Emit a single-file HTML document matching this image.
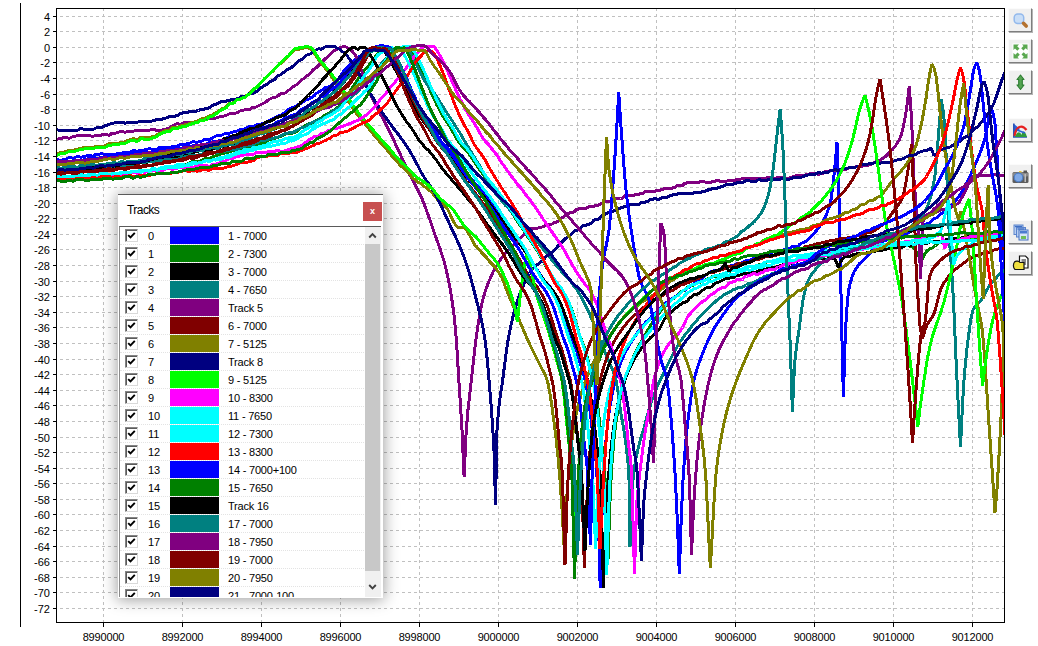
<!DOCTYPE html>
<html><head><meta charset="utf-8"><title>Tracks</title>
<style>
html,body{margin:0;padding:0;background:#fff;}
body{width:1038px;height:646px;position:relative;overflow:hidden;font-family:"Liberation Sans",sans-serif;font-size:11px;color:#000;}
#chart{position:absolute;left:0;top:0;}
#chart text{font-family:"Liberation Sans",sans-serif;font-size:11px;fill:#000;}
.tb{position:absolute;left:1008px;width:22px;height:22px;background:#f0f0f0;border-right:1px solid #7e7e7e;border-bottom:1px solid #7e7e7e;border-left:1px solid #fbfbfb;border-top:1px solid #fbfbfb;box-shadow:1px 1px 0 #b4b4b4;}
.tb svg{position:absolute;left:2px;top:2px;}
#panel{position:absolute;left:118px;top:194px;width:265px;height:404px;background:#fff;box-shadow:0 1px 14px 1px rgba(0,0,0,.38);}
#ptop{position:absolute;left:0;top:0;width:265px;height:1px;background:#5a5a5a;}
#ttl{position:absolute;left:9px;top:8px;font-size:12px;line-height:16px;letter-spacing:-0.55px;}
#cls{position:absolute;left:245px;top:8px;width:19px;height:19px;background:#c75050;color:#fff;font-size:9px;font-weight:bold;text-align:center;line-height:19px;}
#list{position:absolute;left:1px;top:32px;width:262px;height:371px;border-top:1px solid #5a5a5a;border-left:1px solid #8a8a8a;overflow:hidden;background:#fff;box-sizing:border-box;}
.row{position:absolute;left:0;width:246px;height:18px;border-bottom:1px dotted #e3e3e3;box-sizing:border-box;}
.cb{position:absolute;left:5px;top:2px;width:11px;height:11px;border:1px solid #848484;border-right-color:#d9d9d9;border-bottom-color:#d9d9d9;background:#fff;box-shadow:inset 1px 1px 0 #5a5a5a;}
.cb svg{position:absolute;left:1px;top:1px;}
.ix{position:absolute;left:28px;top:1px;line-height:16px;font-size:11px;}
.sw{position:absolute;left:50px;top:0;width:49px;height:17px;}
.nm{position:absolute;left:108px;top:1px;line-height:16px;font-size:11px;white-space:nowrap;letter-spacing:-0.2px;}
#sb{position:absolute;left:245px;top:0;width:16px;height:371px;background:#f0f0f0;}
#th{position:absolute;left:0;top:17px;width:15px;height:327px;background:#c8c8c8;}
</style></head><body>
<svg id="chart" width="1038" height="646" viewBox="0 0 1038 646">
<rect x="0" y="0" width="1038" height="646" fill="#fff"/>
<path d="M60.0 16.5H1004.0M60.0 31.5H1004.0M60.0 47.5H1004.0M60.0 62.5H1004.0M60.0 78.5H1004.0M60.0 94.5H1004.0M60.0 109.5H1004.0M60.0 125.5H1004.0M60.0 140.5H1004.0M60.0 156.5H1004.0M60.0 172.5H1004.0M60.0 187.5H1004.0M60.0 203.5H1004.0M60.0 218.5H1004.0M60.0 234.5H1004.0M60.0 249.5H1004.0M60.0 265.5H1004.0M60.0 281.5H1004.0M60.0 296.5H1004.0M60.0 312.5H1004.0M60.0 327.5H1004.0M60.0 343.5H1004.0M60.0 359.5H1004.0M60.0 374.5H1004.0M60.0 390.5H1004.0M60.0 405.5H1004.0M60.0 421.5H1004.0M60.0 437.5H1004.0M60.0 452.5H1004.0M60.0 468.5H1004.0M60.0 483.5H1004.0M60.0 499.5H1004.0M60.0 514.5H1004.0M60.0 530.5H1004.0M60.0 546.5H1004.0M60.0 561.5H1004.0M60.0 577.5H1004.0M60.0 592.5H1004.0M60.0 608.5H1004.0M103.5 8.0V622.0M182.5 8.0V622.0M261.5 8.0V622.0M340.5 8.0V622.0M419.5 8.0V622.0M498.5 8.0V622.0M577.5 8.0V622.0M656.5 8.0V622.0M735.5 8.0V622.0M814.5 8.0V622.0M893.5 8.0V622.0M972.5 8.0V622.0" stroke="#c0c0c0" stroke-width="1" stroke-dasharray="3 3" fill="none" shape-rendering="crispEdges"/>
<clipPath id="cp"><rect x="57" y="9" width="947" height="613"/></clipPath>
<g clip-path="url(#cp)" fill="none" stroke-width="3" stroke-linejoin="bevel" stroke-linecap="square" shape-rendering="crispEdges">
<path d="M56.0 160.5L58.0 159.5L60.0 160.5L62.0 160.0L64.0 159.5L66.0 159.0L68.0 158.0L70.0 157.5L72.0 158.0L74.0 158.0L76.0 157.0L78.0 156.5L80.0 157.0L82.0 157.0L84.0 156.0L86.0 156.0L88.0 155.5L89.5 155.0L90.0 155.0L92.0 156.0L94.0 156.0L96.0 154.0L98.0 154.0L100.0 154.0L102.0 153.5L104.0 154.5L106.0 154.5L108.0 154.5L110.0 154.0L112.0 154.0L114.0 154.0L116.0 154.0L118.0 153.5L120.0 153.5L122.0 153.0L124.0 152.5L126.0 152.0L128.0 152.5L129.0 152.5L130.0 152.0L132.0 151.0L134.0 150.5L136.0 151.0L138.0 151.0L140.0 150.5L142.0 150.5L144.0 150.0L146.0 149.5L148.0 149.0L150.0 148.5L152.0 149.5L154.0 149.0L155.0 149.0L156.0 149.0L158.0 149.0L160.0 147.0L162.0 147.0L164.0 147.5L166.0 147.0L168.0 147.5L170.0 147.5L172.0 146.5L174.0 146.0L176.0 146.5L178.0 146.0L180.0 144.5L181.6 144.5L182.0 144.0L184.0 144.5L186.0 144.0L188.0 143.5L190.0 143.0L192.1 142.0L194.1 141.5L196.1 142.5L198.1 142.0L200.1 141.5L202.1 141.0L204.1 139.5L206.1 139.0L208.0 140.0L208.1 140.0L210.1 139.5L212.1 138.0L214.1 137.0L216.1 136.0L218.1 135.5L220.1 136.0L222.1 135.0L224.1 134.0L226.1 133.5L228.1 133.5L230.1 133.0L232.1 132.5L234.0 131.5L234.1 131.5L236.1 131.5L238.1 130.5L240.1 129.5L242.1 129.0L244.1 129.0L246.1 128.5L248.1 127.0L250.1 126.5L252.1 126.5L254.1 126.0L256.1 125.0L258.1 124.5L260.1 124.5L262.1 123.5L264.1 123.5L266.0 123.0L266.1 123.0L268.1 121.0L270.1 120.0L272.1 119.0L274.1 118.0L276.1 117.0L278.1 116.0L280.1 115.5L282.1 114.5L284.1 113.0L286.1 111.5L288.1 109.5L290.1 108.5L292.1 108.0L292.6 107.5L294.1 107.0L296.1 106.0L298.1 104.5L300.1 104.0L302.1 102.5L304.1 101.0L306.1 99.5L308.1 99.5L310.1 98.5L312.1 97.0L314.1 96.0L316.1 93.5L318.1 92.5L319.0 92.0L320.1 91.0L322.1 90.0L324.1 88.5L326.1 87.0L328.1 87.5L330.1 86.0L332.1 84.5L334.1 83.0L336.1 81.0L338.1 79.0L338.4 79.0L340.1 76.5L342.1 73.5L344.1 70.5L345.0 69.5L346.1 68.5L348.1 66.0L350.1 64.5L352.1 62.0L354.1 60.5L356.1 59.0L358.1 57.5L360.1 56.0L361.0 55.5L362.1 54.5L364.1 53.0L366.1 51.5L368.1 51.0L370.1 49.5L371.6 49.0L372.1 49.0L374.1 48.0L376.1 46.5L377.0 46.5L378.1 46.5L380.1 45.5L382.1 45.5L384.1 46.0L386.1 46.0L386.6 46.0L388.1 47.0L390.1 50.0L392.1 53.0L393.0 54.5L394.1 56.0L396.1 60.0L398.1 63.5L400.1 67.5L401.6 70.5L402.1 71.5L404.1 76.0L406.1 80.5L408.1 84.5L409.0 86.5L410.1 89.0L412.1 93.0L414.1 97.0L416.1 101.0L416.9 102.5L418.1 104.5L420.1 108.5L422.1 112.0L424.1 115.0L424.4 115.5L426.1 118.0L428.1 121.0L430.1 124.0L432.1 126.5L433.4 128.5L434.1 129.5L436.1 133.0L438.1 136.5L440.0 139.5L440.1 140.0L442.1 142.5L444.1 144.5L446.1 146.5L448.1 149.0L450.1 151.0L451.7 152.5L452.1 153.5L454.1 156.0L456.1 158.5L458.1 161.5L460.1 164.0L460.7 165.0L462.1 166.5L464.2 169.5L466.2 172.0L468.2 175.0L470.2 177.5L471.2 178.5L472.2 180.0L474.2 182.5L476.2 184.5L478.2 187.0L479.5 188.5L480.2 189.5L482.2 192.0L484.2 194.0L486.2 196.0L488.2 199.0L490.2 201.5L492.1 204.0L492.2 204.5L494.2 207.0L496.2 209.5L498.2 212.5L500.2 215.0L502.2 218.0L503.2 219.5L504.2 221.0L506.2 224.0L508.2 226.5L510.2 229.0L512.2 232.0L514.2 235.0L514.3 235.0L516.2 237.5L518.2 240.5L520.2 243.0L522.2 245.5L524.2 248.5L525.4 250.5L526.2 251.5L528.2 255.0L530.2 258.5L532.2 262.0L534.2 265.0L534.6 266.0L536.2 268.5L538.2 271.5L540.2 274.5L542.2 277.5L543.6 279.5L544.2 280.5L546.2 283.0L548.2 284.5L550.2 287.0L551.1 288.5L552.2 290.0L554.2 293.5L556.2 296.5L558.2 300.5L559.8 304.0L560.2 305.0L562.2 310.0L564.2 316.0L565.4 319.5L566.2 322.0L568.2 328.0L570.2 334.0L570.5 335.0L572.2 339.5L574.2 344.5L576.2 349.5L576.5 350.5L578.2 356.0L580.2 363.0L581.0 366.0L582.2 370.0L584.2 376.5L585.5 381.5L586.2 385.0L588.2 397.0L588.9 401.5L590.2 412.0L591.7 425.0L592.2 430.0L594.2 448.0L594.2 448.0L596.2 462.0L596.4 463.5L597.1 478.5L598.2 508.5L600.2 588.0L602.2 508.0L602.5 500.0L604.2 464.5L606.0 440.0L606.2 437.5L608.2 419.0L610.2 405.0L612.0 395.0L612.2 394.0L614.2 384.5L616.3 376.5L618.3 369.5L620.3 364.0L621.0 362.0L622.3 359.0L624.3 354.5L626.3 350.5L628.3 347.0L630.3 343.5L632.3 340.5L634.0 338.0L634.3 337.5L636.3 334.5L638.3 331.5L640.3 329.0L642.3 326.5L644.3 324.0L646.4 321.5L648.4 320.0L650.0 318.5L650.4 318.0L652.4 315.5L654.4 313.5L656.4 312.0L658.4 310.0L660.4 308.0L662.4 306.5L664.4 304.5L666.4 302.5L668.4 301.5L670.0 300.0L670.4 300.0L672.4 298.5L674.5 297.0L676.5 296.0L678.5 294.5L680.5 292.0L682.5 291.0L684.5 290.5L686.5 289.0L688.5 287.5L689.0 287.0L690.5 286.0L692.5 284.5L694.5 283.0L696.5 282.5L698.5 281.0L700.5 279.5L702.5 278.0L704.6 276.0L706.6 274.5L708.6 273.0L710.6 272.0L712.6 271.5L713.0 271.0L714.6 270.5L716.6 270.5L718.6 270.0L720.6 269.0L722.6 268.5L724.6 267.0L726.6 266.5L728.6 266.5L730.6 266.0L732.6 265.5L734.7 265.0L736.7 263.5L738.7 263.0L740.7 263.0L741.6 263.0L742.7 262.5L744.7 261.5L746.7 260.5L748.7 261.0L750.7 260.0L752.7 259.0L754.7 258.5L756.7 257.5L758.7 257.0L760.7 256.5L762.7 256.0L764.8 254.5L766.8 254.0L768.8 254.5L770.0 254.0L770.8 253.5L772.8 251.5L774.8 251.0L776.8 252.0L778.8 251.5L780.8 251.0L782.8 250.5L784.8 249.0L786.8 248.5L788.8 248.0L790.0 248.0L790.8 247.5L792.9 246.5L794.9 246.0L796.9 246.5L798.9 245.5L800.0 244.0L800.9 243.5L802.9 242.5L804.9 242.0L806.9 240.5L808.9 238.5L810.9 236.5L812.9 234.5L814.9 232.5L815.0 232.0L816.9 230.0L818.9 227.5L820.9 224.5L823.0 221.5L825.0 217.5L827.0 213.0L829.0 207.5L830.0 204.0L831.0 199.5L833.0 184.0L834.0 175.0L835.0 165.5L837.0 142.5L839.1 200.5L839.4 210.0L841.3 308.5L841.5 320.0L843.4 397.0L845.4 331.5L845.5 330.0L847.4 301.0L848.6 291.0L849.4 286.5L851.5 278.5L853.5 273.0L854.6 271.0L855.5 269.5L857.5 266.5L859.5 263.5L861.5 262.0L863.5 260.0L865.6 258.0L866.8 257.0L867.6 256.0L869.6 253.5L871.6 251.5L873.6 249.5L875.6 247.5L877.7 245.5L879.7 244.5L881.0 242.5L881.7 242.0L883.7 241.0L885.7 240.5L887.7 239.5L889.7 238.5L891.8 237.5L893.8 237.5L895.8 237.0L897.8 236.5L899.8 236.0L901.8 235.0L903.8 234.5L905.9 234.0L907.9 233.0L909.9 232.0L910.0 232.0L911.9 231.0L913.9 230.0L915.9 229.0L918.0 229.0L920.0 228.0L922.0 226.5L924.0 225.5L926.0 224.0L928.0 223.5L930.0 222.5L932.1 220.0L934.1 218.5L936.1 218.0L938.1 216.5L940.0 214.5L940.1 214.5L942.1 213.0L944.1 212.0L946.2 210.0L948.2 208.0L950.2 206.5L952.2 204.0L954.2 202.0L956.2 200.0L958.2 197.5L960.0 195.0L960.3 194.5L962.3 191.5L964.3 188.0L966.3 184.0L968.3 180.0L970.3 175.5L972.4 171.0L974.4 166.5L975.0 165.0L976.4 162.0L978.4 157.0L980.4 152.0L982.4 146.5L984.4 140.0L985.0 138.0L986.5 131.0L988.5 119.5L990.0 113.5L990.5 112.5L992.5 110.0L994.8 122.0L995.0 124.0L997.0 155.0L998.0 171.5L999.2 187.5L1001.0 210.0L1001.5 217.5L1003.8 255.5L1006.0 300.0" stroke="#0000FF"/>
<path d="M56.0 178.0L58.0 177.0L60.0 178.5L62.0 178.5L64.0 177.5L66.0 177.5L68.0 178.0L70.0 177.5L72.0 178.0L74.0 177.5L76.0 177.0L78.0 177.0L80.0 176.0L82.0 176.0L84.0 176.5L86.0 176.5L88.0 176.0L90.0 175.5L92.0 175.5L94.0 175.5L96.0 176.0L98.0 176.0L100.0 174.5L102.0 174.5L104.0 175.0L106.0 174.5L108.0 175.0L110.0 175.0L112.0 174.5L114.0 174.5L116.0 174.5L118.0 174.0L120.0 173.0L122.0 173.0L124.0 173.0L126.0 172.5L128.0 173.0L130.0 173.0L132.0 171.5L134.0 171.5L136.0 171.5L138.0 171.5L140.0 170.0L142.0 170.0L144.0 170.5L146.0 170.0L148.0 170.5L150.0 170.0L152.0 169.0L154.0 168.5L156.0 169.5L158.0 169.5L160.0 168.0L162.0 167.5L164.0 167.0L166.0 167.0L168.0 166.5L170.0 166.0L172.0 167.0L174.0 166.5L176.0 165.0L178.0 164.5L180.0 165.0L182.0 164.5L184.0 165.0L186.0 164.5L188.0 163.5L190.0 163.0L192.0 161.5L194.0 161.0L196.0 162.0L198.0 161.5L200.0 161.0L202.0 160.5L204.0 159.0L206.0 158.5L208.0 159.0L210.0 158.5L212.0 157.0L214.0 156.5L216.0 155.5L218.0 155.0L220.0 154.5L222.0 153.5L224.0 153.5L226.0 152.5L228.0 152.5L230.0 151.5L232.0 151.0L234.0 150.5L236.0 149.5L238.0 149.0L240.0 148.5L242.0 148.0L244.0 146.5L246.0 146.0L248.0 147.0L250.0 146.5L252.0 145.0L254.0 144.5L256.0 144.5L258.0 144.0L260.0 143.5L262.0 143.0L264.0 142.5L266.0 142.0L268.0 140.5L270.0 139.5L272.0 139.0L274.0 138.0L276.0 138.0L278.0 137.5L280.0 136.5L282.0 136.0L284.0 135.0L286.0 134.0L288.0 133.5L290.0 133.0L292.0 133.5L294.0 132.5L296.0 132.0L298.0 131.0L300.0 128.5L302.0 127.5L304.0 126.5L306.0 125.0L308.0 124.0L310.0 123.0L312.0 123.5L314.0 122.0L316.0 120.5L318.0 119.5L320.0 118.5L322.0 117.5L324.0 115.5L326.0 114.5L328.0 113.5L330.0 112.5L332.0 111.0L334.0 110.0L336.0 109.0L338.0 107.0L338.4 107.0L340.0 105.0L342.0 102.5L344.0 100.0L346.0 97.0L348.0 94.0L350.0 91.0L350.6 90.0L352.0 88.0L354.0 85.0L356.0 82.0L358.0 79.0L360.0 76.5L361.0 75.0L362.0 73.5L364.0 71.0L366.0 68.5L368.0 66.5L370.0 64.0L371.8 61.5L372.0 61.0L374.0 58.5L376.0 56.0L378.0 54.0L380.0 52.5L382.0 51.0L384.0 48.5L386.0 48.0L388.0 47.5L390.0 47.0L392.0 49.0L394.0 49.0L396.0 47.5L398.0 47.5L400.0 47.0L402.0 47.0L404.0 48.0L406.0 48.0L408.0 47.0L410.0 49.0L412.0 52.5L414.0 56.0L416.0 59.5L418.0 63.5L420.0 67.5L422.0 72.0L424.0 76.5L426.0 81.0L428.0 85.5L429.0 88.0L430.0 90.0L432.0 94.5L434.0 99.0L436.0 103.0L436.4 104.0L438.0 107.0L440.0 111.0L442.0 114.5L443.4 117.0L444.0 118.0L446.0 121.0L448.0 124.0L450.0 127.0L451.8 130.0L452.0 130.5L454.0 134.0L456.0 137.5L458.0 141.0L460.0 143.5L462.0 146.0L464.0 148.0L466.0 150.5L468.0 152.5L469.0 154.0L470.0 155.5L472.0 158.5L474.0 161.5L476.0 164.5L477.4 166.5L478.0 167.5L480.0 170.0L482.0 173.0L484.0 176.0L486.0 178.5L487.2 180.0L488.0 181.0L490.0 183.5L492.0 186.0L494.0 188.5L495.0 190.0L496.0 191.0L498.0 194.0L500.0 196.5L502.0 199.5L504.0 202.0L506.0 204.5L506.8 205.5L508.0 207.0L510.0 210.0L512.0 213.0L514.0 216.0L516.0 219.5L517.2 221.0L518.0 222.5L520.0 225.0L522.0 228.0L524.0 231.0L526.0 234.0L527.6 236.5L528.0 237.0L530.0 240.0L532.0 243.0L534.0 245.5L536.0 249.0L538.0 252.0L540.0 255.5L542.0 259.0L544.0 263.0L546.0 266.5L546.6 267.5L548.0 270.0L550.0 273.0L552.0 276.5L554.0 279.5L555.0 281.0L556.0 282.5L558.0 285.0L560.0 287.0L562.0 290.0L564.0 293.0L566.0 296.5L568.0 300.5L570.0 305.0L570.2 305.5L572.0 310.5L574.0 316.5L575.4 321.0L576.0 323.0L578.0 329.5L580.0 336.0L580.2 336.5L582.0 341.5L584.0 346.5L585.8 352.0L586.0 352.5L588.0 360.0L590.0 367.5L592.0 374.5L594.0 382.0L594.2 383.0L596.0 393.0L597.4 403.0L598.0 408.0L600.0 426.5L602.0 446.0L602.4 449.5L604.0 461.0L604.4 465.0L605.1 480.0L606.0 501.5L608.0 560.0L610.0 501.0L611.0 480.0L612.0 463.5L614.0 439.0L615.0 430.0L616.0 422.0L618.0 409.5L620.1 399.0L621.0 395.0L622.1 390.5L624.1 383.0L626.1 376.0L628.1 370.0L630.0 365.0L630.1 364.5L632.1 360.0L634.1 355.5L636.1 351.0L638.1 347.5L640.1 343.5L642.2 340.0L644.2 336.5L645.0 335.0L646.2 333.0L648.2 329.5L650.2 326.0L652.2 323.0L654.2 320.0L656.2 317.0L658.2 314.5L660.0 312.0L660.2 311.5L662.2 309.0L664.3 307.0L666.3 305.0L668.3 303.0L670.3 301.0L672.3 299.5L674.3 298.0L674.9 297.5L676.3 296.5L678.3 295.0L680.3 292.5L682.3 291.0L684.3 290.0L686.4 288.5L688.4 286.5L689.0 286.0L690.4 285.5L692.4 285.5L694.4 284.5L696.4 283.5L698.4 282.5L700.4 282.0L702.4 281.5L704.4 280.5L705.0 280.0L706.4 279.5L708.4 278.5L710.5 278.0L712.5 276.5L714.5 276.0L716.5 276.0L718.5 275.5L720.5 274.5L722.5 274.0L724.5 273.5L726.5 272.5L728.5 271.5L729.5 271.0L730.5 271.0L732.6 270.5L734.6 270.0L736.6 270.5L738.6 270.0L740.6 269.5L742.6 269.0L744.6 268.0L746.6 267.5L748.6 266.5L750.6 266.0L752.6 267.0L754.7 266.5L756.7 265.5L757.8 265.0L758.7 265.0L760.7 264.5L762.7 264.0L764.7 262.5L766.7 262.0L768.7 261.5L770.7 261.0L772.7 261.0L774.7 260.5L776.8 260.0L778.8 259.5L780.8 258.5L782.0 258.0L782.8 258.0L784.8 259.0L786.8 258.5L788.8 257.5L790.8 257.0L792.8 256.0L794.8 255.5L796.8 256.0L798.9 255.5L800.9 255.5L802.9 255.5L804.9 254.5L806.9 254.5L808.9 254.5L810.0 254.5L810.9 254.0L812.9 253.5L814.9 253.0L816.9 253.0L818.9 253.0L821.0 252.0L823.0 251.5L825.0 250.5L827.0 250.0L829.0 250.5L831.0 250.0L833.0 249.5L835.0 249.0L837.0 248.5L839.0 248.5L841.0 248.0L843.0 247.5L845.1 247.0L847.1 247.0L849.1 246.5L851.1 246.5L853.1 246.0L855.1 246.0L857.1 246.0L859.1 246.0L860.0 245.5L861.1 245.5L863.1 245.5L865.1 245.0L867.2 245.0L869.2 245.5L871.2 245.0L873.2 245.0L875.2 245.0L877.2 243.5L879.2 243.5L881.2 244.5L883.2 244.0L885.2 244.5L887.2 244.0L889.3 244.0L891.3 243.5L893.3 244.0L895.3 244.0L897.3 242.5L899.3 242.5L900.0 243.0L901.3 243.0L903.3 243.5L905.3 244.5L907.3 245.5L909.3 246.0L911.4 247.0L912.0 246.5L913.4 247.5L915.4 250.0L917.4 253.5L919.4 257.0L921.4 261.0L923.4 256.5L925.4 253.0L926.0 252.0L927.4 250.5L929.5 249.0L931.5 248.0L932.0 248.0L933.5 247.0L935.5 245.5L937.5 243.5L939.5 242.5L941.5 243.0L943.6 242.5L943.6 242.5L945.6 241.0L947.6 240.5L949.6 240.5L951.6 240.5L953.6 239.5L955.6 239.0L957.7 240.5L959.7 240.0L961.7 239.5L963.7 239.5L965.7 239.0L967.7 239.0L969.7 239.5L970.0 239.5L971.8 239.5L973.8 238.0L975.8 237.5L977.8 238.0L979.8 238.0L981.8 238.0L983.8 237.5L985.9 237.5L987.9 237.0L989.9 237.5L991.9 237.5L993.9 237.5L995.9 237.5L997.9 238.0L1000.0 237.5L1002.0 236.0L1004.0 236.0L1006.0 236.5" stroke="#008000"/>
<path d="M56.0 171.0L58.0 170.5L60.0 170.0L62.0 170.0L64.0 170.5L66.0 170.5L68.0 170.0L70.0 170.0L72.0 171.0L74.0 171.0L76.1 170.5L78.1 170.5L80.1 169.5L82.1 169.0L84.1 169.0L86.1 169.0L88.1 169.0L90.1 169.0L92.1 169.5L94.1 169.5L96.1 168.5L98.1 168.0L100.0 167.5L100.1 167.5L102.1 167.0L104.1 168.5L106.1 168.0L108.1 167.0L110.1 166.5L112.2 167.0L114.2 166.5L116.2 165.5L118.2 165.5L120.2 166.5L122.2 166.0L124.2 164.5L126.2 164.0L128.2 164.5L130.2 164.0L132.2 163.5L134.2 163.0L136.2 164.5L138.2 164.0L140.0 163.0L140.2 162.5L142.2 162.5L144.2 163.0L146.2 163.0L148.3 161.5L150.3 161.0L152.3 162.0L154.3 161.5L156.3 159.5L158.3 159.0L160.3 160.5L162.3 160.0L164.3 158.0L166.3 158.0L168.3 157.5L170.3 157.0L172.3 157.5L174.3 157.0L176.3 156.5L178.3 156.0L180.0 156.5L180.3 156.5L182.3 156.0L184.4 155.0L186.4 154.5L188.4 154.0L190.4 154.0L192.4 152.5L194.4 152.0L196.4 151.5L198.4 151.0L200.4 150.5L202.4 150.0L204.4 150.5L206.4 150.0L208.4 150.0L210.4 149.5L212.4 149.0L214.4 148.5L216.0 148.0L216.4 148.0L218.4 147.5L220.5 147.0L222.5 146.5L224.5 145.5L226.5 145.0L228.5 145.0L230.0 144.5L230.5 144.5L232.5 143.5L234.5 143.0L236.5 142.0L238.5 141.5L240.5 141.0L242.5 140.5L244.5 139.5L246.5 139.0L248.5 138.5L250.5 138.0L252.5 137.0L254.5 136.0L256.5 135.0L258.6 134.0L260.0 133.5L260.6 133.0L262.6 132.5L264.6 132.5L266.6 132.0L268.6 132.0L270.6 131.0L272.6 129.5L274.6 129.0L276.6 128.0L278.6 127.0L280.6 125.5L282.6 124.5L284.6 125.0L286.6 124.0L288.6 123.5L290.6 122.5L292.0 121.5L292.6 121.0L294.7 120.0L296.7 119.0L298.7 117.5L300.7 116.0L302.7 115.0L304.7 114.0L306.7 112.5L308.7 110.5L310.7 109.0L312.7 108.5L314.7 107.0L316.7 104.5L318.7 103.0L320.0 102.5L320.7 102.0L322.7 100.5L324.7 99.5L326.7 98.0L328.7 96.5L330.8 95.0L332.8 92.5L334.8 91.0L336.8 89.0L338.4 87.5L338.8 87.5L340.8 86.0L342.8 83.5L344.8 81.0L346.8 78.5L348.8 76.0L350.8 73.5L352.0 72.0L352.8 71.0L354.8 68.0L356.8 65.5L358.8 62.5L360.8 59.5L362.0 58.0L362.8 57.0L364.8 54.5L366.9 52.0L368.0 51.5L368.9 50.5L370.9 49.0L372.0 48.5L372.9 48.5L374.9 48.5L376.9 48.0L378.9 48.0L380.9 48.0L381.0 48.0L382.9 49.0L384.9 51.5L386.9 55.0L387.7 56.0L388.9 58.0L390.9 61.0L392.9 65.0L394.9 69.0L396.6 72.0L396.9 72.5L398.9 76.5L400.9 81.0L403.0 85.0L404.4 88.0L405.0 89.0L407.0 93.0L409.0 97.0L411.0 101.0L412.6 104.0L413.0 104.5L415.0 108.0L417.0 111.5L419.0 115.0L420.4 117.0L421.0 118.0L423.0 121.0L425.0 123.5L427.0 126.0L429.0 129.0L429.7 130.0L431.0 132.0L433.0 135.5L435.0 138.5L436.6 141.0L437.0 141.5L439.0 144.0L441.1 146.5L443.1 148.5L445.1 150.0L447.1 152.0L448.9 154.0L449.1 154.0L451.1 156.5L453.1 159.5L455.1 162.5L457.1 165.0L458.2 166.5L459.1 167.5L461.1 170.5L463.1 173.0L465.1 175.0L467.1 177.5L469.1 180.0L469.1 180.0L471.1 182.5L473.1 184.5L475.1 187.0L477.2 189.0L477.8 190.0L479.2 191.5L481.2 193.5L483.2 196.0L485.2 198.5L487.2 200.5L489.2 203.0L490.9 205.5L491.2 205.5L493.2 208.5L495.2 211.5L497.2 214.0L499.2 216.5L501.2 219.0L502.5 221.0L503.2 222.0L505.2 224.5L507.2 227.0L509.2 230.0L511.2 233.0L513.3 235.5L514.1 236.5L515.3 238.0L517.3 241.0L519.3 243.5L521.3 246.0L523.3 248.5L525.3 251.5L525.6 252.0L527.3 254.5L529.3 258.0L531.3 261.0L533.3 264.5L535.2 267.5L535.3 267.5L537.3 270.5L539.3 273.5L541.3 276.5L543.3 279.5L544.5 281.0L545.3 282.0L547.3 284.5L549.4 286.5L551.4 289.0L552.3 290.0L553.4 291.5L555.4 294.5L557.4 297.5L559.4 301.5L561.4 305.5L561.4 305.5L563.4 310.0L565.4 316.0L567.2 321.0L567.4 321.5L569.4 327.5L571.4 333.0L572.6 336.5L573.4 338.5L575.4 343.5L577.4 348.5L578.8 352.0L579.4 354.0L581.4 360.5L583.4 367.5L583.5 367.5L585.5 373.5L587.5 380.0L588.1 383.0L589.5 389.5L591.5 401.5L591.7 403.0L593.5 417.0L594.6 426.5L595.5 434.0L597.3 449.5L597.5 451.0L599.5 465.0L599.5 465.0L600.3 480.0L601.5 512.0L603.5 588.0L605.5 531.5L607.0 500.0L607.5 491.5L609.5 464.5L611.5 444.0L612.0 440.0L613.5 428.5L615.5 416.0L617.6 405.0L619.6 396.5L620.0 395.0L621.6 389.5L623.6 383.5L625.6 378.0L627.6 373.0L629.6 368.5L631.6 364.5L633.6 360.5L634.0 360.0L635.6 357.0L637.6 354.0L639.6 351.0L641.6 348.0L643.7 345.5L645.7 343.0L647.7 340.5L649.7 338.5L650.0 338.0L651.7 336.5L653.7 335.0L655.7 333.0L657.7 331.0L658.7 330.0L659.7 328.5L661.7 324.5L663.7 320.5L664.7 319.0L665.7 317.5L667.7 315.0L669.8 313.5L671.8 312.0L673.8 309.5L674.9 308.5L675.8 308.0L677.8 306.5L679.8 305.0L681.8 303.5L683.8 302.0L685.8 302.0L687.8 300.5L689.0 298.5L689.8 298.0L691.8 297.0L693.8 295.0L695.9 294.0L697.9 294.0L699.9 292.5L701.9 290.5L703.9 289.5L705.9 288.0L707.9 287.0L709.0 288.0L709.9 287.5L711.9 286.5L713.9 284.0L715.9 283.0L717.9 282.5L719.9 281.5L722.0 280.5L724.0 279.5L726.0 278.5L728.0 278.0L729.5 278.0L730.0 278.0L732.0 277.0L734.0 277.5L736.0 276.0L738.0 275.5L740.0 275.0L742.0 274.5L744.0 273.5L746.0 273.0L748.1 273.5L750.1 273.5L752.1 272.5L753.8 272.0L754.1 272.0L756.1 272.0L758.1 271.5L760.1 270.0L762.1 269.5L764.1 269.5L766.1 269.0L768.1 268.0L770.1 267.5L772.1 268.0L774.2 267.5L776.2 267.0L778.2 266.5L780.2 265.5L782.0 265.0L782.2 265.0L784.2 264.5L786.2 264.0L788.2 264.5L790.2 264.0L792.2 262.5L794.2 261.5L796.2 261.5L798.2 260.5L800.3 259.5L802.3 259.0L804.3 260.0L806.3 260.0L808.3 259.5L810.0 259.5L810.3 259.5L812.3 258.5L814.3 258.5L816.3 258.5L818.3 258.5L820.3 258.5L822.3 258.5L824.3 259.0L826.4 259.5L828.4 258.5L830.4 258.5L832.4 258.0L834.0 258.0L834.4 258.5L836.4 262.5L838.4 268.0L840.4 262.0L842.4 259.0L843.0 258.5L844.5 256.5L846.5 256.0L846.5 256.0L848.5 256.5L850.5 256.0L852.5 255.0L854.6 254.5L856.6 254.0L858.6 253.5L860.6 254.0L862.6 253.5L864.7 253.5L866.7 253.0L868.7 252.5L870.7 252.0L872.7 251.5L874.7 251.5L876.8 250.5L878.8 250.5L880.0 250.5L880.8 250.5L882.8 250.0L884.8 249.0L886.9 249.0L888.9 248.5L890.9 248.0L892.9 247.5L894.9 247.5L897.0 247.5L899.0 247.5L901.0 247.0L903.0 247.0L905.0 245.5L907.1 245.0L909.1 245.5L911.1 245.5L913.1 244.0L913.3 244.0L915.1 244.0L917.2 243.5L919.2 243.5L921.2 243.5L923.2 243.0L925.2 243.5L927.2 243.5L929.3 242.0L931.3 241.5L933.3 241.5L935.3 241.5L937.3 241.5L939.4 241.5L941.4 241.0L941.6 241.0L943.4 240.5L945.4 240.0L947.4 239.5L949.5 239.5L951.5 239.5L953.5 239.0L955.5 238.5L957.5 239.0L959.6 238.5L961.6 238.0L963.6 237.5L965.6 237.5L967.6 237.0L969.7 236.5L971.7 236.5L973.7 236.0L975.7 235.5L977.7 237.0L979.7 237.0L980.0 235.5L981.8 235.0L983.8 235.0L985.8 235.5L987.8 235.0L989.8 234.0L991.9 233.5L993.9 233.5L995.9 233.5L997.9 234.0L999.9 233.5L1002.0 232.5L1004.0 232.5L1006.0 233.0" stroke="#000000"/>
<path d="M56.0 170.0L58.0 170.0L60.0 170.0L62.0 170.0L64.0 170.0L66.0 170.0L68.0 169.0L70.0 169.0L72.0 168.5L74.0 168.0L76.0 169.0L78.0 169.0L80.0 168.5L82.0 168.5L84.0 168.5L86.0 168.5L88.0 167.0L90.0 167.0L92.0 168.5L94.0 168.0L96.0 167.5L98.0 167.0L100.0 167.0L102.0 167.0L104.0 166.5L106.0 166.5L108.0 167.0L110.0 167.0L112.0 166.5L114.0 166.5L116.0 165.0L118.0 164.5L120.0 165.0L122.0 165.0L124.0 165.0L126.0 165.0L128.0 165.0L130.0 164.5L132.0 164.0L134.0 164.0L136.0 163.5L138.0 163.5L140.0 163.0L142.0 162.5L144.0 162.0L146.0 162.0L148.0 161.0L150.0 161.0L152.0 162.0L154.0 161.5L156.0 161.5L158.0 161.0L160.0 160.5L162.0 160.5L164.0 160.0L166.0 159.5L168.0 159.0L170.0 159.0L172.0 159.5L174.0 159.5L176.0 159.0L178.0 159.0L180.0 158.0L182.0 157.5L184.0 157.0L186.0 156.5L188.0 156.0L190.0 155.5L192.0 155.5L194.0 155.0L196.0 155.5L198.0 155.0L200.0 154.5L202.0 154.0L204.0 153.0L206.0 153.0L208.0 152.5L210.0 152.0L212.0 153.5L214.0 153.0L216.0 152.5L218.0 152.5L220.0 151.0L222.0 150.5L224.0 151.0L226.0 151.0L228.0 150.0L230.0 150.0L232.0 149.5L234.0 149.0L236.0 149.5L238.0 149.0L240.0 147.5L242.0 147.0L244.0 146.5L246.0 146.0L248.0 145.5L250.0 145.0L252.0 145.0L254.0 144.5L256.0 143.0L258.0 142.5L260.0 141.0L262.0 140.5L264.0 140.5L266.0 140.0L268.0 139.5L270.0 138.5L272.0 138.5L274.0 138.0L276.0 137.5L278.0 137.0L280.0 136.0L282.0 135.5L284.0 134.0L286.0 133.5L288.0 133.0L290.0 132.5L292.0 132.5L294.0 132.0L296.0 130.5L298.0 129.5L300.0 128.5L302.0 127.5L304.0 127.5L306.0 126.5L308.0 124.5L310.0 123.5L312.0 122.5L314.0 121.5L316.0 121.0L318.0 120.0L320.0 119.5L322.0 118.5L324.0 117.5L326.0 116.5L328.0 114.5L330.0 113.5L332.0 111.5L334.0 110.5L336.0 109.5L338.0 108.0L338.4 108.0L340.0 107.0L342.0 105.5L344.0 103.0L346.0 101.5L348.0 100.0L350.0 98.5L352.0 96.5L354.0 94.5L355.0 93.5L356.0 93.5L358.0 91.5L360.0 89.0L362.0 86.5L364.0 84.5L366.0 82.0L368.0 80.0L370.0 77.5L372.0 75.5L374.0 73.0L376.0 70.5L378.0 68.0L380.0 65.5L382.0 63.0L383.0 61.5L384.0 61.0L386.0 58.5L388.0 56.5L390.0 54.0L392.0 51.5L394.0 49.5L396.0 49.0L397.0 48.5L398.0 48.5L400.0 48.0L402.0 48.0L404.0 49.0L406.0 49.0L407.0 49.0L408.0 48.0L410.0 52.0L412.0 56.0L414.0 60.0L416.0 64.0L418.0 68.0L420.0 72.0L422.0 76.0L424.0 79.5L426.0 83.0L428.0 86.0L430.0 89.0L432.0 90.5L433.4 92.0L434.0 93.0L436.0 95.5L438.0 98.5L440.0 102.0L442.0 105.0L444.0 108.5L445.0 110.0L446.0 111.5L448.0 114.5L450.0 117.5L452.0 120.5L454.0 123.5L456.0 127.0L458.0 130.0L460.0 133.0L462.0 136.5L464.0 140.0L466.0 143.5L468.0 146.5L470.0 150.0L472.0 153.5L474.0 156.5L476.0 160.0L478.0 163.0L480.0 166.5L482.0 170.0L484.0 173.5L486.0 177.5L488.0 181.5L490.0 185.0L492.0 188.5L493.0 190.0L494.0 191.5L496.0 194.0L498.0 196.0L500.0 198.5L502.0 201.0L504.0 203.5L506.0 206.0L508.0 207.5L510.0 210.0L512.0 212.5L514.0 215.0L516.0 217.5L518.0 219.5L520.0 221.5L522.0 224.0L524.0 227.0L526.0 229.0L527.0 230.5L528.0 231.0L530.0 233.5L532.0 235.5L534.0 238.0L536.0 240.0L538.0 242.5L540.0 245.0L542.0 247.5L544.0 250.0L546.0 252.0L548.0 255.0L550.0 257.5L552.0 260.0L554.0 262.5L556.0 265.0L558.0 267.5L560.0 269.5L562.0 272.0L564.0 274.5L566.0 276.5L568.0 278.5L570.0 280.5L572.0 283.5L574.0 286.0L576.0 288.5L577.0 290.0L578.0 291.5L580.0 295.0L582.0 298.5L584.0 302.5L586.0 306.5L588.0 310.5L590.0 315.0L592.0 319.5L594.0 324.5L596.0 329.5L598.0 335.0L600.0 340.0L602.0 345.0L604.0 349.5L606.0 354.5L608.0 359.5L609.0 362.0L610.0 364.5L612.0 368.5L614.0 373.5L616.0 380.0L618.0 392.0L620.0 407.5L620.5 411.0L622.0 419.5L624.0 431.0L624.4 434.0L626.0 444.5L628.0 463.0L629.0 480.0L630.0 546.5L632.0 495.5L633.0 480.0L634.0 471.0L636.0 458.0L638.0 449.0L639.0 445.0L640.0 441.0L642.1 434.0L643.0 431.0L644.1 427.5L646.1 420.0L648.1 412.5L650.1 406.0L652.0 400.0L652.1 399.5L654.1 394.5L656.1 389.5L658.1 384.5L660.1 380.0L662.1 376.0L664.1 372.0L665.0 370.0L666.2 367.5L668.2 363.5L670.2 359.5L672.2 355.5L674.2 352.0L676.2 348.5L678.2 345.0L680.0 342.0L680.2 341.5L682.2 339.0L684.2 336.0L686.2 333.5L688.2 331.0L689.0 330.0L690.3 328.5L692.3 325.5L694.3 323.0L696.3 321.0L698.3 318.5L700.3 316.5L702.3 314.0L704.3 312.0L705.0 311.5L706.3 310.0L708.3 308.0L710.3 306.0L712.3 304.0L714.4 302.5L716.4 300.5L718.4 299.0L720.4 297.5L721.4 297.0L722.4 296.0L724.4 294.5L726.4 293.5L728.4 292.5L730.4 291.5L732.4 290.0L734.4 289.5L736.4 288.5L738.5 287.5L740.5 288.0L741.6 287.5L742.5 287.0L744.5 286.0L746.5 285.5L748.5 283.5L750.5 283.0L752.5 283.0L754.5 282.0L756.5 281.0L758.5 280.0L760.5 278.5L762.6 278.0L764.6 276.5L766.6 276.0L768.6 275.5L770.0 275.0L770.6 275.0L772.6 273.5L774.6 273.0L776.6 272.5L778.6 272.0L780.6 270.5L782.6 270.0L784.6 269.5L786.7 268.5L788.7 268.0L790.7 267.5L792.7 266.0L794.7 265.5L796.7 265.5L798.7 264.5L800.0 264.5L800.7 264.0L802.7 263.5L804.7 262.5L806.7 262.0L808.7 262.0L810.8 261.5L812.8 259.5L814.8 259.0L816.8 259.5L818.8 259.0L820.8 257.5L822.8 257.0L824.8 256.0L826.8 255.5L828.8 255.5L830.8 255.0L832.8 254.5L834.9 253.5L836.9 252.0L838.9 251.5L840.0 251.5L840.9 251.0L842.9 250.5L844.9 250.0L846.9 249.5L848.9 249.0L850.9 248.5L852.9 248.0L854.9 247.5L856.9 248.0L859.0 247.5L861.0 245.0L863.0 244.5L865.0 245.0L867.0 244.5L869.0 243.0L871.0 242.5L873.0 242.5L875.0 242.0L877.0 240.0L879.0 239.5L880.0 239.5L881.0 239.0L883.1 238.5L885.1 239.0L887.1 238.5L889.1 236.5L891.1 236.0L893.1 235.0L895.1 234.0L897.1 233.5L899.1 232.5L901.1 232.5L903.1 231.5L905.0 229.0L905.1 229.0L907.2 228.0L909.2 228.5L911.2 227.0L913.2 224.5L915.2 222.5L917.2 220.5L919.2 218.5L920.0 218.0L921.2 217.0L923.2 214.0L925.2 211.0L926.8 208.0L927.2 207.0L929.2 201.5L931.3 194.5L933.3 185.0L934.7 177.0L935.3 172.5L937.3 150.0L938.7 132.0L939.3 125.0L941.3 99.0L943.4 113.0L944.0 119.0L945.6 143.5L946.6 166.0L947.7 201.5L948.0 210.0L949.8 244.5L952.0 276.0L953.4 300.0L954.1 314.5L956.2 363.5L957.0 380.0L958.4 407.5L960.5 447.0L962.6 403.0L964.0 380.0L964.6 372.0L966.7 350.5L968.0 340.0L968.8 334.0L970.8 319.5L972.9 310.0L973.0 310.0L975.0 306.5L977.0 304.0L979.1 302.5L981.2 300.0L982.0 299.0L983.2 297.0L985.3 293.0L987.4 289.0L989.5 285.5L990.0 285.0L991.5 283.0L993.6 281.0L995.7 278.5L997.7 276.0L999.8 274.0L1001.9 272.0L1003.9 270.5L1006.0 270.0" stroke="#008080"/>
<path d="M56.0 139.0L58.0 139.0L60.0 138.5L62.0 138.5L64.0 137.0L66.0 137.0L68.0 138.0L70.0 138.0L72.0 137.0L74.0 136.5L76.0 136.0L76.0 136.0L78.0 135.5L80.0 135.5L82.0 135.5L84.0 135.5L86.0 135.5L88.0 135.5L90.0 135.5L92.0 136.5L94.0 136.0L96.0 135.5L98.0 135.0L100.0 135.0L102.0 135.0L102.6 134.5L104.0 134.5L106.0 134.5L108.0 135.0L110.0 135.0L112.0 133.0L114.0 133.0L116.0 133.0L118.0 132.5L120.0 131.5L122.0 131.5L124.0 132.0L126.0 132.0L128.0 131.5L129.0 131.5L130.0 131.5L132.0 131.0L134.0 131.0L136.0 130.5L138.0 130.5L140.0 130.0L142.0 130.0L144.0 130.0L146.0 130.0L148.0 130.0L150.0 130.0L152.0 129.5L154.0 129.0L156.0 130.5L158.0 130.5L160.0 130.5L160.5 130.0L162.0 130.0L164.0 129.5L166.0 129.0L168.0 128.5L170.0 128.0L172.0 126.0L174.0 125.5L176.0 124.0L178.0 123.5L180.0 124.5L181.6 124.0L182.0 124.0L184.0 122.5L186.0 122.0L188.0 122.5L190.0 122.0L192.0 122.0L194.0 122.0L196.0 122.0L198.0 122.0L200.0 120.0L202.0 120.0L204.0 119.5L206.0 119.0L208.0 119.0L208.0 119.0L210.0 118.5L212.0 119.0L214.0 118.5L216.0 118.0L218.0 117.5L220.0 116.5L222.0 116.0L224.0 116.0L226.0 115.5L228.0 114.5L230.0 113.5L232.0 113.5L234.0 113.0L234.0 113.0L236.0 113.0L238.0 112.5L240.0 111.0L242.0 110.5L244.0 110.0L246.0 109.5L248.0 110.0L250.0 109.5L252.0 107.5L253.0 107.0L254.0 107.0L256.0 107.0L258.0 106.0L260.1 105.0L262.1 104.0L264.1 103.0L266.1 102.0L268.1 100.0L270.1 99.0L271.6 98.0L272.1 98.0L274.1 97.0L276.1 97.0L278.1 96.0L280.1 94.0L282.1 93.0L284.1 93.5L286.1 92.5L288.1 90.5L290.1 89.5L292.1 87.5L292.6 87.0L294.1 86.0L296.1 85.0L298.1 83.5L300.1 81.5L302.1 79.5L304.1 78.5L306.1 76.5L308.1 75.0L308.4 75.0L310.1 73.5L312.1 71.0L314.1 69.0L316.1 68.0L318.1 66.0L320.1 64.0L322.1 62.5L324.0 60.0L324.1 60.0L326.1 58.0L328.1 56.5L330.1 54.5L332.1 52.0L334.1 50.5L334.7 50.0L336.1 50.0L338.1 49.0L340.1 47.5L342.1 47.0L344.0 46.5L344.1 46.5L346.1 47.0L348.1 48.0L350.1 49.0L350.5 49.5L352.1 51.0L354.1 53.5L355.8 56.0L356.1 56.5L358.1 61.0L360.1 66.5L362.1 72.5L363.7 77.0L364.1 78.0L366.1 83.5L368.1 88.5L370.1 93.5L371.6 97.0L372.1 98.0L374.1 102.0L376.1 106.0L378.1 109.5L380.1 113.5L382.0 117.0L382.1 117.0L384.1 121.0L386.1 125.0L388.1 129.0L390.1 133.0L392.1 137.0L394.1 141.0L395.0 143.0L396.1 145.5L398.1 149.5L400.1 154.0L402.1 158.5L404.1 163.0L406.1 167.0L408.1 171.5L408.4 172.0L410.1 175.5L412.1 179.0L414.1 183.0L416.1 186.5L418.1 190.5L420.1 194.5L421.6 198.0L422.1 199.0L424.1 204.0L426.1 209.5L428.1 215.0L430.1 220.5L432.1 226.5L434.1 232.5L435.0 235.0L436.1 238.0L438.1 243.5L440.1 249.0L442.1 255.0L444.1 261.5L445.0 265.0L446.1 269.5L448.1 278.5L450.1 288.5L452.1 301.0L452.7 305.0L454.1 316.0L456.1 336.5L456.4 340.0L458.1 368.0L458.8 380.0L460.1 399.5L462.0 430.0L462.1 432.0L464.1 477.0L466.1 433.0L466.3 430.0L468.1 408.5L470.1 391.0L471.4 380.0L472.1 373.5L474.1 355.0L476.1 338.0L477.0 332.0L478.1 324.5L480.1 312.5L482.1 302.5L482.8 300.0L484.1 295.0L486.2 288.5L488.2 283.0L490.2 278.5L492.2 274.0L492.8 272.5L494.2 270.0L496.2 266.5L498.2 263.5L500.2 260.0L502.2 257.5L504.2 255.0L505.0 254.0L506.2 252.5L508.2 250.5L510.2 248.5L512.2 246.5L514.2 244.5L516.2 243.0L518.2 241.0L520.0 238.5L520.2 238.5L522.2 236.0L524.2 234.5L526.3 232.0L528.3 230.0L530.0 229.0L530.3 229.0L532.3 228.5L534.3 228.0L536.3 228.0L538.3 228.0L540.3 227.0L542.3 227.0L544.3 226.0L546.3 225.5L548.3 225.0L550.0 224.5L550.3 224.0L552.3 224.0L554.3 222.5L556.3 222.5L558.3 221.0L560.3 219.0L562.3 217.5L564.3 216.5L566.4 215.0L568.4 213.5L570.4 212.5L570.5 212.5L572.4 212.5L574.4 211.5L576.4 209.5L578.4 209.0L580.4 208.5L582.4 208.0L584.4 208.5L586.4 208.0L588.4 207.0L590.4 206.5L592.4 206.5L594.4 206.0L595.5 205.5L596.4 205.5L598.4 205.0L600.4 204.0L602.4 203.0L604.4 202.0L606.5 201.0L608.5 201.5L610.5 201.0L612.5 199.5L614.5 199.0L616.5 198.5L618.5 198.0L620.5 198.5L620.6 198.0L622.5 198.0L624.5 196.0L626.5 195.5L628.5 195.5L630.5 195.0L632.5 195.5L634.5 195.0L636.5 194.5L638.5 194.0L640.0 194.0L640.5 193.5L642.5 193.5L644.5 192.0L646.6 191.5L648.6 191.5L650.6 191.5L652.6 192.0L654.6 191.5L656.6 190.0L658.6 190.0L660.6 190.0L662.6 189.5L664.6 188.5L666.6 188.0L668.6 188.5L670.6 188.0L671.5 188.0L672.6 188.0L674.6 187.5L676.6 186.0L678.6 185.5L680.6 186.0L682.6 185.5L684.6 183.5L686.7 183.0L688.7 182.5L690.0 182.5L690.7 182.5L692.7 182.0L694.7 182.0L696.7 183.0L698.7 182.5L700.7 181.5L702.7 181.5L704.7 182.0L706.7 182.0L708.7 182.5L710.7 182.5L712.7 181.5L714.7 181.5L716.7 180.5L718.7 180.5L720.7 181.5L722.7 181.5L724.7 181.5L726.7 181.0L727.0 181.0L728.8 180.0L730.8 180.0L732.8 181.0L734.8 180.5L736.8 179.5L738.8 179.5L740.8 179.0L742.8 178.5L744.8 178.5L746.8 178.0L748.8 178.5L750.8 178.5L752.8 178.5L753.0 178.5L754.8 178.5L756.8 178.5L758.8 178.5L760.8 178.0L762.8 178.0L764.8 178.0L766.8 178.0L768.9 177.0L770.9 177.0L772.9 178.5L774.9 178.5L776.9 177.5L778.9 177.5L780.9 178.0L782.9 177.5L784.9 178.0L786.9 178.0L788.9 178.0L790.0 177.5L790.9 177.5L792.9 176.5L794.9 176.0L796.9 175.5L798.9 175.5L800.9 175.5L802.9 175.5L804.9 175.0L806.9 174.5L809.0 174.0L811.0 173.5L813.0 173.5L815.0 173.0L817.0 174.0L819.0 174.0L820.0 174.0L821.0 173.5L823.0 173.5L825.0 171.5L827.0 171.5L829.0 171.0L831.0 170.5L833.0 170.0L835.0 170.0L837.0 171.0L839.0 170.5L841.0 170.0L843.0 169.5L845.0 169.5L847.0 169.0L849.1 168.0L851.1 167.5L853.1 167.5L855.1 167.0L857.1 166.5L859.1 166.0L860.0 166.5L861.1 166.5L863.1 166.0L865.1 165.5L867.1 165.5L869.1 165.0L871.1 164.5L873.1 163.0L875.1 162.5L877.1 161.0L879.1 160.5L879.5 160.5L881.1 159.5L883.1 158.0L885.1 157.0L887.1 155.0L889.2 152.5L891.2 150.5L892.6 149.5L893.2 148.5L895.2 146.5L897.2 143.0L899.2 140.0L900.5 137.0L901.2 135.0L903.2 127.5L905.2 117.0L905.8 113.5L907.2 104.0L909.2 86.0L911.5 117.0L911.6 119.0L913.5 171.5L913.8 177.0L916.0 205.0L916.1 206.0L918.4 231.5L919.0 240.0L920.7 278.5L921.6 245.0L922.6 223.0L922.7 222.5L924.8 217.5L926.0 216.0L926.8 215.0L928.8 214.0L930.9 213.0L932.9 211.0L934.0 211.0L934.9 210.5L936.9 211.0L939.0 211.0L941.0 209.5L943.0 209.0L943.6 209.0L945.1 210.0L947.1 209.5L949.1 208.5L951.2 207.5L953.2 206.0L955.2 204.5L957.3 204.0L957.8 203.5L959.3 202.0L961.3 198.5L963.4 195.0L965.0 192.0L965.4 191.5L967.4 186.5L969.4 181.0L971.5 177.5L971.6 177.5L973.5 176.5L975.5 176.0L977.6 175.5L979.6 175.0L981.6 175.0L983.7 175.0L985.7 175.0L987.0 175.0L987.7 175.0L989.8 175.0L991.8 175.0L993.8 174.5L995.8 174.5L997.9 175.0L999.9 175.0L1001.9 175.0L1004.0 175.0L1006.0 175.0" stroke="#800080"/>
<path d="M56.0 174.0L58.0 173.5L60.0 174.5L62.0 174.0L64.0 173.0L66.0 173.0L68.0 172.5L70.0 172.5L72.0 173.5L74.0 173.0L76.0 173.0L78.0 173.0L80.0 173.5L82.0 173.0L84.0 172.0L86.0 171.5L88.0 171.5L90.0 171.0L92.0 172.5L94.0 172.5L96.0 171.5L98.0 171.5L100.0 170.5L100.0 170.5L102.0 170.5L104.0 171.5L106.0 171.5L108.0 170.5L110.0 170.0L112.0 170.5L114.0 170.5L116.0 169.0L118.0 169.0L120.0 168.5L122.0 168.5L124.1 169.5L126.1 169.5L128.1 168.5L130.1 168.0L132.1 167.5L134.1 167.5L136.1 167.5L138.1 167.5L140.0 167.5L140.1 167.5L142.1 167.0L144.1 166.5L146.1 166.5L148.1 165.5L150.1 165.0L152.1 165.0L154.1 164.5L156.1 164.0L158.1 164.0L160.1 163.0L162.1 163.0L164.1 163.0L166.1 162.5L168.1 162.5L170.1 162.5L172.1 161.5L174.1 161.0L176.1 161.0L178.1 160.5L180.0 161.0L180.1 161.0L182.1 160.5L184.1 160.0L186.1 159.5L188.1 158.0L190.1 157.5L192.1 159.0L194.1 158.5L196.1 157.5L198.1 157.0L200.1 156.0L202.1 155.5L204.1 156.0L206.1 155.5L208.1 154.0L210.1 153.5L212.1 153.5L214.1 153.0L216.0 152.0L216.1 152.0L218.1 151.5L220.1 152.0L222.1 151.5L224.1 150.5L226.1 150.0L228.1 149.0L230.0 148.5L230.1 148.5L232.1 147.5L234.1 147.0L236.1 146.5L238.1 146.0L240.1 146.0L242.1 145.5L244.1 144.5L246.1 144.0L248.1 144.0L250.1 143.0L252.1 143.0L254.2 142.5L256.2 141.0L258.2 140.0L260.0 139.0L260.2 139.0L262.2 138.0L264.2 138.5L266.2 137.5L268.2 137.0L270.2 136.5L272.2 135.0L274.2 134.0L276.2 133.5L278.2 132.5L280.2 131.5L282.2 131.0L284.2 130.5L286.2 130.0L288.2 128.5L290.2 127.5L292.0 126.0L292.2 126.0L294.2 125.0L296.2 124.5L298.2 123.0L300.2 121.5L302.2 120.5L304.2 119.5L306.2 118.0L308.2 117.5L310.2 116.0L312.2 115.0L314.2 113.5L316.2 111.5L318.2 110.0L320.0 109.5L320.2 109.0L322.2 108.0L324.2 106.0L326.2 104.5L328.2 103.0L330.2 101.5L332.2 100.0L334.2 98.5L336.2 97.0L338.2 95.5L338.4 95.5L340.2 93.0L342.2 91.0L344.2 89.5L346.2 87.5L348.2 86.0L350.2 83.5L352.0 81.0L352.2 80.5L354.2 78.0L356.2 75.0L358.2 72.0L360.2 68.5L362.2 65.5L363.0 64.0L364.2 62.0L366.2 58.0L368.2 54.0L369.5 52.0L370.2 51.0L372.2 48.0L373.0 48.0L374.2 48.0L376.2 47.0L378.2 47.0L380.2 48.0L382.2 48.0L384.2 47.5L386.2 47.5L387.0 47.5L388.3 48.5L390.3 51.5L392.3 55.0L392.9 56.0L394.3 58.5L396.3 62.0L398.3 66.5L400.3 71.0L400.8 72.0L402.3 75.0L404.3 80.0L406.3 84.5L407.7 88.0L408.3 89.0L410.3 93.5L412.3 98.0L414.3 102.5L415.0 104.0L416.3 106.5L418.3 110.5L420.3 114.0L421.9 117.0L422.3 117.5L424.3 121.0L426.3 124.0L428.3 127.0L430.2 130.0L430.3 130.0L432.3 133.5L434.3 137.5L436.3 141.0L436.4 141.0L438.3 143.5L440.3 146.0L442.3 148.5L444.3 150.5L446.3 152.5L447.2 154.0L448.3 155.5L450.3 158.5L452.3 161.5L454.3 165.0L455.5 166.5L456.3 168.0L458.3 170.5L460.3 173.5L462.3 176.0L464.3 179.0L465.2 180.0L466.3 181.5L468.3 184.5L470.3 187.0L472.3 189.5L472.9 190.0L474.3 192.0L476.3 194.5L478.3 197.0L480.3 199.5L482.3 202.5L484.3 205.0L484.5 205.5L486.3 208.0L488.3 211.0L490.3 214.0L492.3 217.5L494.3 220.5L494.8 221.0L496.3 223.5L498.3 226.5L500.3 229.5L502.3 232.5L504.3 235.5L505.0 236.5L506.3 238.5L508.3 241.0L510.3 244.0L512.3 247.0L514.3 250.5L515.3 252.0L516.3 254.0L518.3 257.5L520.4 261.0L522.4 265.0L523.8 267.5L524.4 268.5L526.4 272.0L528.4 275.0L530.4 278.5L532.1 281.0L532.4 281.5L534.4 284.5L536.4 286.0L538.4 289.0L539.0 290.0L540.4 292.0L542.4 295.5L544.4 299.5L546.4 304.0L547.1 305.5L548.4 309.0L550.4 315.0L552.2 321.0L552.4 321.5L554.4 328.0L556.4 334.5L557.0 336.5L558.4 340.5L560.4 346.0L562.4 351.5L562.5 352.0L564.4 359.0L566.4 366.5L566.6 367.5L568.4 373.5L570.4 381.0L570.8 383.0L572.4 392.0L573.9 403.0L574.4 406.5L576.4 425.5L576.5 426.5L578.4 445.5L578.9 449.5L580.4 460.5L580.8 465.0L581.6 480.0L582.4 502.0L584.4 567.5L586.4 512.5L588.0 480.0L588.4 473.5L590.4 446.0L592.0 430.0L592.4 426.5L594.4 411.0L596.4 398.0L598.0 390.0L598.5 388.0L600.5 379.0L602.5 371.0L604.5 364.5L606.0 360.0L606.5 358.5L608.5 353.5L610.5 349.0L612.5 344.5L614.5 341.0L616.5 337.5L618.0 335.0L618.5 334.0L620.5 331.5L622.5 328.5L624.5 326.0L626.6 323.5L628.6 321.0L630.6 319.0L632.0 317.5L632.6 317.0L634.6 315.0L636.6 314.0L638.6 312.0L640.6 310.0L642.6 308.0L644.6 307.5L646.6 306.0L648.6 304.0L650.0 303.0L650.6 302.5L652.7 301.0L654.7 299.5L656.7 298.5L658.7 297.5L660.7 296.5L662.7 295.5L664.7 294.0L666.7 293.0L668.7 292.0L670.0 291.0L670.7 291.0L672.7 290.5L674.7 289.0L676.7 287.5L678.7 286.5L680.8 285.0L682.8 284.0L684.8 284.0L686.8 283.0L688.8 282.5L690.8 281.5L692.8 280.5L694.8 280.0L696.8 279.0L698.8 278.0L700.0 278.0L700.8 277.5L702.8 276.5L704.8 275.0L706.8 274.5L708.9 273.0L710.9 272.5L712.9 273.0L714.9 272.0L716.9 271.0L718.9 270.5L720.9 270.0L722.9 269.5L724.9 268.5L726.9 268.0L728.9 266.5L730.0 266.5L730.9 266.0L732.9 266.5L735.0 266.0L737.0 264.0L739.0 263.5L741.0 263.5L743.0 263.0L745.0 262.5L747.0 262.0L749.0 262.0L751.0 261.5L753.0 260.0L755.0 259.5L757.0 259.5L759.0 259.0L760.0 259.0L761.0 258.5L763.1 258.0L765.1 257.0L767.1 256.5L769.1 257.0L771.1 256.5L773.1 256.0L775.1 255.5L777.1 255.0L779.1 254.5L781.1 253.0L783.1 252.5L785.1 251.5L787.1 251.0L789.2 252.0L791.2 251.5L793.2 250.5L795.2 250.0L797.2 250.0L799.2 249.5L800.0 249.5L801.2 249.0L803.2 248.5L805.2 246.5L807.2 246.0L809.2 246.0L811.2 245.5L813.2 245.0L815.2 244.5L817.3 243.5L819.3 243.0L821.3 243.0L823.3 242.5L825.3 242.0L827.3 241.5L829.3 241.0L831.3 240.5L833.3 240.5L835.3 240.0L837.3 239.5L839.3 239.0L840.5 238.5L841.3 238.5L843.3 238.0L845.4 238.5L847.4 238.0L849.4 237.5L851.4 237.5L853.4 237.0L855.4 236.5L857.4 235.5L859.4 235.0L860.7 236.0L861.4 235.5L863.4 235.0L865.4 233.5L867.4 232.5L869.4 232.5L871.5 232.0L873.5 231.0L875.5 230.0L877.5 228.5L879.5 227.0L881.0 226.0L881.5 225.5L883.5 224.0L885.5 222.0L887.5 219.5L889.5 217.0L891.5 214.0L893.0 212.0L893.5 211.5L895.5 209.0L897.5 206.0L899.6 203.0L901.6 199.5L903.0 196.0L903.6 194.0L905.6 184.5L907.6 172.5L908.0 170.0L909.6 159.5L911.6 144.0L913.8 195.5L914.3 210.0L915.9 261.5L916.3 270.0L918.1 300.0L920.2 328.0L922.4 339.0L924.4 332.0L926.5 326.0L927.0 325.0L928.5 322.5L930.6 319.5L932.6 316.5L933.5 315.0L934.6 312.0L936.7 304.5L938.7 296.0L940.8 289.0L941.6 287.0L942.8 285.0L944.8 281.5L946.9 279.0L948.9 276.0L950.9 273.5L953.0 271.5L953.8 270.5L955.0 269.5L957.1 268.0L959.1 266.5L961.1 265.0L963.2 263.5L965.2 262.0L967.3 260.5L969.3 259.0L970.0 258.5L971.3 258.0L973.4 257.0L975.4 256.0L977.5 255.5L979.5 255.0L981.5 254.0L983.6 253.5L985.6 253.5L986.0 253.0L987.6 252.5L989.7 252.5L991.7 252.0L993.8 250.0L995.8 249.5L997.8 249.0L999.9 248.5L1001.9 248.5L1004.0 248.0L1006.0 248.0" stroke="#800000"/>
<path d="M56.0 154.0L58.0 153.5L60.0 152.5L62.0 152.0L64.0 152.0L66.0 151.5L68.0 150.5L70.0 150.0L72.0 150.5L74.0 150.0L76.0 149.5L76.3 149.5L78.0 149.0L80.0 148.0L82.0 148.0L84.0 147.5L86.0 147.0L88.0 147.5L90.0 147.0L92.0 147.5L94.0 147.0L96.0 146.0L98.0 146.0L100.0 146.5L102.0 146.0L102.6 146.0L104.0 146.0L106.0 145.5L108.0 144.0L110.0 143.5L112.0 143.5L114.0 143.0L116.0 143.5L118.0 143.5L120.0 142.5L122.0 142.0L124.0 142.0L126.0 141.5L128.0 140.0L129.0 140.0L130.0 139.5L132.0 139.0L134.0 138.5L136.0 140.0L138.0 139.5L140.0 137.5L142.0 137.5L144.0 138.0L146.0 137.5L148.0 138.0L150.0 137.5L152.0 136.5L154.0 136.0L155.3 136.0L156.0 135.0L158.0 134.5L160.0 133.0L162.0 132.0L164.0 131.0L166.0 130.0L168.0 130.5L168.4 130.5L170.0 130.0L172.0 127.5L174.0 127.0L176.0 127.5L178.0 127.0L180.0 126.0L181.6 125.5L182.0 125.5L184.0 125.0L186.0 124.5L188.0 124.0L190.0 123.0L192.0 122.5L194.0 122.0L196.0 121.5L198.0 120.5L200.0 119.5L202.0 118.5L204.0 119.0L206.0 118.0L208.0 116.5L210.0 115.5L212.0 115.0L214.0 114.0L216.0 112.5L218.0 111.5L220.0 110.0L221.0 109.5L222.0 108.5L224.0 108.0L226.0 107.0L228.0 104.0L230.0 103.0L232.0 103.0L234.0 102.0L236.0 99.5L238.0 98.5L240.0 98.5L242.0 97.5L244.0 97.0L246.0 96.0L248.0 94.5L250.0 93.0L252.0 90.5L254.0 88.5L256.0 88.0L258.0 86.0L260.0 83.5L262.0 81.5L264.0 79.5L266.0 77.5L268.0 75.5L270.0 73.5L272.0 72.0L274.0 70.0L276.0 67.5L278.0 65.5L279.5 64.0L280.0 64.0L282.0 62.0L284.0 60.0L286.0 58.5L288.0 56.5L290.0 55.0L292.0 52.0L294.0 50.0L296.0 49.5L296.6 49.5L298.0 49.0L300.0 49.0L302.0 48.5L303.0 48.5L304.0 47.0L306.0 47.5L308.0 48.0L310.0 48.5L311.0 49.0L312.0 50.5L314.0 52.5L316.0 56.0L318.0 59.0L320.0 61.5L322.0 64.0L324.0 66.5L326.0 69.0L328.0 72.0L330.0 74.5L331.0 76.0L332.0 77.5L334.0 80.5L336.0 83.0L338.0 86.0L340.0 89.0L342.0 92.0L344.0 95.0L346.0 98.0L348.0 101.0L350.0 104.0L352.0 107.0L354.0 110.0L354.8 111.0L356.0 113.0L358.0 115.5L360.0 118.0L362.0 120.5L364.0 122.5L365.0 124.0L366.0 125.0L368.0 127.5L370.0 130.0L372.0 132.5L374.0 135.0L376.0 137.5L378.0 139.5L380.0 142.0L382.0 144.5L384.0 146.5L386.0 148.5L388.0 151.0L390.0 153.5L392.0 156.0L394.0 158.0L396.0 160.0L398.0 162.5L400.0 165.0L402.0 167.0L404.0 168.5L406.0 170.5L408.0 172.5L410.0 174.5L412.0 177.5L414.0 179.0L416.0 180.5L418.0 182.5L420.0 183.0L422.0 184.5L424.0 186.5L426.0 187.5L428.0 189.5L428.5 190.0L430.0 191.0L432.0 192.5L434.0 195.0L436.0 197.5L438.0 200.0L440.0 202.0L442.0 203.5L444.0 205.5L446.0 207.0L448.0 210.0L450.0 214.0L452.0 218.5L454.0 222.5L456.0 225.5L457.0 227.0L458.0 227.5L460.0 227.0L462.0 227.5L464.0 228.0L464.8 228.5L466.0 229.5L468.0 232.5L470.0 236.0L472.0 239.5L474.0 243.5L475.6 246.0L476.0 246.0L478.0 248.5L480.0 250.5L482.0 253.0L484.0 255.0L486.0 257.0L488.0 259.5L490.0 262.0L491.0 263.0L492.0 264.0L494.0 266.0L496.0 268.5L498.0 271.5L500.0 274.5L502.0 278.0L504.0 283.0L506.0 288.5L506.6 290.0L508.0 293.5L510.0 298.5L512.0 303.0L514.0 308.0L516.0 312.5L518.0 317.5L520.0 322.0L522.0 326.5L524.0 331.5L526.0 336.0L528.0 340.5L530.0 345.0L532.0 349.0L534.0 353.0L536.0 357.0L538.0 361.0L540.0 365.0L542.0 369.0L544.0 372.5L546.0 377.0L547.0 380.0L548.0 383.5L550.0 394.0L552.0 407.0L554.0 422.0L555.0 430.0L556.0 438.0L558.0 457.0L560.0 480.0L562.0 509.0L564.0 545.0L566.0 509.0L568.0 480.0L570.0 458.5L572.0 440.0L574.0 425.5L575.0 420.0L576.0 415.0L578.0 406.0L580.0 398.5L582.0 391.5L584.0 385.5L586.0 380.0L588.0 374.5L590.0 370.0L592.0 365.5L594.0 361.5L596.0 358.0L598.0 354.5L600.0 351.5L602.0 348.0L604.0 345.0L606.0 342.0L608.0 338.5L610.0 335.5L612.0 332.5L614.0 330.0L616.0 327.0L618.0 324.0L620.0 322.0L622.0 319.5L624.0 317.0L625.0 316.0L626.0 315.0L628.0 312.5L630.0 311.0L632.0 309.0L634.0 307.5L636.0 307.0L638.0 306.0L640.0 303.5L642.0 302.0L644.0 301.0L646.0 300.0L648.0 298.5L650.0 297.0L652.0 296.0L654.0 294.5L655.0 294.0L656.0 293.5L658.0 292.0L660.0 290.5L662.0 289.0L664.0 287.5L666.0 286.0L668.0 283.0L670.0 281.5L672.0 280.5L674.0 279.5L676.0 278.0L678.0 276.5L680.0 275.0L681.0 274.0L682.0 273.5L684.0 272.5L686.0 271.5L688.0 271.0L690.0 270.0L692.0 270.0L694.0 269.0L696.0 268.0L698.0 267.0L700.0 267.0L701.0 266.5L702.0 266.0L704.0 265.5L706.0 265.0L708.0 264.0L710.0 263.5L712.0 264.0L714.0 263.5L716.0 262.0L718.0 261.5L720.0 260.5L721.4 260.0L722.0 260.0L724.0 259.0L726.0 258.5L728.0 257.0L730.0 256.5L732.0 255.5L734.0 254.5L736.0 254.5L738.0 253.5L740.0 253.0L742.0 252.0L744.0 250.0L746.0 248.5L748.0 247.5L750.0 246.5L752.0 247.0L754.0 246.0L756.0 244.0L757.8 243.5L758.0 243.0L760.0 243.0L762.0 242.0L764.0 240.0L766.0 239.0L768.0 238.5L770.0 237.5L772.0 236.5L774.0 235.5L776.0 236.5L778.0 236.0L780.0 234.5L782.0 234.0L784.0 234.0L786.0 233.5L788.0 232.5L790.0 232.0L792.0 232.0L794.0 231.5L796.0 231.0L798.0 230.5L800.0 229.5L802.0 229.0L804.0 229.5L806.0 228.5L808.0 228.5L810.0 228.0L812.0 226.0L814.0 225.5L816.0 225.0L818.0 224.0L820.0 224.0L822.0 223.0L824.0 221.0L826.0 220.0L828.0 219.5L830.0 218.5L832.0 218.5L834.0 217.5L836.0 217.0L838.0 216.5L840.0 216.0L840.5 215.5L842.0 215.0L844.0 213.0L846.0 212.5L848.0 212.5L850.0 211.5L852.0 210.0L854.0 209.0L856.0 209.0L856.6 208.5L858.0 208.0L860.0 205.5L862.0 204.5L864.0 204.5L866.0 203.5L868.0 201.5L870.0 200.5L872.0 201.0L874.0 200.0L876.0 198.0L878.0 197.0L880.0 196.5L882.0 195.0L884.0 192.0L886.0 189.5L888.0 186.5L890.0 184.0L892.0 181.5L892.4 181.0L894.0 179.0L896.0 176.5L898.0 174.5L900.0 172.5L902.0 170.0L904.0 167.5L904.8 166.5L906.0 164.5L908.0 161.5L910.0 158.5L912.0 155.0L914.0 150.5L914.7 149.0L916.0 145.5L918.0 138.5L920.0 130.0L920.8 126.5L922.0 121.0L924.0 110.0L925.8 99.5L926.0 98.5L928.0 84.0L929.5 75.0L930.0 72.5L932.0 64.0L934.0 68.0L936.0 76.0L936.1 76.5L938.1 93.0L940.0 111.5L940.2 113.0L942.2 130.0L944.2 146.5L946.3 160.0L946.5 161.0L948.3 168.5L948.6 170.0L950.3 181.5L952.3 195.0L952.4 195.5L954.4 205.5L956.0 212.0L956.5 213.5L958.5 219.5L961.0 211.0L963.0 222.5L964.7 232.0L965.0 233.5L967.0 244.0L968.4 251.5L969.0 255.0L971.0 267.5L973.0 280.0L973.3 281.5L975.0 291.0L977.0 301.5L978.3 308.5L979.0 312.0L981.0 322.0L982.0 328.5L983.0 337.5L985.0 363.0L987.0 394.0L989.0 424.5L991.0 453.5L993.0 482.5L995.0 512.5L997.2 486.5L999.4 449.0L1001.5 407.0L1001.6 405.0L1003.8 345.0L1004.0 340.0L1006.0 300.0" stroke="#808000"/>
<path d="M56.0 129.5L58.0 130.0L60.0 130.5L62.0 130.5L64.0 130.5L66.0 130.5L68.0 130.0L70.0 130.0L72.1 130.0L74.1 130.0L76.1 130.0L78.1 130.0L80.1 128.5L82.1 128.5L84.1 129.5L86.1 129.5L88.1 129.5L90.1 129.5L92.0 129.0L92.1 129.0L94.1 129.0L96.1 128.0L98.1 127.5L100.2 128.0L102.2 127.5L104.2 126.0L106.2 125.5L108.2 124.5L110.2 124.0L112.2 123.5L114.2 123.0L116.0 122.5L116.2 122.5L118.2 122.0L120.2 122.5L122.2 122.0L124.2 123.0L126.2 123.0L128.2 122.0L130.3 122.0L132.3 122.5L134.3 122.0L136.3 122.0L138.3 122.0L140.3 121.0L142.3 121.0L144.3 121.0L146.3 121.0L148.3 121.0L150.3 121.0L152.3 121.0L154.3 120.5L155.0 120.5L156.3 119.5L158.3 119.0L160.4 119.5L162.4 119.0L164.4 118.0L166.4 118.0L168.4 117.0L170.4 116.5L172.4 117.0L174.4 116.5L176.4 115.5L178.4 115.0L180.4 113.5L181.6 113.5L182.4 113.0L184.4 112.5L186.4 112.0L188.5 112.0L190.5 111.5L192.5 112.0L194.5 111.5L196.5 111.0L198.5 110.5L200.5 109.5L202.5 109.0L204.5 109.0L206.5 108.5L208.0 108.0L208.5 108.0L210.5 107.0L212.5 105.5L214.5 104.5L216.5 104.0L218.6 103.0L220.6 102.0L221.0 101.5L222.6 101.0L224.6 101.5L226.6 101.0L228.6 100.5L230.6 100.0L232.6 99.5L234.0 99.0L234.6 99.0L236.6 99.0L238.6 98.5L240.6 97.0L242.6 96.5L244.6 97.0L246.7 96.0L248.7 94.0L250.0 93.5L250.7 93.0L252.7 93.5L254.7 92.5L256.7 91.5L258.7 90.0L260.7 88.0L262.7 86.5L264.7 85.5L266.0 85.0L266.7 84.5L268.7 82.5L270.7 81.5L272.7 80.5L274.7 79.5L276.8 76.5L278.8 75.0L280.0 75.0L280.8 74.5L282.8 73.0L284.8 71.5L286.8 70.0L288.8 69.0L290.8 68.0L292.6 66.5L292.8 66.5L294.8 65.0L296.8 62.5L298.8 61.0L300.8 60.0L302.8 58.5L304.8 56.5L306.9 55.0L308.9 54.5L310.9 53.5L311.0 53.5L312.9 51.5L314.9 50.5L316.9 49.5L318.9 48.5L320.9 49.5L321.6 49.0L322.9 48.5L324.9 47.0L326.9 46.5L328.9 46.5L329.5 46.5L330.9 46.5L332.9 46.0L335.0 46.5L337.0 48.0L337.0 48.0L339.0 49.0L341.0 50.5L343.0 52.0L345.0 53.5L345.0 53.5L347.0 55.5L349.0 58.5L351.0 61.0L353.0 64.0L355.0 67.5L357.0 70.5L358.0 72.0L359.0 73.5L361.0 77.0L363.0 80.5L365.1 84.0L367.1 88.0L369.1 91.5L371.1 95.0L371.6 96.0L373.1 98.0L375.1 101.5L377.1 104.5L379.1 107.5L381.1 111.0L383.1 114.0L385.1 116.5L387.0 119.5L387.1 119.5L389.1 122.5L391.1 125.0L393.2 128.0L395.2 130.5L397.2 133.0L399.2 135.5L401.2 138.5L403.2 141.0L405.2 144.0L407.2 147.0L408.0 148.0L409.2 150.0L411.2 153.5L413.2 157.0L415.2 161.0L417.2 164.5L419.2 168.5L421.2 172.5L423.3 176.0L424.0 177.0L425.3 179.0L427.3 182.0L429.3 184.5L431.3 187.5L433.3 190.5L434.7 193.0L435.3 194.0L437.3 198.0L439.3 202.0L441.3 206.0L443.3 210.5L445.3 215.0L447.3 219.0L447.7 220.0L449.3 223.5L451.3 228.0L453.4 232.0L455.4 236.5L457.4 241.0L459.4 245.5L461.4 250.5L463.4 255.5L465.0 260.0L465.4 261.0L467.4 267.0L469.4 273.5L471.4 280.5L473.4 288.0L475.4 296.0L477.4 304.0L477.7 305.0L479.4 312.0L481.5 320.5L483.5 330.5L485.0 340.0L485.5 343.5L487.5 362.0L489.5 385.5L490.0 392.0L491.5 410.0L493.5 440.0L494.2 455.0L495.5 505.0L497.0 430.0L497.5 422.0L499.5 401.0L501.5 388.0L502.7 380.0L503.5 373.5L505.5 358.0L507.5 343.5L509.0 335.0L509.5 332.5L511.5 323.0L513.5 314.5L515.5 307.0L517.5 301.0L517.8 300.0L519.5 295.0L521.5 290.0L523.5 285.0L525.5 280.5L527.5 276.5L529.5 273.5L530.0 272.5L531.5 270.5L533.5 268.0L535.5 266.0L537.5 264.5L539.5 263.0L541.5 261.5L543.5 260.0L545.5 257.0L547.6 255.5L549.6 254.5L550.0 254.0L551.6 252.5L553.6 251.0L555.6 249.0L557.6 246.5L559.6 244.5L561.6 242.5L563.6 240.5L565.6 238.5L567.6 237.0L569.6 235.5L570.0 235.5L571.6 234.0L573.6 232.0L575.6 230.5L577.6 230.0L579.6 229.0L581.6 227.0L583.6 225.5L585.6 225.5L587.6 224.5L589.6 224.0L591.6 223.0L593.6 220.5L595.5 219.5L595.6 219.5L597.6 219.5L599.6 218.5L601.6 216.0L603.6 215.0L605.6 214.0L607.6 213.0L609.6 212.5L611.6 211.5L613.6 211.0L615.6 210.5L617.6 208.5L619.6 208.0L620.6 208.0L621.6 207.5L623.6 207.0L625.6 206.5L627.6 206.0L629.6 205.0L631.6 204.5L633.6 204.5L635.6 204.0L637.6 204.5L639.6 204.0L640.0 203.0L641.6 202.5L643.6 202.0L645.6 202.0L647.6 201.5L649.7 200.0L651.7 199.5L653.7 199.0L655.7 198.5L657.7 199.5L659.7 199.0L661.7 197.5L663.7 197.0L665.7 197.5L667.7 197.0L669.7 196.0L671.5 195.5L671.7 195.5L673.7 194.5L675.7 194.0L677.7 194.0L679.7 193.5L681.7 193.5L683.7 193.0L685.7 193.5L687.7 193.0L689.7 193.5L691.7 193.0L693.7 193.0L695.7 192.5L697.7 192.0L699.7 192.0L701.7 192.0L703.7 191.5L705.7 191.0L707.7 190.5L708.6 189.5L709.7 189.5L711.7 189.0L713.7 188.5L715.7 188.0L717.7 188.0L719.7 187.5L721.7 186.5L723.7 186.0L725.7 184.5L727.7 184.0L729.7 184.5L731.7 184.0L733.7 184.0L735.7 183.5L737.7 182.5L738.0 182.5L739.7 182.5L741.7 182.0L743.7 182.0L745.7 181.0L747.7 180.5L749.7 181.0L751.8 181.0L753.8 181.5L755.8 181.5L757.8 180.0L759.8 179.5L761.8 181.0L763.8 180.5L765.8 180.5L767.8 180.5L768.0 179.0L769.8 179.0L771.8 179.0L773.8 179.0L775.8 179.0L777.8 180.0L779.8 179.5L781.8 178.0L783.8 178.0L785.8 179.0L787.8 179.0L789.8 179.0L790.0 179.0L791.8 178.5L793.8 177.0L795.8 177.0L797.8 177.5L799.8 177.5L801.8 177.0L803.8 176.5L805.8 175.5L807.8 175.0L809.8 174.5L811.8 174.5L813.8 174.5L815.8 174.0L817.8 172.5L819.8 172.0L820.5 173.0L821.8 173.0L823.8 172.5L825.8 172.5L827.8 172.5L829.8 171.0L831.8 170.5L833.8 170.0L835.8 169.5L837.8 170.5L839.8 170.0L841.8 168.5L843.8 168.0L845.8 168.0L847.8 168.0L849.8 167.5L851.8 167.0L853.9 167.5L855.9 167.0L857.9 166.5L859.9 166.0L860.7 164.5L861.9 164.5L863.9 164.0L865.9 164.0L867.9 164.0L869.9 163.5L871.9 163.5L873.9 163.0L875.9 162.5L877.9 163.5L879.9 163.5L881.9 162.5L883.9 162.0L885.9 163.0L887.9 162.5L889.9 162.0L891.9 161.5L892.6 161.5L893.9 161.0L895.9 160.5L897.9 159.5L899.9 159.0L901.9 159.0L903.9 158.5L905.9 157.0L907.9 156.0L909.9 155.5L911.9 155.0L913.9 155.0L915.9 154.5L917.9 152.5L919.0 152.0L919.9 152.0L921.9 151.5L923.9 150.5L925.9 151.0L927.9 150.0L929.9 148.5L930.8 148.5L931.9 150.5L933.9 155.0L934.7 155.0L935.9 155.0L937.9 152.5L939.9 150.5L940.0 150.5L941.9 149.5L943.9 148.5L945.9 148.0L947.9 147.5L949.0 147.5L949.9 147.0L951.9 146.0L953.9 144.5L956.0 143.0L958.0 142.5L960.0 141.5L962.0 139.0L964.0 137.5L966.0 137.0L966.0 137.0L968.0 135.5L970.0 133.5L972.0 131.5L974.0 129.5L976.0 128.0L978.0 126.5L980.0 124.0L982.0 121.5L982.0 121.5L984.0 119.0L986.0 116.5L988.0 113.5L990.0 110.5L992.0 107.0L992.6 106.0L994.0 103.0L996.0 97.5L998.0 91.5L1000.0 85.5L1002.0 79.5L1003.0 77.0L1004.0 74.5L1006.0 70.0" stroke="#000080"/>
<path d="M56.0 155.5L58.0 155.0L60.0 154.0L62.0 153.5L64.0 153.5L66.0 153.0L68.0 152.0L70.0 151.5L72.0 152.0L74.1 151.5L76.1 151.0L76.3 151.0L78.1 150.5L80.1 149.5L82.1 149.5L84.1 149.0L86.1 148.5L88.1 149.0L90.1 148.5L92.1 149.0L94.1 148.5L96.1 147.5L98.1 147.5L100.1 148.0L102.1 147.5L102.6 147.5L104.1 147.5L106.2 147.0L108.2 145.5L110.2 145.0L112.2 145.0L114.2 144.5L116.2 145.0L118.2 144.5L120.2 144.0L122.2 143.5L124.2 143.5L126.2 143.0L128.2 141.5L129.0 141.5L130.2 141.0L132.2 140.5L134.2 140.0L136.2 141.5L138.2 141.0L140.3 139.0L142.3 138.5L144.3 139.5L146.3 139.0L148.3 139.0L150.3 139.0L152.3 138.0L154.3 137.5L155.3 137.0L156.3 136.5L158.3 135.5L160.3 134.0L162.3 133.0L164.3 132.5L166.3 131.5L168.3 132.0L168.4 132.0L170.3 131.0L172.4 129.0L174.4 128.5L176.4 128.5L178.4 128.0L180.4 127.5L181.6 127.0L182.4 126.5L184.4 126.5L186.4 126.0L188.4 125.0L190.4 124.5L192.4 123.5L194.4 123.0L196.4 122.5L198.4 122.0L200.4 120.5L202.4 120.0L204.5 120.0L206.5 119.5L208.0 118.0L208.5 117.5L210.5 116.5L212.5 116.0L214.5 115.0L216.5 113.5L218.5 112.0L220.5 110.5L221.0 110.5L222.5 109.5L224.5 108.5L226.5 107.5L228.5 105.0L230.5 103.5L232.5 103.5L234.0 102.5L234.5 102.5L236.5 100.0L238.6 99.0L240.6 99.0L242.6 98.0L244.6 97.5L246.6 96.0L248.6 94.5L250.0 93.5L250.6 93.0L252.6 90.5L254.6 88.5L256.6 87.5L258.6 85.5L260.6 83.0L262.6 81.0L264.6 78.5L266.0 77.5L266.6 76.5L268.6 75.0L270.7 73.0L272.7 71.0L274.7 69.0L276.7 66.5L278.7 64.5L279.5 63.5L280.7 63.0L282.7 61.0L284.7 59.0L286.7 57.0L288.7 55.5L290.0 54.0L290.7 53.5L292.7 50.5L294.7 48.5L296.6 48.5L296.7 48.5L298.7 48.0L300.7 47.5L302.7 47.5L303.0 47.5L304.8 46.5L306.8 46.5L308.8 47.0L310.8 47.0L311.0 47.5L312.8 49.5L314.8 52.0L316.8 55.5L318.8 59.0L319.0 59.0L320.8 61.0L322.8 63.5L324.8 66.0L326.8 68.0L328.8 70.5L330.8 73.0L332.0 75.0L332.8 76.0L334.8 78.5L336.9 81.5L338.9 84.0L340.9 87.0L342.9 90.0L344.9 92.5L345.0 93.0L346.9 95.5L348.9 99.0L350.9 102.0L352.9 105.0L354.9 108.0L355.8 109.0L356.9 110.5L358.9 113.5L360.9 116.0L362.9 118.5L364.9 120.5L366.0 122.0L366.9 123.0L368.9 125.5L371.0 128.0L373.0 130.0L375.0 132.5L377.0 135.0L377.0 135.0L379.0 137.0L381.0 139.5L383.0 141.5L385.0 144.0L387.0 146.0L387.0 146.0L389.0 148.0L391.0 150.5L393.0 153.0L395.0 155.5L397.0 157.5L399.0 159.5L401.0 162.0L403.0 164.0L403.1 164.0L405.1 165.5L407.1 167.5L409.1 169.5L411.1 171.5L413.1 174.0L415.1 176.0L417.1 177.5L419.0 179.0L419.1 179.0L421.1 180.0L423.1 181.0L425.1 183.0L427.1 184.0L429.1 186.0L429.5 186.5L431.1 188.0L433.1 189.5L435.2 192.5L437.2 195.0L439.2 197.5L440.0 198.5L441.2 199.5L443.2 201.0L445.2 203.0L447.2 204.5L449.2 206.0L451.2 208.0L452.4 209.0L453.2 209.5L455.2 212.5L457.2 215.5L459.2 218.5L461.2 221.5L463.0 224.0L463.2 224.5L465.2 226.5L467.2 228.5L469.3 230.5L471.3 232.5L473.3 234.5L475.3 236.5L475.6 236.5L477.3 238.5L479.3 241.0L481.3 243.5L483.3 246.0L485.3 248.5L486.4 250.0L487.3 251.0L489.3 253.5L491.3 256.0L493.3 257.5L495.3 260.5L497.0 262.5L497.3 263.5L499.3 266.5L501.4 270.5L503.4 274.5L505.0 278.0L505.4 279.0L507.4 283.5L509.4 289.0L509.7 290.0L511.4 295.5L513.4 302.5L514.0 305.0L515.4 311.0L517.4 321.5L519.4 303.0L521.0 290.0L521.4 286.5L523.5 271.0L525.0 262.0L525.5 260.0L527.5 253.0L529.5 261.5L531.0 268.0L531.6 271.0L533.6 282.0L535.3 290.0L535.7 291.5L537.7 299.0L539.8 305.5L541.8 311.5L543.8 317.5L545.9 323.5L547.9 330.0L548.0 330.0L550.0 336.5L552.0 343.5L554.1 351.0L556.1 358.0L558.0 365.0L558.2 365.5L560.2 372.5L561.9 380.0L562.2 382.0L564.3 398.5L566.3 419.0L567.0 426.0L568.4 438.0L570.4 457.5L572.0 480.0L572.5 490.5L574.5 570.0L576.5 512.0L578.0 480.0L578.5 471.5L580.5 443.5L581.8 430.0L582.5 423.5L584.5 408.0L586.0 400.0L586.5 398.0L588.5 391.0L590.5 385.5L592.5 380.0L592.6 380.0L594.5 374.0L596.5 368.0L598.5 361.5L600.5 356.0L602.5 351.0L603.0 350.0L604.6 347.0L606.6 343.0L608.6 339.0L610.6 335.5L612.6 332.5L614.6 329.5L616.6 326.5L618.6 324.0L620.0 322.0L620.6 321.5L622.6 319.0L624.6 317.0L626.6 314.5L628.6 312.0L630.6 310.0L632.6 308.0L634.6 306.5L636.6 305.5L638.6 303.5L640.0 301.5L640.6 301.0L642.6 299.0L644.6 297.5L646.6 295.5L648.6 293.5L650.6 291.5L652.6 290.0L654.6 288.5L656.6 287.0L658.6 285.5L660.6 284.0L662.7 283.0L664.7 281.5L666.7 280.5L666.8 280.5L668.7 278.5L670.7 277.5L672.7 277.5L674.7 277.0L676.7 276.5L678.7 276.0L680.7 274.5L681.0 274.0L682.7 273.5L684.7 272.5L686.7 272.0L688.7 271.0L690.7 270.0L692.7 270.0L694.7 269.0L696.7 268.0L698.7 267.0L700.7 266.5L701.0 266.5L702.7 266.0L704.7 265.0L706.7 264.5L708.7 264.0L710.7 263.5L712.7 263.5L714.7 263.0L716.7 261.5L718.7 261.0L720.8 260.0L721.4 260.0L722.8 259.5L724.8 259.0L726.8 258.0L728.8 257.0L730.8 256.0L732.8 255.0L734.8 254.0L736.8 254.0L738.8 253.0L740.8 253.0L742.8 251.5L744.8 249.5L746.8 248.5L748.8 247.0L750.8 246.0L752.8 246.5L754.8 245.5L756.8 244.0L757.8 243.5L758.8 243.0L760.8 243.0L762.8 242.0L764.8 240.0L766.8 239.0L768.8 238.5L770.8 237.5L772.8 236.5L774.0 235.5L774.8 235.5L776.8 235.5L778.9 234.0L780.9 232.0L782.9 231.0L784.9 229.5L786.9 228.5L788.0 227.0L788.9 226.5L790.9 225.0L792.9 224.0L794.9 222.5L796.9 221.5L798.9 220.0L800.0 219.0L800.9 218.0L802.9 216.5L804.9 215.5L806.9 214.0L808.9 213.0L810.9 211.5L812.4 209.0L812.9 209.0L814.9 207.0L816.9 205.0L818.9 203.0L820.9 201.5L822.9 199.0L824.8 196.5L824.9 196.5L826.9 194.0L828.9 191.5L830.9 189.0L832.9 186.0L834.9 183.0L837.0 179.5L837.0 179.5L839.0 176.0L841.0 172.0L843.0 167.5L845.0 163.0L847.0 157.5L847.0 157.5L849.0 151.5L851.0 145.0L853.0 138.0L853.2 137.0L855.0 129.5L857.0 120.5L859.0 112.0L859.4 110.5L861.0 105.5L863.0 100.0L865.0 95.5L867.0 103.0L869.1 112.0L870.8 120.5L871.1 122.0L873.1 134.0L875.2 147.5L877.2 161.5L878.8 173.0L879.2 175.5L881.2 191.0L883.3 206.5L884.9 217.0L885.3 219.5L887.3 230.0L889.4 239.5L891.4 248.5L893.4 257.5L895.0 265.0L895.5 267.5L897.5 277.0L899.5 287.5L901.6 298.5L901.8 300.0L903.6 311.5L905.6 326.0L907.6 341.5L909.7 357.5L910.0 360.0L911.7 374.0L913.7 391.0L915.8 408.5L917.8 427.0L919.8 410.0L921.9 394.5L923.9 380.5L924.0 380.0L926.0 367.5L928.0 355.5L930.0 346.0L930.1 345.5L932.1 337.5L934.2 331.0L936.2 325.0L938.3 319.0L940.3 313.5L942.4 307.0L944.4 300.5L944.5 300.0L946.5 292.5L948.5 284.0L950.6 275.0L952.6 266.0L954.7 256.5L955.0 255.0L956.7 246.5L958.8 235.0L960.8 224.5L962.9 215.5L963.0 215.0L964.9 209.0L967.0 203.0L969.0 199.0L971.3 219.0L973.0 240.0L973.5 247.5L975.8 288.0L976.5 300.0L978.1 324.0L980.3 356.5L982.6 385.5L984.7 368.0L986.9 352.5L988.0 345.0L989.0 339.0L991.1 327.5L992.6 321.0L993.2 318.5L995.4 311.5L997.5 306.0L999.6 300.0L999.7 300.0L1001.7 295.0L1003.9 289.5L1006.0 285.0" stroke="#00FF00"/>
<path d="M56.0 178.5L58.0 177.5L60.0 179.0L62.0 178.5L64.0 179.0L66.0 179.0L68.0 177.5L70.0 177.5L72.0 178.0L74.0 178.0L76.0 177.5L78.0 177.5L80.0 177.5L82.0 177.5L84.0 176.0L86.0 175.5L88.0 175.5L90.0 175.5L92.0 176.5L94.0 176.0L96.0 175.0L98.0 175.0L100.0 174.5L100.0 174.5L102.0 174.5L104.0 175.5L106.0 175.5L108.0 175.0L110.0 174.5L112.0 175.5L114.1 175.0L116.1 174.0L118.1 174.0L120.1 174.0L122.1 174.0L124.1 174.0L126.1 174.0L128.1 173.5L130.1 173.5L132.1 172.5L134.1 172.0L136.1 173.0L138.1 173.0L140.0 171.5L140.1 171.5L142.1 171.5L144.1 172.5L146.1 172.0L148.1 171.5L150.1 171.0L152.1 170.5L154.1 170.5L156.1 170.5L158.1 170.0L160.1 171.0L162.1 171.0L164.1 169.5L166.1 169.0L168.1 168.5L170.1 168.5L172.1 169.5L174.1 169.0L176.1 168.0L178.1 168.0L180.0 167.5L180.1 167.0L182.1 167.0L184.1 168.5L186.1 168.0L188.1 167.0L190.1 166.5L192.1 167.0L194.1 167.0L196.1 166.0L198.1 166.0L200.1 165.5L202.1 165.5L204.1 166.0L206.1 165.5L208.1 166.0L210.1 166.0L212.1 164.5L214.1 164.5L216.0 164.0L216.1 164.0L218.1 163.5L220.1 162.5L222.1 161.5L224.1 161.5L226.1 160.5L228.1 159.0L230.0 158.5L230.2 158.5L232.2 158.5L234.2 158.0L236.2 156.5L238.2 156.0L240.2 156.0L242.2 155.5L244.2 154.5L246.2 154.0L248.2 155.0L250.2 154.5L252.2 154.0L254.2 154.0L256.2 152.5L258.2 152.5L260.0 152.5L260.2 152.0L262.2 152.0L264.2 153.0L266.2 152.5L268.2 151.5L270.2 151.5L272.2 151.5L274.2 151.5L276.2 150.5L278.2 150.5L280.2 151.5L282.2 151.5L284.2 151.0L286.2 150.5L288.2 149.5L290.2 149.0L292.0 148.5L292.2 148.5L294.2 148.0L296.2 147.5L298.2 146.5L300.2 146.5L302.2 145.0L304.2 143.5L306.2 142.0L308.2 140.5L310.2 139.0L312.2 138.0L314.2 136.5L316.2 137.0L318.2 136.0L319.0 136.0L320.2 134.0L322.2 133.0L324.2 133.0L326.2 132.0L328.2 130.5L330.2 130.0L332.2 129.0L334.2 128.5L336.2 128.5L338.2 128.0L338.4 128.0L340.2 127.0L342.2 126.5L344.2 125.5L346.3 125.0L348.3 124.0L350.3 123.5L352.3 122.5L354.3 121.5L356.3 121.0L358.3 120.0L360.3 118.5L362.3 117.5L363.7 117.0L364.3 116.5L366.3 115.0L368.3 113.0L370.3 111.5L372.3 109.5L374.3 107.0L376.3 105.0L378.3 102.5L380.3 99.5L382.3 97.0L382.4 97.0L384.3 95.5L386.3 93.0L388.3 90.0L390.3 87.5L392.3 85.5L393.0 84.5L394.3 83.0L396.3 80.5L398.3 78.5L399.3 77.0L400.3 76.0L402.3 73.5L404.3 70.5L405.7 68.5L406.3 68.0L408.3 64.5L410.3 61.5L412.0 59.0L412.3 59.0L414.3 56.5L416.3 54.0L418.3 52.0L418.4 52.0L420.3 49.5L422.3 47.5L424.3 46.5L424.7 46.5L426.3 46.5L428.3 46.0L430.3 46.0L432.3 46.5L433.0 46.5L434.3 47.0L436.3 49.5L438.3 53.0L439.0 54.0L440.3 56.0L442.3 60.0L444.3 64.0L446.3 68.5L447.1 70.0L448.3 72.5L450.3 77.5L452.3 82.0L454.2 86.0L454.3 86.5L456.3 91.0L458.3 95.0L460.3 99.5L461.6 102.0L462.4 103.5L464.4 107.5L466.4 111.0L468.4 114.5L468.7 115.0L470.4 117.5L472.4 120.5L474.4 123.5L476.4 127.0L477.1 128.0L478.4 130.0L480.4 134.0L482.4 137.5L483.4 139.0L484.4 140.0L486.4 142.5L488.4 144.5L490.4 147.0L492.4 149.5L494.4 152.0L494.5 152.0L496.4 154.5L498.4 157.5L500.4 161.0L502.4 164.0L502.9 164.5L504.4 166.5L506.4 169.5L508.4 172.0L510.4 175.0L512.4 177.5L512.8 178.0L514.4 180.0L516.4 183.0L518.4 185.5L520.4 187.5L520.7 188.0L522.4 190.0L524.4 193.0L526.4 195.5L528.4 198.0L530.4 200.5L532.4 203.0L532.5 203.5L534.4 206.0L536.4 209.0L538.4 212.0L540.4 215.0L542.4 218.0L543.0 219.0L544.4 221.0L546.4 224.0L548.4 227.0L550.4 230.0L552.4 232.5L553.5 234.5L554.4 235.5L556.4 238.5L558.4 241.5L560.4 244.5L562.4 247.5L564.0 250.0L564.4 251.0L566.4 254.0L568.4 258.0L570.4 261.5L572.4 265.0L572.6 265.5L574.4 268.5L576.4 272.0L578.5 275.0L580.5 278.0L581.1 279.0L582.5 280.5L584.5 283.5L586.5 286.0L588.2 288.0L588.5 288.5L590.5 291.5L592.5 295.0L594.5 299.0L596.4 303.5L596.5 303.5L598.5 309.0L600.5 315.5L601.7 319.0L602.5 321.5L604.5 328.0L606.5 334.5L606.5 334.5L608.5 340.0L610.5 345.0L612.1 350.0L612.5 351.0L614.5 358.5L616.4 365.5L616.5 366.0L618.5 372.5L620.5 380.5L620.6 381.0L622.5 391.5L623.8 401.0L624.5 406.5L626.4 424.5L626.5 425.0L628.5 444.5L628.9 447.5L630.5 459.0L630.9 463.0L631.6 478.0L632.5 502.0L634.5 574.0L636.5 509.0L637.0 500.0L638.5 484.5L639.0 480.0L640.5 467.0L642.5 451.0L644.0 440.0L644.5 436.5L646.5 424.5L648.5 413.0L649.0 410.0L650.5 400.0L652.5 386.5L653.8 380.0L654.5 377.5L656.5 370.5L658.5 364.5L660.5 359.0L662.5 354.5L664.5 351.0L665.0 350.0L666.5 347.5L668.5 344.5L670.5 342.0L672.5 339.5L674.5 337.5L676.5 336.0L678.5 333.5L680.5 330.5L681.0 330.0L682.5 327.5L684.5 323.5L686.5 319.0L688.5 315.5L689.0 315.0L690.5 313.5L692.5 311.0L694.5 309.0L696.5 307.0L698.5 305.0L700.5 303.0L701.0 303.0L702.5 301.5L704.5 300.5L706.5 299.0L708.5 296.5L710.5 295.0L712.5 294.0L713.0 294.0L714.5 292.5L716.5 291.0L718.5 289.5L720.5 288.5L722.5 287.5L724.5 287.5L726.5 286.0L728.5 283.5L729.5 283.0L730.5 282.5L732.5 282.0L734.5 281.5L736.5 280.0L738.5 279.5L740.5 280.0L742.5 279.5L744.5 277.0L746.5 276.5L748.5 275.5L749.7 275.0L750.5 275.0L752.5 274.0L754.5 273.5L756.5 274.5L758.5 274.0L760.5 273.0L762.5 272.5L764.5 271.0L766.5 270.5L768.5 270.0L770.5 269.5L772.5 270.0L774.0 269.5L774.5 269.5L776.5 268.0L778.5 267.5L780.5 266.5L782.5 265.5L784.5 264.5L786.5 264.0L788.5 264.0L790.0 263.5L790.6 263.0L792.6 262.5L794.6 262.0L796.6 261.0L798.6 260.5L800.6 259.5L802.6 259.0L804.6 260.0L806.6 259.5L808.6 258.5L810.0 258.5L810.6 258.0L812.6 257.0L814.6 256.5L816.6 256.0L818.6 255.5L820.6 255.5L822.6 255.0L824.6 255.5L826.6 255.0L828.6 253.5L830.6 253.0L832.6 253.0L834.6 253.0L836.6 253.0L838.6 253.0L840.6 252.0L842.6 252.0L844.6 252.0L846.6 251.5L848.6 251.0L850.6 250.5L852.6 251.0L854.6 250.5L856.6 250.0L858.6 249.5L860.0 249.5L860.6 249.5L862.6 249.5L864.6 248.5L866.6 248.5L868.6 247.0L870.6 246.5L872.6 248.0L874.6 247.5L876.6 247.0L878.6 246.5L880.6 246.0L882.6 245.5L884.6 246.0L886.6 246.0L888.6 245.5L890.6 245.0L892.6 243.5L894.6 243.0L896.6 244.0L898.6 243.5L900.0 242.5L900.6 242.5L902.6 242.0L904.6 242.0L906.6 241.5L908.6 242.0L910.6 241.5L912.6 240.5L914.6 240.0L916.6 238.5L918.6 238.0L920.6 237.5L922.6 237.0L924.6 237.0L926.6 236.5L928.6 235.5L930.6 235.0L932.6 235.0L934.6 235.0L936.6 235.0L938.6 235.0L940.6 234.5L941.6 234.5L942.6 237.0L944.6 248.5L946.6 244.5L948.0 242.5L948.7 242.0L950.7 241.0L952.8 241.5L953.8 241.5L954.8 241.0L956.9 240.5L958.9 240.0L961.0 239.0L963.0 238.5L965.1 238.0L967.1 238.0L969.2 237.0L971.2 236.5L973.3 236.5L975.3 236.0L977.3 236.5L979.4 236.0L981.4 235.5L982.0 235.5L983.5 235.5L985.5 235.0L987.6 235.0L989.6 234.5L991.7 234.5L993.7 233.5L995.8 233.0L997.8 233.5L999.9 233.0L1001.9 232.0L1004.0 231.5L1006.0 232.0" stroke="#FF00FF"/>
<path d="M56.0 177.5L58.0 176.5L60.0 178.0L62.0 178.0L64.0 178.0L66.0 177.5L68.0 177.0L70.0 176.5L72.0 177.0L74.0 177.0L76.0 176.5L78.0 176.5L80.0 175.5L82.0 175.5L84.0 177.0L86.0 177.0L88.0 176.0L90.0 175.5L92.0 176.0L94.0 176.0L96.1 176.0L98.1 176.0L100.0 175.0L100.1 175.0L102.1 175.0L104.1 175.0L106.1 174.5L108.1 174.5L110.1 174.5L112.1 173.5L114.1 173.5L116.1 174.0L118.1 174.0L120.1 173.0L122.1 173.0L124.1 172.5L126.1 172.5L128.1 172.5L130.1 172.0L132.1 171.5L134.1 171.5L136.1 171.5L138.1 171.0L140.0 172.0L140.1 172.0L142.1 172.0L144.1 170.5L146.1 170.5L148.1 171.0L150.1 171.0L152.1 169.5L154.1 169.0L156.1 170.0L158.1 170.0L160.1 168.5L162.1 168.0L164.1 169.0L166.1 168.5L168.1 167.5L170.1 167.0L172.1 167.5L174.2 167.0L176.2 167.0L178.2 167.0L180.0 167.0L180.2 167.0L182.2 166.5L184.2 166.0L186.2 165.5L188.2 165.0L190.2 165.0L192.2 164.0L194.2 163.5L196.2 163.5L198.2 163.0L200.2 162.5L202.2 162.0L204.2 161.5L206.2 161.0L208.2 160.5L210.2 160.5L212.2 160.0L214.2 159.5L216.0 160.5L216.2 160.0L218.2 159.5L220.2 159.5L222.2 159.0L224.2 157.5L226.2 157.0L228.2 157.5L230.0 157.0L230.2 157.0L232.2 155.5L234.2 155.0L236.2 154.0L238.2 153.5L240.2 153.0L242.2 152.5L244.2 152.5L246.2 152.0L248.2 151.0L250.2 150.5L252.2 150.5L254.3 150.0L256.3 149.0L258.3 148.5L260.0 148.5L260.3 148.5L262.3 148.0L264.3 147.5L266.3 147.0L268.3 146.5L270.3 146.0L272.3 146.0L274.3 145.5L276.3 145.0L278.3 144.5L280.3 144.0L282.3 143.5L284.3 143.5L286.3 143.0L288.3 141.5L290.3 140.5L292.0 141.5L292.3 141.0L294.3 140.5L296.3 139.0L298.3 138.0L300.3 136.5L302.3 135.5L304.3 135.0L306.3 134.0L308.3 133.0L310.3 131.5L312.3 129.5L314.3 128.5L316.3 127.5L318.3 126.0L320.0 125.5L320.3 125.0L322.3 124.0L324.3 123.5L326.3 122.5L328.3 121.5L330.3 120.5L332.4 120.0L334.4 119.0L336.4 116.5L338.4 115.0L338.4 115.0L340.4 114.5L342.4 113.0L344.4 110.5L346.4 109.0L348.4 107.5L350.0 106.5L350.4 106.0L352.4 103.5L354.4 101.5L356.4 99.5L358.4 97.5L360.4 96.0L361.0 95.5L362.4 94.0L364.4 91.5L366.4 90.0L368.4 88.0L370.4 85.5L371.8 83.5L372.4 82.5L374.4 77.0L376.0 73.0L376.4 72.5L378.4 69.5L380.4 66.5L382.4 64.5L382.4 64.0L384.4 62.0L386.4 59.0L388.4 56.0L390.4 53.5L392.0 51.5L392.4 51.0L394.4 49.5L396.4 48.5L398.4 47.0L400.0 47.0L400.4 47.0L402.4 47.0L404.4 46.0L406.4 46.0L408.4 46.0L410.0 46.0L410.5 46.0L412.5 49.0L414.5 52.0L415.9 54.5L416.5 55.5L418.5 59.0L420.5 63.5L422.5 67.5L423.8 70.5L424.5 72.0L426.5 76.5L428.5 81.5L430.5 86.0L430.7 86.5L432.5 90.5L434.5 95.0L436.5 99.5L437.9 102.5L438.5 103.5L440.5 107.5L442.5 111.5L444.5 115.0L444.8 115.5L446.5 118.5L448.5 121.5L450.5 124.5L452.5 127.5L453.1 128.5L454.5 131.0L456.5 135.0L458.5 138.5L459.2 139.5L460.5 141.5L462.5 144.0L464.5 146.0L466.5 148.0L468.5 151.0L470.0 152.5L470.5 153.5L472.5 156.0L474.5 159.5L476.5 162.5L478.3 165.0L478.5 165.5L480.5 168.5L482.5 171.0L484.5 174.0L486.5 177.0L487.9 178.5L488.5 179.5L490.6 182.0L492.6 184.5L494.6 187.0L495.6 188.5L496.6 189.5L498.6 192.5L500.6 195.0L502.6 197.5L504.6 200.5L506.6 203.0L507.2 204.0L508.6 206.0L510.6 209.0L512.6 212.0L514.6 215.0L516.6 218.5L517.4 219.5L518.6 221.5L520.6 224.5L522.6 227.5L524.6 230.5L526.6 233.5L527.6 235.0L528.6 236.5L530.6 239.5L532.6 242.5L534.6 245.5L536.6 248.5L537.9 250.5L538.6 252.0L540.6 255.5L542.6 259.0L544.6 263.0L546.3 266.0L546.6 266.5L548.6 270.0L550.6 273.5L552.6 276.5L554.6 279.5L554.6 279.5L556.6 282.5L558.6 285.0L560.6 287.5L561.5 288.5L562.6 290.5L564.6 294.0L566.6 297.5L568.7 302.0L569.5 304.0L570.7 307.0L572.7 313.0L574.6 319.5L574.7 319.5L576.7 326.0L578.7 332.5L579.4 335.0L580.7 338.5L582.7 344.0L584.7 350.0L584.9 350.5L586.7 357.0L588.7 364.5L589.0 366.0L590.7 372.0L592.7 379.5L593.1 381.5L594.7 390.5L596.3 401.5L596.7 405.0L598.7 423.5L598.8 425.0L600.7 443.5L601.2 448.0L602.7 458.5L603.2 463.5L603.9 478.5L604.7 501.0L606.7 575.0L608.7 509.5L610.0 480.0L610.7 468.0L612.7 442.0L614.0 430.0L614.7 424.5L616.7 411.0L618.7 400.5L620.0 395.0L620.7 392.0L622.8 385.0L624.8 378.5L626.8 373.0L628.0 370.0L628.8 368.0L630.8 363.5L632.8 358.5L634.8 354.5L636.8 350.5L638.8 347.0L640.0 345.0L640.8 343.5L642.8 340.5L644.8 337.5L646.8 335.0L648.8 332.5L650.8 330.0L652.9 327.5L654.9 325.5L655.0 325.0L656.9 322.5L658.9 320.5L660.9 318.0L662.9 315.5L664.9 314.0L666.9 311.5L668.9 309.5L670.9 307.5L672.9 305.5L674.9 303.5L675.0 303.5L676.9 302.5L678.9 301.0L680.9 299.0L682.9 297.5L685.0 295.0L687.0 293.0L689.0 292.0L690.0 291.5L691.0 291.0L693.0 289.5L695.0 288.0L697.0 288.0L699.0 287.0L701.0 285.5L703.0 284.5L705.0 284.5L705.0 284.5L707.0 283.5L709.0 281.5L711.0 281.0L713.0 281.0L715.1 280.0L717.1 279.0L719.1 278.5L721.1 277.0L723.1 276.5L725.1 276.0L727.1 275.0L729.1 275.0L729.5 275.0L731.1 274.5L733.1 275.0L735.1 274.5L737.1 272.5L739.1 272.0L741.1 271.5L743.1 271.0L745.2 270.0L747.2 269.5L749.2 270.5L751.2 270.0L753.2 269.0L755.2 268.5L757.2 267.5L757.8 267.5L759.2 267.0L761.2 267.5L763.2 267.0L765.2 265.5L767.2 265.0L769.2 265.5L771.2 265.0L773.2 263.5L775.2 263.0L777.3 262.5L779.3 262.0L781.3 261.5L782.0 261.5L783.3 261.0L785.3 261.5L787.3 261.0L789.3 260.5L791.3 260.5L793.3 260.5L795.3 260.0L797.3 258.0L799.3 257.5L801.3 257.5L803.3 257.0L805.3 257.0L807.4 257.0L809.4 257.0L810.0 256.5L811.4 256.5L813.4 256.0L815.4 256.0L817.4 255.5L819.4 255.0L821.4 254.5L823.4 254.5L825.4 254.5L827.4 254.5L829.4 254.0L831.4 254.0L833.4 252.5L835.4 252.0L837.5 251.5L839.5 251.5L841.5 251.5L843.5 251.5L845.5 250.5L847.5 250.5L849.5 250.5L851.5 250.0L853.5 250.5L855.5 250.0L857.5 249.5L859.5 249.0L860.0 249.0L861.5 249.0L863.5 248.5L865.5 248.5L867.5 248.5L869.6 247.5L871.6 247.5L873.6 246.5L875.6 246.5L877.6 247.5L879.6 247.0L881.6 246.0L883.6 245.5L885.6 246.5L887.6 246.0L889.6 245.0L891.6 245.0L893.6 245.5L895.6 245.5L897.6 244.0L899.7 244.0L901.7 244.0L903.7 244.0L905.7 245.0L907.7 245.0L909.7 244.0L911.7 243.5L913.7 244.5L915.7 244.0L917.7 243.0L919.7 242.5L920.0 243.0L921.7 243.0L923.7 243.0L925.7 242.5L927.7 242.5L929.8 241.5L931.8 241.5L933.8 243.0L935.8 242.5L937.8 242.5L939.8 242.5L941.8 241.0L943.8 241.0L945.8 241.0L947.8 241.0L949.8 241.0L951.8 241.0L953.8 241.5L955.8 241.0L957.8 241.5L959.8 241.5L961.9 240.0L963.9 240.0L965.9 240.5L967.9 240.0L969.9 240.0L971.9 240.0L973.9 240.0L975.9 240.0L977.9 240.5L979.9 240.0L980.0 240.0L981.9 240.0L983.9 239.5L985.9 240.0L987.9 239.5L989.9 239.0L992.0 239.0L994.0 238.5L996.0 238.0L998.0 238.0L1000.0 237.5L1002.0 238.0L1004.0 238.0L1006.0 237.5" stroke="#00FFFF"/>
<path d="M56.0 176.5L58.0 176.0L60.0 177.0L62.0 177.0L64.0 176.0L66.0 176.0L68.0 176.5L70.0 176.5L72.0 176.5L74.1 176.5L76.1 176.0L78.1 176.0L80.1 175.0L82.1 174.5L84.1 175.5L86.1 175.5L88.1 174.5L90.1 174.5L92.1 174.5L94.1 174.0L96.1 175.0L98.1 175.0L100.0 173.5L100.1 173.5L102.1 173.5L104.1 174.0L106.1 173.5L108.2 174.0L110.2 174.0L112.2 174.0L114.2 173.5L116.2 173.5L118.2 173.5L120.2 172.5L122.2 172.5L124.2 172.5L126.2 172.0L128.2 173.0L130.2 172.5L132.2 171.5L134.2 171.0L136.2 171.5L138.2 171.5L140.0 170.0L140.2 170.0L142.3 170.0L144.3 170.5L146.3 170.0L148.3 170.0L150.3 170.0L152.3 168.5L154.3 168.5L156.3 169.5L158.3 169.0L160.3 168.0L162.3 167.5L164.3 167.0L166.3 166.5L168.3 166.5L170.3 166.0L172.3 166.5L174.4 166.0L176.4 165.0L178.4 164.5L180.0 165.0L180.4 165.0L182.4 164.5L184.4 165.0L186.4 165.0L188.4 164.0L190.4 163.5L192.4 162.5L194.4 162.0L196.4 163.0L198.4 163.0L200.4 162.5L202.4 162.0L204.4 161.0L206.4 160.5L208.5 161.5L210.5 161.0L212.5 160.0L214.5 159.5L216.0 159.0L216.5 159.0L218.5 158.5L220.5 157.5L222.5 157.0L224.5 157.0L226.5 156.0L228.5 155.5L230.0 155.0L230.5 155.0L232.5 154.5L234.5 153.5L236.5 152.5L238.5 152.0L240.5 151.5L242.6 151.0L244.6 149.5L246.6 149.0L248.6 150.0L250.6 149.5L252.6 148.0L254.6 147.5L256.6 147.5L258.6 147.0L260.0 146.5L260.6 146.5L262.6 146.0L264.6 145.5L266.6 145.0L268.6 143.5L270.6 143.0L272.6 142.0L274.6 141.5L276.7 141.5L278.7 141.0L280.7 140.5L282.7 140.0L284.7 139.0L286.7 138.5L288.7 138.0L290.7 137.0L292.0 138.0L292.7 138.0L294.7 137.0L296.7 136.0L298.7 135.0L300.7 132.5L302.7 131.5L304.7 130.0L306.7 129.0L308.7 127.5L310.8 126.0L312.8 126.0L314.8 125.0L316.8 123.0L318.8 122.0L320.0 121.5L320.8 121.0L322.8 120.0L324.8 118.0L326.8 117.0L328.8 116.0L330.8 115.0L332.8 113.5L334.8 112.5L336.8 111.0L338.4 110.0L338.8 109.5L340.8 107.5L342.9 105.0L344.9 102.0L346.9 99.5L348.9 96.5L350.0 95.0L350.9 94.0L352.9 91.0L354.9 88.5L356.9 85.5L358.9 83.0L360.9 80.5L361.0 80.5L362.9 78.0L364.9 75.0L366.9 72.5L368.9 70.0L370.9 67.0L371.8 65.5L372.9 63.5L374.9 59.5L377.0 56.0L377.0 56.0L379.0 54.0L381.0 53.0L382.4 52.0L383.0 52.0L385.0 49.5L387.0 48.0L389.0 47.0L390.0 47.0L391.0 47.0L393.0 49.0L395.0 49.0L397.0 47.5L399.0 47.5L399.0 47.5L401.0 49.0L403.0 52.5L404.9 56.0L405.0 56.0L407.0 60.0L409.0 64.0L411.1 68.5L412.8 72.0L413.1 72.5L415.1 77.0L417.1 82.0L419.1 86.5L419.6 88.0L421.1 91.5L423.1 96.0L425.1 100.0L426.9 104.0L427.1 104.5L429.1 108.5L431.1 112.0L433.1 116.0L433.8 117.0L435.1 119.0L437.1 122.5L439.1 125.5L441.1 128.5L442.1 130.0L443.1 132.0L445.2 136.0L447.2 139.5L448.1 141.0L449.2 142.0L451.2 144.5L453.2 147.0L455.2 149.0L457.2 151.5L459.0 154.0L459.2 154.5L461.2 157.0L463.2 160.5L465.2 163.5L467.2 166.5L467.2 166.5L469.2 169.5L471.2 172.0L473.2 175.0L475.2 178.0L476.9 180.0L477.2 180.5L479.3 183.0L481.3 186.0L483.3 188.5L484.5 190.0L485.3 191.0L487.3 193.5L489.3 196.0L491.3 198.5L493.3 201.5L495.3 204.0L496.1 205.5L497.3 207.0L499.3 210.0L501.3 213.5L503.3 216.5L505.3 219.5L506.3 221.0L507.3 222.5L509.3 225.5L511.4 228.5L513.4 231.5L515.4 234.5L516.6 236.5L517.4 237.5L519.4 240.5L521.4 243.5L523.4 246.5L525.4 249.5L526.8 252.0L527.4 253.0L529.4 256.5L531.4 260.5L533.4 264.0L535.2 267.5L535.4 267.5L537.4 271.0L539.4 274.5L541.4 278.0L543.4 281.0L543.5 281.0L545.5 284.0L547.5 286.5L549.5 288.5L550.4 290.0L551.5 291.5L553.5 295.0L555.5 299.0L557.5 303.5L558.4 305.5L559.5 308.0L561.5 314.5L563.5 321.0L563.6 321.0L565.5 327.5L567.5 334.0L568.3 336.5L569.5 340.0L571.5 345.5L573.5 351.0L573.8 352.0L575.5 358.5L577.5 366.0L577.9 367.5L579.6 373.0L581.6 381.0L582.0 383.0L583.6 391.5L585.2 403.0L585.6 406.0L587.6 425.0L587.7 426.5L589.6 445.0L590.1 449.5L591.6 460.0L592.1 465.0L592.8 480.0L593.6 499.0L595.6 549.0L597.6 496.5L599.0 470.0L599.6 461.5L601.6 439.0L603.6 422.5L604.0 420.0L605.6 409.5L607.6 399.0L609.6 390.0L611.0 385.0L611.6 382.5L613.7 376.0L615.7 370.0L617.7 364.5L619.7 360.0L621.7 355.5L622.0 355.0L623.7 352.0L625.7 348.5L627.7 345.5L629.7 343.0L631.7 340.5L633.7 337.5L635.7 335.0L636.0 335.5L637.7 333.0L639.7 331.0L641.7 328.5L643.8 326.0L645.8 324.0L647.8 322.0L648.6 321.0L649.8 320.0L651.8 318.0L653.8 315.5L655.8 313.5L657.8 312.5L659.8 310.5L660.7 308.5L661.8 307.5L663.8 306.0L665.8 304.5L667.8 303.0L669.8 301.5L671.8 299.5L673.8 298.0L674.9 297.5L675.9 296.5L677.9 295.5L679.9 294.0L681.9 291.5L683.9 290.0L685.9 289.0L687.9 287.5L689.0 286.0L689.9 286.0L691.9 284.5L693.9 284.5L695.9 284.0L697.9 282.5L699.9 282.0L701.9 281.5L703.9 281.0L705.0 280.0L705.9 280.0L708.0 279.0L710.0 278.0L712.0 277.5L714.0 276.0L716.0 275.0L718.0 275.5L720.0 275.0L722.0 274.0L724.0 273.5L726.0 273.0L728.0 271.5L729.5 271.0L730.0 271.0L732.0 270.5L734.0 270.0L736.0 270.5L738.0 270.0L740.1 269.5L742.1 269.0L744.1 268.0L746.1 267.5L748.1 266.5L750.1 266.0L752.1 267.0L754.1 266.5L756.1 265.5L757.8 265.0L758.1 265.0L760.1 265.0L762.1 264.5L764.1 262.5L766.1 262.0L768.1 261.5L770.1 261.0L772.2 261.0L774.2 260.5L776.2 260.0L778.2 259.5L780.2 258.5L782.0 258.0L782.2 258.0L784.2 259.0L786.2 258.5L788.2 257.5L790.2 257.5L792.2 256.0L794.2 255.5L796.2 256.0L798.2 255.5L800.2 255.5L802.2 255.5L804.2 255.0L806.3 254.5L808.3 254.5L810.0 254.5L810.3 254.0L812.3 253.5L814.3 253.5L816.3 253.5L818.3 253.0L820.3 252.0L822.3 252.0L824.3 250.5L826.3 250.5L828.3 250.5L830.3 250.5L832.3 249.5L834.3 249.0L836.4 249.0L838.4 248.5L840.4 248.0L842.4 247.5L844.4 247.5L846.4 247.0L848.4 247.0L850.4 246.5L852.4 246.5L854.4 246.0L856.4 246.0L858.4 246.0L860.0 245.5L860.4 245.5L862.4 245.5L864.4 245.0L866.4 245.0L868.5 245.5L870.5 245.0L872.5 245.5L874.5 245.0L876.5 243.5L878.5 243.5L880.5 244.5L882.5 244.5L884.5 244.5L886.5 244.5L888.5 244.0L890.5 244.0L892.5 244.0L894.5 244.0L896.5 242.5L898.5 242.5L900.5 242.5L902.6 242.5L904.6 243.0L906.6 242.5L908.6 242.0L910.6 242.0L912.6 240.5L914.6 240.0L916.6 240.5L918.6 240.0L920.0 240.5L920.6 240.5L922.6 240.0L924.6 239.5L926.6 239.0L928.6 238.5L930.6 238.0L932.7 237.5L934.7 236.5L936.7 234.0L938.7 233.0L940.0 232.5L940.7 231.0L942.7 224.5L944.7 216.0L945.0 215.0L946.7 208.5L948.7 200.0L951.0 235.0L951.2 238.0L953.8 265.0L955.8 258.5L957.0 256.0L957.8 255.0L959.8 252.5L961.8 250.5L961.8 250.5L963.8 249.0L965.8 247.5L967.9 246.0L969.9 245.0L971.9 244.0L973.9 241.0L975.9 240.0L977.9 240.0L979.9 239.0L981.9 238.5L982.0 238.5L983.9 238.0L985.9 237.0L987.9 237.0L989.9 237.0L991.9 236.5L994.0 236.5L996.0 236.0L998.0 236.5L1000.0 236.0L1002.0 234.5L1004.0 234.0L1006.0 235.0" stroke="#00FFFF"/>
<path d="M56.0 179.5L58.0 179.5L60.0 179.0L62.0 179.0L64.0 179.0L66.0 179.0L68.0 179.0L70.0 179.0L72.0 179.5L74.0 179.5L76.0 178.5L78.0 178.5L80.0 178.5L82.0 178.5L84.0 178.0L86.0 178.0L88.0 178.5L90.0 178.5L92.0 177.5L94.0 177.5L96.0 178.0L98.0 178.0L100.0 177.0L102.0 176.5L104.0 176.5L106.0 176.5L108.0 176.5L110.0 176.5L112.0 177.5L114.0 177.0L116.0 176.5L118.0 176.0L120.0 177.0L122.0 177.0L124.0 176.0L126.0 176.0L128.0 176.0L130.0 175.5L132.0 176.0L134.0 176.0L136.0 176.5L138.0 176.0L140.0 175.5L142.0 175.5L144.0 175.5L146.0 175.0L148.0 175.5L150.0 175.5L152.0 174.5L154.0 174.5L156.0 173.5L158.0 173.0L160.0 174.0L162.0 173.5L164.0 174.0L166.0 173.5L168.0 173.5L170.0 173.0L172.0 173.0L174.0 172.5L176.0 172.5L178.0 172.5L180.0 171.5L182.0 171.5L184.0 170.5L186.0 170.5L188.0 171.5L190.0 171.5L192.0 170.5L194.0 170.5L196.0 171.0L198.0 171.0L200.0 170.5L202.0 170.0L204.0 169.5L206.0 169.0L208.0 170.5L210.0 170.0L212.0 168.5L214.0 168.5L216.0 168.5L218.0 168.5L220.0 168.0L222.0 168.0L224.0 168.0L226.0 167.5L228.0 166.5L230.0 166.0L232.0 166.0L234.0 165.5L236.0 164.5L238.0 164.0L240.0 163.0L242.0 162.5L244.0 163.0L246.0 162.5L248.0 162.0L250.0 161.5L252.0 161.0L254.0 160.5L256.0 158.5L258.0 157.5L260.0 157.0L262.0 156.0L264.0 156.5L266.0 156.5L268.0 156.0L270.0 155.5L272.0 156.0L274.0 155.5L276.0 155.5L278.0 155.5L280.0 153.5L282.0 153.5L284.0 153.5L286.0 153.5L288.0 153.5L290.0 153.0L292.0 152.5L292.6 152.5L294.0 152.5L296.0 152.5L298.0 152.0L300.0 151.0L302.0 150.5L304.0 149.5L306.0 148.5L308.0 148.0L310.0 147.0L312.0 146.0L314.0 145.5L316.0 144.0L318.0 143.5L319.0 143.0L320.0 143.0L322.0 142.0L324.0 141.0L326.0 140.5L328.0 139.0L330.0 138.5L332.0 136.5L334.0 135.5L336.0 135.5L338.0 134.5L338.4 134.5L340.0 132.5L342.0 132.0L344.0 132.0L346.0 131.5L348.0 131.0L350.0 130.0L352.0 128.5L354.0 128.0L356.0 126.5L358.0 125.5L360.0 124.5L362.0 123.5L363.7 122.5L364.0 123.0L366.0 121.5L368.0 121.0L370.0 119.5L372.0 117.0L374.0 115.5L376.0 114.0L378.0 112.5L380.0 110.0L382.0 108.0L384.0 107.0L386.0 104.5L386.6 104.0L388.0 102.0L390.0 99.0L392.0 96.5L394.0 93.5L396.0 90.5L397.2 89.0L398.0 88.0L400.0 85.0L402.0 82.5L404.0 80.0L406.0 77.5L407.8 75.0L408.0 74.5L410.0 71.5L412.0 68.0L414.0 64.5L416.0 61.5L418.0 59.0L420.0 57.0L420.5 56.5L422.0 55.0L424.0 52.5L426.0 51.0L426.9 51.0L428.0 50.5L430.0 50.5L432.0 51.5L434.0 53.0L436.0 57.0L437.0 59.0L438.0 61.0L440.0 65.5L442.0 70.5L443.8 75.0L444.0 75.5L446.0 81.0L448.0 86.5L449.6 91.0L450.0 92.0L452.0 97.0L454.0 102.5L455.9 107.0L456.0 107.5L458.0 112.0L460.0 116.5L461.7 120.0L462.0 120.5L464.0 124.5L466.0 128.0L468.0 131.5L468.8 133.0L470.0 135.5L472.0 140.0L474.0 144.0L476.0 147.0L478.0 150.0L480.0 152.5L482.0 155.0L483.2 157.0L484.0 158.0L486.0 161.5L488.0 165.5L490.0 169.0L490.3 169.5L492.0 172.5L494.0 175.5L496.0 179.0L498.0 182.0L498.5 183.0L500.0 185.5L502.0 188.5L504.0 191.5L505.1 193.0L506.0 194.5L508.0 197.5L510.0 200.5L512.0 203.5L514.0 207.0L515.0 208.5L516.0 210.0L518.0 213.5L520.0 217.5L522.0 221.0L523.7 224.0L524.0 224.5L526.0 228.0L528.0 231.5L530.0 235.0L532.0 238.5L532.5 239.5L534.0 242.0L536.0 245.5L538.0 249.0L540.0 252.5L541.2 255.0L542.0 256.5L544.0 261.0L546.0 265.0L548.0 269.5L548.4 270.5L550.0 273.5L552.0 277.5L554.0 281.5L555.5 284.0L556.0 285.0L558.0 288.0L560.0 290.5L561.4 293.0L562.0 294.0L564.0 298.0L566.0 302.5L568.0 308.0L568.2 308.5L570.0 314.0L572.0 321.5L572.6 324.0L574.0 329.5L576.0 337.0L576.6 339.5L578.0 344.0L580.0 350.5L581.4 355.0L582.0 357.5L584.0 366.5L584.9 370.5L586.0 375.0L588.0 384.0L588.4 386.0L590.0 397.0L591.1 406.0L592.0 415.0L593.3 429.5L594.0 438.0L595.3 452.5L596.0 458.5L597.0 468.0L597.6 483.0L598.0 494.0L600.0 549.0L602.0 507.0L603.5 480.0L604.0 471.5L606.0 442.0L607.0 430.0L608.0 419.0L610.0 400.5L611.5 390.0L612.0 387.0L614.0 376.0L616.0 367.0L618.0 360.0L618.0 360.0L620.0 353.5L622.0 348.0L624.0 343.0L626.0 338.0L628.0 334.0L630.0 330.0L630.0 330.0L632.0 326.0L634.0 323.0L636.0 319.5L638.1 316.5L640.1 313.5L640.5 313.0L642.1 311.0L644.1 308.0L646.1 305.0L648.1 303.0L650.1 300.5L652.1 297.5L652.6 297.0L654.1 295.0L656.1 292.5L658.1 290.0L660.1 288.0L662.1 285.5L664.1 283.5L666.1 282.0L666.8 281.5L668.1 280.0L670.1 278.5L672.1 277.5L674.1 276.5L676.1 275.0L678.1 274.0L680.1 273.0L682.1 272.0L684.1 270.0L686.1 269.0L688.1 269.0L689.0 268.5L690.1 268.0L692.1 266.0L694.1 265.0L696.1 264.0L698.1 263.5L700.1 263.5L702.1 262.5L704.1 261.0L706.1 260.0L708.1 260.0L709.0 259.5L710.2 259.0L712.2 258.0L714.2 257.5L716.2 258.0L718.2 257.0L720.2 255.5L722.2 255.0L724.2 256.0L726.2 255.5L728.2 254.0L729.5 253.5L730.2 253.5L732.2 253.0L734.2 252.5L736.2 252.0L738.2 251.0L740.2 251.0L742.2 250.0L744.2 248.5L746.2 247.5L748.2 248.0L750.2 247.0L752.2 246.5L753.8 246.0L754.2 245.5L756.2 245.5L758.2 245.0L760.2 244.0L762.2 243.5L764.2 242.0L766.2 241.5L768.2 240.5L770.2 239.5L772.2 239.5L774.2 239.0L776.2 238.0L778.2 237.5L780.2 237.0L782.0 236.5L782.3 236.5L784.3 235.5L786.3 235.0L788.3 235.0L790.3 234.5L792.3 234.0L794.3 233.5L796.3 232.5L798.3 232.0L800.3 232.0L802.3 231.5L804.3 231.5L806.3 230.5L808.3 230.5L810.0 230.0L810.3 230.0L812.3 227.5L814.3 226.5L816.3 226.5L818.3 225.5L820.0 225.0L820.3 225.0L822.3 224.5L824.3 223.0L826.3 222.5L828.3 222.5L830.3 222.0L832.3 222.0L834.3 222.0L836.3 220.5L838.3 220.5L840.3 219.5L840.5 219.5L842.3 219.0L844.3 219.5L846.3 218.5L848.3 218.0L850.3 217.5L852.4 216.0L854.4 215.5L856.4 214.5L858.4 214.0L860.4 214.0L860.7 214.0L862.4 213.5L864.4 212.0L866.4 211.0L868.4 210.0L870.4 209.5L872.4 209.5L874.4 209.0L876.4 208.5L878.4 207.5L880.4 206.0L881.0 205.5L882.4 205.0L884.4 205.5L886.4 205.0L888.4 203.5L890.4 203.0L892.4 202.0L894.4 201.0L896.4 200.0L897.0 200.0L898.4 199.0L900.4 197.5L902.4 196.5L904.4 195.0L906.4 193.5L908.4 192.0L909.0 191.5L910.4 190.5L912.4 190.0L914.4 188.5L916.4 186.5L918.4 185.0L920.4 183.5L922.4 181.5L924.0 180.0L924.5 179.5L926.5 176.5L928.5 173.0L930.5 169.5L932.5 165.5L934.5 161.5L934.7 161.0L936.5 157.5L938.5 152.5L940.5 148.0L942.5 142.5L944.5 136.5L945.0 134.5L946.5 129.5L948.5 121.0L950.5 112.0L952.5 103.0L953.0 100.5L954.5 93.0L956.5 82.5L958.4 74.0L958.5 73.5L960.5 67.5L962.6 74.0L963.7 79.5L964.6 85.5L966.7 105.0L967.6 113.5L968.8 124.5L970.8 144.0L971.6 150.5L972.9 161.0L975.0 176.0L976.8 187.0L977.0 188.5L979.1 197.0L981.2 205.5L982.0 210.0L983.2 221.0L985.3 244.5L986.0 250.5L987.4 261.5L989.5 275.5L991.5 288.0L992.0 291.0L993.6 299.5L995.7 310.5L997.0 320.0L997.7 327.0L999.8 353.5L1001.9 385.5L1003.0 403.0L1003.9 417.0L1006.0 450.0" stroke="#FF0000"/>
<path d="M56.0 163.0L58.0 162.0L60.0 163.0L62.0 162.5L64.0 163.0L66.0 162.5L68.0 162.0L70.0 161.5L72.0 161.0L74.0 160.5L76.0 161.0L78.0 161.0L80.0 161.0L82.0 160.5L84.0 159.5L86.0 159.5L88.0 158.5L90.0 158.0L92.0 158.0L94.0 157.5L96.0 158.5L98.0 158.5L100.0 157.5L100.0 157.5L102.0 157.5L104.0 156.5L106.0 156.5L108.0 157.0L110.1 157.0L112.1 156.0L114.1 156.0L116.1 155.0L118.1 154.5L120.1 155.0L122.1 154.5L124.1 154.0L126.1 154.0L128.1 154.0L130.1 154.0L132.1 153.5L134.1 153.5L136.1 152.5L138.1 152.5L140.0 153.0L140.1 153.0L142.1 153.0L144.1 152.5L146.1 152.0L148.1 152.5L150.1 152.5L152.1 152.0L154.1 151.5L156.1 151.5L158.1 151.0L160.1 150.5L162.1 150.5L164.1 150.0L166.1 149.5L168.1 150.5L170.1 150.5L172.1 149.5L174.1 149.0L176.1 149.0L178.1 149.0L180.1 148.5L181.6 148.0L182.1 148.0L184.1 147.0L186.1 146.5L188.1 146.5L190.1 146.0L192.1 146.0L194.1 145.5L196.1 146.5L198.1 146.0L200.1 145.0L202.1 144.5L204.1 144.5L206.1 144.0L208.0 143.0L208.1 143.0L210.1 142.5L212.1 142.0L214.1 141.5L216.1 142.0L218.2 141.0L220.2 140.5L222.2 140.0L224.2 138.5L226.2 138.0L228.2 137.0L230.2 136.5L232.2 136.5L234.0 136.0L234.2 136.0L236.2 136.0L238.2 135.5L240.2 134.5L242.2 134.0L244.2 134.0L246.2 133.5L248.2 131.5L250.2 131.0L252.2 132.0L254.2 131.0L256.2 130.5L258.2 130.0L260.2 128.5L262.2 128.0L264.2 127.5L266.0 127.0L266.2 127.0L268.2 126.0L270.2 125.5L272.2 125.0L274.2 124.0L276.2 122.5L278.2 121.5L280.2 121.0L282.2 120.0L284.2 118.5L286.2 117.5L288.2 117.0L290.2 116.0L292.2 115.5L292.6 115.5L294.2 114.5L296.2 114.0L298.2 113.0L300.2 110.0L302.2 109.0L304.2 108.5L306.2 107.0L308.2 106.0L310.2 105.0L312.2 102.5L314.2 101.5L316.2 101.5L318.2 100.0L319.0 99.5L320.2 97.5L322.2 96.0L324.3 96.0L326.3 94.5L328.3 92.0L330.3 90.5L332.3 89.0L334.3 87.5L336.3 86.5L338.3 84.5L338.4 84.5L340.3 82.0L342.3 79.5L344.3 77.0L346.3 74.5L348.3 72.0L350.0 70.0L350.3 69.5L352.3 67.5L354.3 65.5L356.3 64.0L358.3 62.0L360.3 59.5L362.3 58.0L364.3 56.0L365.0 55.5L366.3 54.0L368.3 52.5L370.3 51.0L372.3 51.0L374.3 50.0L375.0 49.5L376.3 48.5L378.3 48.0L380.0 46.5L380.3 46.5L382.3 46.5L384.3 47.0L386.3 47.0L388.3 47.0L389.0 47.0L390.3 47.5L392.3 50.5L394.3 54.0L395.0 55.0L396.3 57.0L398.3 61.0L400.3 65.0L402.3 69.5L403.1 71.0L404.3 73.5L406.3 78.0L408.3 83.0L410.2 87.0L410.3 87.5L412.3 92.0L414.3 96.0L416.3 100.5L417.6 103.0L418.3 104.5L420.3 108.5L422.3 112.0L424.3 115.5L424.7 116.0L426.3 118.5L428.3 121.5L430.4 124.5L432.4 128.0L433.1 129.0L434.4 131.0L436.4 135.0L438.4 138.5L439.4 140.0L440.4 141.5L442.4 143.5L444.4 146.0L446.4 148.0L448.4 150.5L450.4 153.0L450.5 153.0L452.4 155.5L454.4 158.5L456.4 161.5L458.4 164.5L458.9 165.5L460.4 167.5L462.4 170.5L464.4 173.0L466.4 176.0L468.4 178.5L468.8 179.0L470.4 181.0L472.4 183.5L474.4 186.0L476.4 188.5L476.7 189.0L478.4 191.0L480.4 194.0L482.4 196.5L484.4 199.0L486.4 202.0L488.4 204.0L488.5 204.5L490.4 207.0L492.4 210.0L494.4 213.0L496.4 216.0L498.4 219.0L499.0 220.0L500.4 222.0L502.4 225.0L504.4 228.0L506.4 231.0L508.4 234.0L509.5 235.5L510.4 237.0L512.4 239.5L514.4 242.5L516.4 245.5L518.4 248.5L520.0 251.0L520.4 252.0L522.4 255.0L524.4 259.0L526.4 262.5L528.4 266.0L528.6 266.5L530.4 269.5L532.4 273.0L534.4 276.0L536.4 279.0L537.1 280.0L538.5 282.0L540.5 284.5L542.5 287.0L544.2 289.0L544.5 289.5L546.5 292.5L548.5 296.0L550.5 300.0L552.4 304.5L552.5 304.5L554.5 310.0L556.5 316.5L557.7 320.0L558.5 322.5L560.5 329.0L562.5 335.5L562.5 335.5L564.5 341.0L566.5 346.0L568.1 351.0L568.5 352.0L570.5 359.5L572.4 366.5L572.5 367.0L574.5 373.5L576.5 381.5L576.6 382.0L578.5 392.5L579.8 402.0L580.5 407.5L582.4 425.5L582.5 426.0L584.5 445.5L584.9 448.5L586.5 460.0L586.9 464.0L587.6 479.0L588.5 498.5L590.5 545.0L592.0 480.0L592.5 463.5L594.5 412.0L595.0 400.0L596.5 353.5L598.6 302.0L598.7 300.0L600.6 279.5L602.6 265.0L603.0 262.0L604.6 253.0L606.6 244.0L608.6 232.5L609.0 230.0L610.6 214.5L612.7 188.5L614.0 170.0L614.7 160.5L616.7 128.5L618.7 92.5L620.7 122.5L622.0 140.0L622.7 150.0L624.8 176.5L626.0 190.0L626.8 197.0L628.8 213.5L630.8 227.5L632.0 235.0L632.8 240.5L634.9 253.5L636.9 266.0L638.9 276.0L640.0 280.0L640.9 282.5L642.9 287.0L645.0 291.0L647.0 294.5L649.0 300.0L651.0 308.5L653.0 319.5L655.0 330.0L655.1 330.5L657.1 341.0L659.1 351.5L661.0 360.0L661.1 360.5L663.1 367.0L665.2 372.5L667.0 380.0L667.2 381.0L669.2 397.5L671.2 420.5L672.0 430.0L673.2 446.0L675.3 477.5L675.4 480.0L677.3 520.0L679.3 574.0L681.3 516.0L683.0 480.0L683.3 475.0L685.3 447.0L687.3 426.0L688.0 420.0L689.4 409.0L691.4 394.5L693.4 383.0L694.0 380.0L695.4 374.5L697.4 367.5L699.4 362.0L701.4 356.5L702.0 355.0L703.4 351.5L705.4 346.5L707.4 342.0L709.5 337.5L711.5 333.5L713.3 330.0L713.5 329.5L715.5 326.0L717.5 323.0L719.5 320.0L721.4 317.0L721.5 317.0L723.5 314.0L725.5 311.5L727.5 308.5L729.6 306.0L731.6 303.5L733.6 301.0L735.6 299.0L737.6 297.0L737.6 297.0L739.6 295.0L741.6 294.0L743.6 292.5L745.6 290.0L747.6 288.5L749.7 288.0L751.7 286.5L753.7 284.5L753.8 284.5L755.7 283.5L757.7 282.0L759.7 280.5L761.7 280.0L763.7 279.0L765.7 278.0L767.7 277.0L769.8 275.5L771.8 274.5L773.8 274.0L774.0 274.0L775.8 273.0L777.8 271.5L779.8 270.5L781.8 269.5L783.8 268.5L785.8 268.5L787.8 267.5L789.9 267.5L790.0 267.5L791.9 266.5L793.9 265.5L795.9 265.0L797.9 264.5L799.9 264.0L801.9 263.5L803.9 263.0L805.9 262.0L807.9 261.5L810.0 259.0L810.0 259.0L812.0 258.0L814.0 256.0L816.0 254.0L818.0 252.5L820.0 251.0L820.0 251.0L822.0 250.0L824.0 248.5L826.0 247.5L828.0 246.5L830.1 246.0L832.1 245.0L834.1 244.5L836.1 245.0L838.1 244.5L840.1 243.5L840.5 243.5L842.1 243.0L844.1 240.5L846.1 240.0L848.2 238.5L850.2 238.0L852.2 237.0L854.2 236.0L856.2 236.0L858.2 235.0L860.2 233.5L860.7 233.5L862.2 232.5L864.2 231.5L866.2 230.5L868.3 230.5L870.3 230.0L872.3 228.5L874.3 227.5L876.3 227.0L878.3 226.5L880.3 225.0L881.0 224.5L882.3 224.0L884.3 224.0L886.3 223.0L888.4 221.5L890.4 221.0L892.4 220.0L894.4 219.0L896.4 218.0L898.4 217.0L900.4 217.0L901.0 217.0L902.4 216.0L904.4 215.0L906.4 214.0L908.5 212.5L910.5 211.5L912.5 210.5L914.5 209.5L916.5 207.5L918.5 206.5L920.5 204.5L921.4 204.0L922.5 203.0L924.5 201.5L926.5 199.0L928.6 196.0L930.6 194.0L932.6 191.0L933.5 190.0L934.6 188.5L936.6 185.0L938.6 181.5L940.6 177.5L942.6 173.5L944.6 169.5L945.0 169.0L946.6 166.0L948.7 162.5L950.7 158.5L952.7 154.5L954.7 150.5L955.8 148.0L956.7 146.0L958.7 141.5L960.7 136.0L962.7 130.0L963.7 127.0L964.7 122.5L966.7 112.0L968.8 100.0L970.0 92.5L970.8 88.0L972.8 74.5L974.0 69.0L974.8 66.5L976.8 62.5L978.9 69.0L979.5 71.5L981.0 82.0L983.1 102.5L983.4 106.0L985.1 123.5L987.2 143.5L987.4 145.0L989.3 158.0L991.4 170.0L992.6 177.0L993.5 182.0L995.6 192.5L997.7 207.0L998.0 210.0L999.7 236.5L1001.8 277.0L1002.0 280.0L1003.9 310.0L1006.0 340.0" stroke="#0000FF"/>
<path d="M56.0 181.0L58.0 180.0L60.0 181.0L62.0 181.0L64.0 181.5L66.0 181.5L68.0 180.0L70.0 180.0L72.0 181.0L74.0 181.0L76.0 179.5L78.0 179.5L80.0 179.5L82.0 179.5L84.0 180.0L86.0 180.0L88.0 180.5L90.0 180.0L92.0 179.0L94.0 179.0L96.0 179.5L98.0 179.5L100.0 179.5L102.0 179.0L102.6 179.0L104.0 178.5L106.0 178.5L108.1 178.5L110.1 178.5L112.1 179.0L114.1 179.0L116.1 178.0L118.1 178.0L120.1 178.5L122.1 178.5L124.1 177.0L126.1 176.5L128.1 176.5L129.0 176.5L130.1 176.5L132.1 178.0L134.1 178.0L136.1 176.5L138.1 176.5L140.1 177.5L142.1 177.0L144.1 176.0L146.1 176.0L148.1 174.5L150.1 174.5L152.1 174.5L154.1 174.5L155.0 174.0L156.1 174.0L158.1 173.5L160.1 174.0L162.1 173.5L164.1 174.0L166.1 173.5L168.1 173.5L170.1 173.0L172.1 172.5L174.1 172.5L176.1 172.5L178.1 172.0L180.1 171.5L181.6 171.0L182.1 171.0L184.1 170.0L186.1 170.0L188.1 169.5L190.1 169.0L192.1 169.5L194.1 169.5L196.1 168.5L198.1 168.5L200.1 167.5L202.1 167.0L204.1 167.5L206.1 167.5L208.0 167.5L208.1 167.5L210.1 167.0L212.2 166.0L214.2 165.5L216.2 165.5L218.2 165.0L220.2 164.0L222.2 163.5L224.2 163.5L226.2 163.5L228.2 164.0L230.2 163.5L232.2 161.5L234.0 161.5L234.2 161.0L236.2 162.0L238.2 161.5L240.2 161.5L242.2 161.0L244.2 159.0L246.2 158.5L248.2 159.0L250.2 158.5L252.2 159.0L254.2 158.5L256.2 156.5L258.2 156.0L260.2 157.0L262.2 156.5L264.2 156.0L266.0 156.0L266.2 156.0L268.2 154.0L270.2 154.0L272.2 154.5L274.2 154.5L276.2 154.0L278.2 154.0L280.2 153.0L282.2 152.5L284.2 152.5L286.2 152.0L288.2 152.0L290.2 152.0L292.2 150.5L292.6 150.0L294.2 150.0L296.2 150.0L298.2 149.5L300.2 149.0L302.2 148.5L304.2 146.0L306.2 145.0L308.2 144.0L310.2 142.5L312.2 143.0L314.2 141.5L316.3 139.0L318.3 138.0L319.0 137.5L320.3 137.5L322.3 136.0L324.3 135.0L326.3 133.5L328.3 132.5L330.3 131.0L332.3 129.5L334.3 127.5L336.3 125.0L338.3 123.5L338.4 123.5L340.3 122.0L342.3 120.5L344.3 118.5L346.3 117.0L348.3 115.0L350.0 113.5L350.3 113.0L352.3 112.5L354.3 110.5L356.3 108.0L358.3 106.5L360.3 105.0L361.0 104.0L362.3 102.5L364.3 100.0L366.3 97.0L368.3 94.0L370.3 91.0L371.8 89.0L372.3 88.0L374.3 85.0L376.3 82.0L377.0 80.5L378.3 76.5L380.0 71.0L380.3 70.5L382.3 66.5L384.3 63.5L386.3 61.0L387.7 59.0L388.3 58.0L390.3 55.5L392.3 52.0L394.3 49.5L395.0 49.0L396.3 48.0L398.0 47.5L398.3 47.5L400.3 48.5L402.3 48.5L404.0 47.5L404.3 47.5L406.3 50.5L408.3 54.5L409.1 56.0L410.3 58.5L412.3 63.0L414.3 68.0L415.9 72.0L416.3 73.0L418.3 78.5L420.4 84.0L421.9 88.0L422.4 89.0L424.4 94.5L426.4 99.5L428.2 104.0L428.4 104.5L430.4 109.0L432.4 113.5L434.2 117.0L434.4 117.5L436.4 121.0L438.4 124.5L440.4 128.0L441.3 130.0L442.4 132.0L444.4 136.5L446.4 140.5L446.6 141.0L448.4 143.5L450.4 146.0L452.4 149.0L454.4 151.5L456.0 154.0L456.4 154.5L458.4 158.0L460.4 161.5L462.4 165.0L463.2 166.5L464.4 168.5L466.4 172.0L468.4 175.0L470.4 178.0L471.5 180.0L472.4 181.5L474.4 184.5L476.4 187.5L478.2 190.0L478.4 190.5L480.4 193.5L482.4 196.5L484.4 199.5L486.4 202.5L488.2 205.5L488.4 206.0L490.4 209.0L492.4 212.5L494.4 216.5L496.4 220.0L497.1 221.0L498.4 223.5L500.4 227.0L502.4 230.5L504.4 233.5L506.0 236.5L506.4 237.0L508.4 240.5L510.4 244.0L512.4 247.5L514.4 251.5L514.8 252.0L516.4 255.5L518.4 259.5L520.4 264.0L522.2 267.5L522.4 268.0L524.5 272.0L526.5 276.0L528.5 279.5L529.3 281.0L530.5 283.0L532.5 285.5L534.5 288.5L535.3 290.0L536.5 292.0L538.5 296.0L540.5 301.0L542.3 305.5L542.5 306.0L544.5 312.5L546.5 320.0L546.7 321.0L548.5 327.5L550.5 335.0L550.8 336.5L552.5 342.0L554.5 348.0L555.6 352.0L556.5 355.5L558.5 364.5L559.2 367.5L560.5 373.0L562.5 381.5L562.7 383.0L564.5 395.0L565.5 403.0L566.5 413.0L567.7 426.5L568.5 436.0L569.7 449.5L570.5 456.0L571.4 465.0L572.0 480.0L572.5 494.0L574.5 579.0L576.5 514.5L578.0 480.0L578.5 471.0L580.5 443.5L581.8 430.0L582.5 423.5L584.5 408.0L586.0 400.0L586.5 397.5L588.5 391.0L590.6 385.5L592.6 380.0L592.6 380.0L594.6 374.0L596.6 367.5L598.6 361.5L600.6 356.0L602.6 351.0L603.0 350.0L604.6 346.5L606.6 342.5L608.6 339.0L610.6 335.5L612.6 332.5L614.6 329.5L616.6 326.5L618.7 323.5L620.0 322.0L620.7 321.0L622.7 318.5L624.7 317.0L626.7 314.5L628.7 313.0L630.7 311.0L632.7 308.5L634.7 307.0L636.7 304.5L638.7 302.5L640.0 302.5L640.7 302.0L642.7 300.0L644.7 297.5L646.8 295.5L648.8 293.5L650.8 291.5L652.8 290.0L654.8 288.0L656.8 286.5L658.8 285.0L660.8 283.0L662.8 281.5L664.8 281.0L666.8 280.0L666.8 280.0L668.8 279.0L670.8 278.0L672.8 278.0L674.8 277.5L676.9 275.5L678.9 275.0L680.9 275.5L681.0 275.5L682.9 275.0L684.9 274.0L686.9 273.5L688.9 272.0L690.9 271.5L692.9 271.0L694.9 270.5L696.9 269.5L698.9 268.5L700.9 268.5L701.0 268.5L702.9 267.5L705.0 266.0L707.0 265.5L709.0 265.0L711.0 264.5L713.0 265.0L715.0 264.5L717.0 263.5L719.0 263.0L721.0 262.5L723.0 262.0L725.0 262.0L727.0 261.5L729.0 261.5L729.5 261.0L731.0 261.0L733.1 259.0L735.1 258.5L737.1 259.5L739.1 259.0L741.1 257.5L743.1 257.0L745.1 256.5L747.1 256.0L749.1 255.5L751.1 255.0L753.1 256.0L755.1 255.5L757.1 255.0L759.1 255.0L761.1 254.5L761.8 254.5L763.2 254.0L765.2 253.0L767.2 253.0L769.2 252.0L771.2 251.5L773.2 251.0L775.2 251.0L777.2 251.0L779.2 250.5L781.2 251.0L783.2 250.5L785.2 250.5L787.2 250.0L789.2 251.0L791.3 250.5L793.3 250.0L795.3 249.5L797.3 248.5L799.3 248.5L801.3 249.0L803.3 248.5L805.3 249.0L807.3 248.5L809.3 248.0L810.0 247.5L811.3 247.5L813.3 247.0L815.3 247.0L817.3 246.0L819.4 246.0L821.4 246.0L823.4 246.0L825.4 246.0L827.4 246.0L829.4 244.5L831.4 244.5L833.4 245.5L835.4 245.0L837.4 243.5L839.4 243.5L841.4 244.0L843.4 244.0L845.4 244.0L847.4 243.5L849.5 242.5L851.5 242.0L853.5 243.5L855.5 243.0L857.5 242.5L859.5 242.0L860.0 241.5L861.5 241.5L863.5 241.0L865.5 242.0L867.5 241.5L869.5 240.0L871.5 240.0L873.5 241.0L875.5 240.5L877.6 239.5L879.6 239.5L881.6 240.5L883.6 240.0L885.6 238.5L887.6 238.5L889.6 238.0L891.6 238.0L893.6 238.0L895.6 238.0L897.6 237.5L899.6 237.0L901.0 238.0L901.6 238.0L903.6 237.5L905.7 236.5L907.7 236.5L909.7 236.5L911.7 236.5L913.7 236.0L915.7 236.0L917.7 237.0L919.7 236.5L921.7 235.5L923.7 235.5L925.7 236.0L927.7 236.0L929.7 235.0L931.7 235.0L933.7 235.5L935.8 235.0L937.8 234.5L939.8 234.5L941.8 235.0L943.8 235.0L945.8 234.5L947.8 234.0L949.8 234.5L950.0 234.5L951.8 234.5L953.8 234.0L955.8 233.5L957.8 233.5L959.8 233.0L961.8 232.5L963.9 232.5L965.9 233.0L967.9 233.0L969.9 233.5L971.9 233.5L973.9 233.0L975.9 233.0L977.9 233.0L979.9 233.0L981.9 233.0L983.9 233.0L985.9 231.5L987.9 231.5L989.9 233.0L992.0 232.5L994.0 231.5L996.0 231.5L998.0 232.0L1000.0 232.0L1002.0 232.0L1004.0 232.0L1006.0 231.5" stroke="#008000"/>
<path d="M56.0 170.0L58.0 169.0L60.0 170.0L62.0 170.0L64.0 169.5L66.0 169.5L68.0 169.0L70.0 168.5L72.0 169.0L74.0 168.5L76.0 169.5L78.0 169.5L80.0 168.5L82.0 168.0L84.1 168.5L86.1 168.5L88.1 169.0L90.1 169.0L92.1 167.5L94.1 167.5L96.1 168.0L98.1 168.0L100.0 167.5L100.1 167.5L102.1 167.0L104.1 166.0L106.1 165.5L108.1 165.5L110.1 165.0L112.1 166.0L114.1 166.0L116.1 164.5L118.1 164.0L120.1 164.5L122.1 164.0L124.1 163.5L126.1 163.0L128.1 163.5L130.1 163.0L132.1 163.0L134.1 163.0L136.2 163.0L138.2 162.5L140.0 162.0L140.2 162.0L142.2 162.0L144.2 160.0L146.2 159.5L148.2 160.0L150.2 160.0L152.2 159.5L154.2 159.0L156.2 158.0L158.2 157.5L160.2 157.0L162.2 156.5L164.2 156.0L166.2 155.5L168.2 155.5L170.2 155.0L172.2 154.0L174.2 154.0L176.2 153.5L178.2 153.0L180.0 152.5L180.2 152.5L182.2 152.0L184.2 151.5L186.2 151.0L188.2 151.0L190.3 150.5L192.3 149.5L194.3 149.0L196.3 148.0L198.3 147.5L200.3 147.0L202.3 146.5L204.3 146.0L206.3 145.5L208.3 145.0L210.3 144.0L212.3 144.5L214.3 143.5L216.0 144.0L216.3 143.5L218.3 143.0L220.3 141.0L222.3 140.0L224.3 138.5L226.3 138.0L228.3 138.5L230.0 137.5L230.3 137.5L232.3 136.0L234.3 135.0L236.3 135.0L238.3 134.5L240.3 132.5L242.4 132.0L244.4 131.0L246.4 130.5L248.4 129.5L250.4 128.5L252.4 129.0L254.4 128.5L256.4 127.0L258.4 126.0L260.0 125.5L260.4 125.5L262.4 124.5L264.4 123.0L266.4 122.0L268.4 121.5L270.4 121.0L272.4 120.0L274.4 119.0L276.4 117.5L278.4 117.0L280.4 116.5L282.4 115.5L284.4 115.0L286.4 114.0L288.4 112.0L290.4 110.5L292.0 110.0L292.4 109.5L294.5 108.5L296.5 107.0L298.5 105.5L300.5 102.5L302.5 101.0L304.5 99.0L306.5 97.0L308.5 95.5L310.5 93.0L312.5 91.5L314.5 89.0L315.0 88.5L316.5 87.0L318.5 85.0L320.5 82.0L322.5 79.5L324.5 77.5L326.5 75.5L328.5 72.5L330.0 71.0L330.5 70.5L332.5 69.0L334.5 67.0L336.5 64.0L338.4 62.0L338.5 62.0L340.5 60.0L342.5 57.0L344.5 54.5L345.0 54.0L346.5 52.0L348.6 50.0L350.6 49.0L350.6 49.0L352.6 47.5L354.6 47.5L356.6 49.0L358.6 49.0L360.6 47.5L362.6 47.5L364.4 47.5L364.6 47.5L366.6 49.0L368.6 52.0L370.6 55.5L371.0 56.0L372.6 58.5L374.6 62.0L376.6 65.5L378.6 69.5L379.8 72.0L380.6 73.5L382.6 77.5L384.6 82.0L386.6 86.0L387.6 88.0L388.6 90.0L390.6 94.0L392.6 98.0L394.6 102.0L395.7 104.0L396.6 105.5L398.6 109.0L400.7 112.5L402.7 116.0L403.4 117.0L404.7 119.0L406.7 122.0L408.7 124.5L410.7 127.0L412.7 130.0L412.7 130.0L414.7 133.0L416.7 136.5L418.7 140.0L419.5 141.0L420.7 142.5L422.7 144.5L424.7 147.0L426.7 149.0L428.7 150.5L430.7 153.0L431.7 154.0L432.7 155.5L434.7 158.0L436.7 160.5L438.7 163.5L440.7 166.5L440.9 166.5L442.7 169.0L444.7 171.5L446.7 174.0L448.7 176.0L450.7 178.5L451.8 180.0L452.8 181.0L454.8 183.5L456.8 185.5L458.8 188.0L460.4 189.5L460.8 190.0L462.8 192.5L464.8 195.0L466.8 197.5L468.8 200.0L470.8 202.5L472.8 204.5L473.4 205.5L474.8 207.0L476.8 210.0L478.8 212.5L480.8 215.5L482.8 218.0L484.8 221.0L484.8 221.0L486.8 224.0L488.8 226.0L490.8 229.0L492.8 232.0L494.8 234.5L496.3 236.5L496.8 237.0L498.8 240.0L500.8 242.5L502.8 245.0L504.8 248.0L506.9 251.0L507.8 252.0L508.9 253.5L510.9 257.0L512.9 260.0L514.9 263.5L516.9 267.0L517.3 267.5L518.9 270.0L520.9 273.0L522.9 276.0L524.9 278.5L526.5 281.0L526.9 281.5L528.9 283.5L530.9 285.5L532.9 288.0L534.3 290.0L534.9 291.0L536.9 294.0L538.9 297.0L540.9 300.5L542.9 304.5L543.3 305.5L544.9 309.5L546.9 315.0L548.9 320.5L549.0 321.0L550.9 326.5L552.9 332.5L554.3 336.5L554.9 338.0L556.9 343.0L559.0 348.0L560.5 352.0L561.0 353.5L563.0 360.0L565.0 367.0L565.1 367.5L567.0 373.0L569.0 380.0L569.8 383.0L571.0 389.0L573.0 401.0L573.3 403.0L575.0 416.0L576.2 426.5L577.0 433.5L578.8 449.5L579.0 451.0L581.0 464.5L581.0 465.0L581.8 480.0L583.0 504.5L585.0 551.0L587.0 505.0L589.0 470.0L589.0 470.0L591.0 445.5L593.0 427.0L594.0 420.0L595.0 414.0L597.0 404.0L599.0 395.5L600.6 390.0L601.0 388.5L603.0 382.0L605.0 375.5L607.0 370.0L609.0 364.5L611.0 360.0L612.0 358.0L613.0 356.0L615.0 352.0L617.0 349.0L619.0 345.5L621.1 342.5L623.1 339.5L625.1 337.0L627.1 334.0L629.1 331.5L630.0 330.0L631.1 328.5L633.1 325.5L635.1 322.5L637.1 319.5L639.1 317.0L640.5 315.0L641.1 314.5L643.1 312.0L645.1 309.5L647.1 307.0L649.1 305.5L651.1 303.5L653.1 301.0L655.1 299.0L657.1 298.5L659.1 297.0L660.7 295.5L661.1 295.0L663.1 294.0L665.1 291.5L667.1 290.0L669.1 289.0L671.1 287.5L673.1 286.5L675.1 285.5L677.1 284.0L679.1 283.0L681.0 282.5L681.1 282.5L683.1 281.5L685.1 280.5L687.1 280.0L689.1 279.0L691.2 278.5L693.2 279.0L695.2 278.5L697.2 277.0L699.2 276.0L701.0 276.5L701.2 276.5L703.2 275.5L705.2 275.0L707.2 274.5L709.2 272.5L711.2 272.0L713.2 271.5L715.2 271.0L717.2 270.5L719.2 269.5L721.2 269.0L722.0 268.5L723.2 266.5L725.2 263.0L728.5 271.0L730.5 270.0L732.5 268.0L734.5 267.0L736.5 267.5L738.6 266.5L740.6 265.5L742.6 264.5L744.6 263.5L746.6 263.0L748.6 262.5L750.6 262.0L752.6 261.0L754.6 260.0L756.7 258.5L757.8 258.0L758.7 258.0L760.7 257.0L762.7 256.5L764.7 256.0L766.7 255.5L768.7 256.0L770.7 256.0L772.7 255.0L774.0 255.0L774.8 254.5L776.8 254.0L778.8 253.5L780.8 254.0L782.8 253.5L784.8 251.5L786.8 251.5L788.8 251.5L790.8 251.0L792.8 251.0L794.9 251.0L796.9 251.0L798.9 251.0L800.9 250.0L802.9 249.5L804.9 249.5L806.9 249.0L808.9 248.5L810.0 248.5L810.9 248.5L813.0 248.0L815.0 247.5L817.0 247.5L819.0 247.0L821.0 247.0L823.0 246.5L825.0 245.0L827.0 244.5L829.0 245.0L831.1 244.5L833.1 243.5L835.1 243.0L837.1 242.0L839.1 241.5L841.1 241.5L843.1 241.0L845.1 241.0L847.1 240.5L849.2 240.5L850.0 240.5L851.2 240.0L853.2 239.5L855.2 239.0L857.2 239.5L859.2 239.0L861.2 238.0L863.2 237.5L865.2 237.0L867.2 236.5L869.3 237.0L871.3 236.5L873.3 235.5L875.3 235.5L877.3 235.5L879.3 235.5L881.3 235.0L883.3 235.0L885.3 234.5L887.4 234.5L889.4 233.5L891.4 233.5L893.4 234.0L895.4 233.5L897.4 233.0L899.4 232.5L900.0 232.0L901.4 232.0L903.4 231.5L905.5 230.5L907.5 230.5L909.5 231.0L911.5 231.0L913.5 229.0L915.5 229.0L917.5 228.5L919.5 228.5L921.5 229.5L923.6 229.0L925.6 228.0L927.6 228.0L929.6 228.5L931.6 228.0L933.6 227.5L935.6 227.0L937.6 226.5L939.6 226.5L941.7 225.0L943.7 225.0L945.7 224.5L947.7 224.5L949.7 224.5L951.7 224.0L953.7 224.0L955.7 224.0L957.7 224.0L959.8 224.0L961.8 223.0L961.8 223.0L963.8 223.0L965.8 222.0L967.8 222.0L969.8 223.0L971.8 223.0L973.8 221.0L975.8 221.0L977.8 221.5L979.9 221.5L981.9 220.5L983.9 220.5L985.9 220.5L987.9 220.5L989.9 220.0L991.9 219.5L993.9 220.0L995.9 219.5L998.0 219.0L1000.0 218.5L1002.0 219.0L1004.0 218.5L1006.0 218.0" stroke="#000000"/>
<path d="M56.0 168.0L58.0 167.5L60.0 168.0L62.0 168.0L64.0 167.5L66.0 167.5L68.0 166.5L70.0 166.5L72.0 166.5L74.1 166.0L76.1 167.5L78.1 167.0L80.1 165.5L82.1 165.5L84.1 165.5L86.1 165.0L88.1 165.0L90.1 164.5L92.1 165.0L94.1 164.5L96.1 165.5L98.1 165.5L100.0 164.0L100.1 164.0L102.1 164.0L104.1 164.5L106.1 164.5L108.2 163.0L110.2 163.0L112.2 163.0L114.2 162.5L116.2 163.0L118.2 163.0L120.2 162.0L122.2 161.5L124.2 162.5L126.2 162.0L128.2 161.5L130.2 161.0L132.2 161.0L134.2 161.0L136.2 161.0L138.2 161.0L140.0 160.0L140.2 160.0L142.2 160.0L144.3 158.5L146.3 158.5L148.3 158.0L150.3 158.0L152.3 158.5L154.3 158.0L156.3 157.0L158.3 156.5L160.3 157.0L162.3 156.5L164.3 157.0L166.3 157.0L168.3 156.5L170.3 156.0L172.3 155.0L174.3 155.0L176.3 154.5L178.4 154.0L180.0 154.5L180.4 154.5L182.4 154.0L184.4 152.5L186.4 152.0L188.4 152.5L190.4 152.0L192.4 151.0L194.4 150.5L196.4 150.5L198.4 150.5L200.4 151.0L202.4 150.5L204.4 149.0L206.4 148.5L208.4 148.5L210.4 148.0L212.4 147.5L214.5 147.0L216.0 148.5L216.5 148.5L218.5 148.0L220.5 146.0L222.5 146.0L224.5 145.5L226.5 145.0L228.5 144.5L230.0 144.5L230.5 144.0L232.5 145.0L234.5 144.5L236.5 143.5L238.5 142.5L240.5 141.5L242.5 140.5L244.5 140.0L246.5 139.0L248.6 139.5L250.6 138.5L252.6 137.0L254.6 136.5L256.6 135.5L258.6 134.5L260.0 134.0L260.6 133.5L262.6 133.0L264.6 133.0L266.6 132.0L268.6 131.5L270.6 130.5L272.6 129.5L274.6 129.0L276.6 127.5L278.6 126.5L280.6 127.0L282.7 126.0L284.7 125.0L286.7 124.0L288.7 122.5L290.7 121.5L292.0 120.5L292.7 120.5L294.7 119.0L296.7 118.5L298.7 117.0L300.7 116.5L302.7 115.0L304.7 112.5L306.7 111.0L308.7 110.0L310.7 108.5L312.7 107.5L314.7 106.5L316.8 104.5L318.8 103.0L320.0 102.5L320.8 102.0L322.8 100.5L324.8 99.0L326.8 97.5L328.8 96.0L330.8 94.5L332.8 93.0L334.8 91.5L336.8 90.0L338.4 88.5L338.8 88.0L340.8 85.5L342.8 83.5L344.8 80.5L346.8 78.5L348.8 76.5L350.6 74.5L350.8 74.0L352.9 71.5L354.9 69.0L356.9 66.0L358.9 63.5L360.9 61.5L362.0 60.5L362.9 59.5L364.9 57.5L366.9 55.5L368.9 52.5L370.9 51.0L372.0 51.5L372.9 51.0L374.9 50.0L376.9 48.0L378.9 47.5L379.0 47.5L380.9 47.5L382.9 47.5L384.9 48.5L387.0 48.5L389.0 48.5L390.0 48.5L391.0 49.0L393.0 51.0L395.0 55.0L395.6 56.0L397.0 58.5L399.0 62.5L401.0 67.0L403.0 71.5L403.1 72.0L405.0 76.5L407.0 81.5L409.0 86.5L409.7 88.0L411.0 91.0L413.0 96.0L415.0 100.5L416.6 104.0L417.0 105.0L419.0 109.0L421.1 113.0L423.1 117.0L423.2 117.0L425.1 120.0L427.1 123.5L429.1 126.5L431.1 130.0L431.1 130.0L433.1 134.0L435.1 138.0L436.9 141.0L437.1 141.5L439.1 144.0L441.1 146.5L443.1 149.0L445.1 151.0L447.1 154.0L447.2 154.0L449.1 157.0L451.1 160.0L453.1 163.5L455.1 166.5L455.1 166.5L457.2 169.5L459.2 172.5L461.2 175.5L463.2 178.5L464.2 180.0L465.2 181.5L467.2 184.0L469.2 186.5L471.2 189.5L471.6 190.0L473.2 192.5L475.2 195.0L477.2 197.5L479.2 200.5L481.2 203.5L482.6 205.5L483.2 206.5L485.2 209.5L487.2 212.5L489.2 216.0L491.3 219.0L492.4 221.0L493.3 222.5L495.3 225.5L497.3 228.5L499.3 232.0L501.3 235.0L502.1 236.5L503.3 238.0L505.3 241.5L507.3 244.5L509.3 247.5L511.3 251.0L511.9 252.0L513.3 254.5L515.3 258.5L517.3 262.5L519.3 266.5L519.9 267.5L521.3 270.0L523.3 273.5L525.4 277.0L527.4 280.5L527.8 281.0L529.4 283.0L531.4 286.0L533.4 288.5L534.4 290.0L535.4 291.5L537.4 295.5L539.4 299.5L541.4 304.0L542.1 305.5L543.4 309.5L545.4 316.0L546.9 321.0L547.4 322.5L549.4 329.5L551.4 336.5L551.4 336.5L553.4 342.5L555.4 348.0L556.7 352.0L557.4 354.5L559.4 362.5L560.6 367.5L561.5 370.5L563.5 378.0L564.6 383.0L565.5 388.0L567.5 402.5L567.6 403.0L569.5 421.0L570.0 426.5L571.5 442.0L572.2 449.5L573.5 458.5L574.1 465.0L574.8 480.0L575.5 497.5L577.5 555.0L579.5 500.5L581.0 470.0L581.5 462.0L583.5 435.0L585.0 420.0L585.5 415.5L587.5 399.5L589.5 387.5L590.0 385.0L591.5 377.5L593.6 369.5L595.6 362.5L597.6 356.0L598.0 355.0L599.6 350.5L601.6 345.5L603.6 341.0L605.6 336.5L607.6 332.5L609.6 329.0L611.6 325.5L612.0 325.0L613.6 322.5L615.6 319.5L617.6 316.5L619.6 314.0L621.7 311.5L623.7 309.0L625.7 306.5L627.7 304.0L629.7 302.0L631.7 300.0L632.4 299.0L633.7 297.5L635.7 295.5L637.7 294.0L639.7 292.0L641.7 289.5L643.7 288.0L645.7 287.0L647.7 285.0L649.7 283.0L651.8 281.5L652.6 281.0L653.8 280.5L655.8 279.0L657.8 278.0L659.8 277.0L661.8 275.0L663.8 274.0L665.8 273.0L667.8 271.5L669.8 270.0L671.8 268.5L673.8 267.5L674.9 267.0L675.8 266.5L677.8 264.5L679.9 263.0L681.9 262.0L683.9 261.0L685.9 260.0L687.9 258.5L689.0 258.5L689.9 258.5L691.9 257.0L693.9 256.0L695.9 255.0L697.9 254.5L699.9 253.5L701.9 251.5L703.9 250.5L705.0 249.5L705.9 249.5L708.0 248.5L710.0 249.0L712.0 248.0L714.0 247.5L716.0 247.0L718.0 245.5L720.0 245.0L722.0 245.0L724.0 242.5L725.4 242.0L726.0 241.5L728.0 241.5L730.0 240.5L732.0 239.0L734.0 238.0L736.0 237.0L738.1 235.5L740.1 233.0L741.6 231.5L742.1 231.5L744.1 230.0L746.1 228.5L748.1 227.0L750.1 225.0L752.1 224.0L753.8 222.0L754.1 222.0L756.1 219.5L758.1 217.0L760.1 214.5L761.8 212.0L762.1 211.5L764.1 207.0L766.2 202.0L768.0 196.0L768.2 195.5L770.2 186.5L772.2 175.5L773.0 170.0L774.2 161.0L776.2 142.0L777.0 135.0L778.2 125.0L780.2 109.0L782.2 136.0L783.0 150.0L784.3 179.5L785.0 200.0L786.3 245.5L787.0 269.0L788.3 301.5L790.0 340.0L790.4 350.0L792.4 412.0L794.4 368.0L795.0 360.0L796.4 347.0L798.4 334.0L799.0 330.0L800.5 318.0L802.5 303.0L803.0 300.0L804.5 293.0L806.5 285.0L808.0 281.0L808.5 280.0L810.5 276.0L812.6 273.0L814.6 271.0L816.2 268.5L816.6 268.0L818.6 266.0L820.6 264.0L822.6 262.5L824.6 261.5L826.3 260.5L826.7 260.0L828.7 259.5L830.7 258.5L832.7 257.0L834.7 256.0L836.7 255.0L838.7 254.5L840.8 254.0L842.8 253.0L844.8 254.0L846.8 253.0L848.8 252.0L850.6 251.0L850.8 251.0L852.9 249.0L854.9 248.0L856.9 248.5L858.9 247.5L860.9 246.0L862.9 245.0L864.9 243.0L867.0 242.0L869.0 241.0L871.0 240.0L873.0 240.5L875.0 239.5L877.0 238.5L879.0 238.0L881.0 237.0L881.1 237.0L883.1 236.0L885.1 236.0L887.1 235.5L889.1 234.0L891.1 233.5L893.2 233.5L895.2 233.0L897.2 231.5L899.2 231.0L901.2 231.0L903.2 230.5L905.2 230.0L907.3 229.5L909.3 229.5L911.3 229.0L913.0 229.0L913.3 229.0L915.3 228.5L917.3 227.0L919.4 226.5L921.4 226.5L923.4 226.5L925.4 226.0L927.4 225.5L929.4 225.5L931.4 225.5L933.5 225.5L935.5 225.5L937.5 225.5L939.5 225.0L941.5 224.0L943.5 224.0L945.5 224.5L947.6 224.5L949.6 224.0L951.6 224.0L953.6 222.5L955.6 222.0L957.6 222.0L959.7 221.5L960.0 221.5L961.7 221.5L963.7 221.0L965.7 221.5L967.7 221.5L969.7 220.0L971.7 219.5L973.8 219.5L975.8 219.0L977.8 219.5L979.8 219.5L981.8 218.5L983.8 218.0L985.8 218.5L987.9 218.5L989.9 219.0L991.9 218.5L993.9 218.0L995.9 217.5L997.9 217.5L1000.0 217.0L1002.0 215.5L1004.0 215.5L1006.0 216.0" stroke="#008080"/>
<path d="M56.0 162.5L58.0 161.5L60.0 161.5L62.0 161.5L64.0 161.5L66.0 161.5L68.0 161.0L70.0 161.0L72.0 162.0L74.0 161.5L76.1 160.0L78.1 160.0L80.1 161.0L82.1 160.5L84.1 160.5L86.1 160.5L88.1 159.0L90.1 159.0L92.1 159.0L94.1 159.0L96.1 159.0L98.1 159.0L100.0 158.5L100.1 158.5L102.1 158.5L104.1 157.5L106.1 157.5L108.1 158.5L110.1 158.0L112.1 157.0L114.1 157.0L116.2 158.0L118.2 157.5L120.2 156.0L122.2 156.0L124.2 156.5L126.2 156.0L128.2 156.5L130.2 156.0L132.2 155.5L134.2 155.0L136.2 154.5L138.2 154.0L140.0 154.5L140.2 154.5L142.2 154.0L144.2 153.5L146.2 153.5L148.2 153.0L150.2 152.5L152.2 154.0L154.2 153.5L156.3 153.5L158.3 153.0L160.3 151.5L162.3 151.5L164.3 151.5L166.3 151.0L168.3 150.5L170.3 150.0L172.3 150.5L174.3 150.5L176.3 149.5L178.3 149.0L180.0 149.5L180.3 149.5L182.3 149.0L184.3 147.5L186.3 147.5L188.3 148.0L190.3 147.5L192.3 147.0L194.3 146.5L196.4 145.5L198.4 145.0L200.4 145.0L202.4 144.5L204.4 144.5L206.4 144.0L208.4 145.0L210.4 144.5L212.4 142.5L214.4 142.5L216.0 142.0L216.4 142.0L218.4 141.5L220.4 141.0L222.4 140.5L224.4 141.5L226.4 141.5L228.4 140.5L230.0 140.0L230.4 140.0L232.4 139.0L234.4 138.5L236.5 138.5L238.5 138.0L240.5 136.5L242.5 136.0L244.5 136.5L246.5 136.0L248.5 134.5L250.5 133.5L252.5 133.0L254.5 132.0L256.5 131.5L258.5 131.0L260.0 131.5L260.5 131.0L262.5 130.5L264.5 130.0L266.5 129.5L268.5 129.5L270.5 128.5L272.5 126.5L274.5 126.0L276.6 125.5L278.6 124.5L280.6 124.5L282.6 124.0L284.6 123.5L286.6 123.0L288.6 122.5L290.6 121.5L292.0 121.0L292.6 121.0L294.6 120.0L296.6 119.5L298.6 118.5L300.6 118.5L302.6 117.5L304.6 117.0L306.6 116.0L308.6 114.5L310.6 113.5L312.6 112.5L314.6 111.5L316.7 111.5L318.7 110.5L320.0 110.0L320.7 109.5L322.7 108.5L324.7 108.0L326.7 107.5L328.7 107.5L330.7 106.5L332.7 105.0L334.7 104.5L336.7 103.5L338.4 102.5L338.7 102.5L340.7 101.5L342.7 100.5L344.7 99.0L346.7 97.5L348.7 95.5L350.7 94.5L352.7 94.0L354.8 92.5L356.8 90.5L358.8 89.0L360.8 88.0L361.0 88.0L362.8 86.5L364.8 84.5L366.8 83.0L368.8 82.0L370.8 80.5L371.8 79.5L372.8 78.0L374.8 76.0L376.8 75.0L378.8 73.5L380.8 73.0L382.4 71.5L382.8 71.0L384.8 68.5L386.8 67.0L388.8 65.5L390.8 64.0L390.8 64.0L392.8 61.5L394.9 59.5L396.9 58.0L398.9 56.5L399.3 56.0L400.9 54.5L402.9 52.5L404.9 50.5L406.9 48.5L407.8 48.0L408.9 48.5L410.9 47.0L412.0 46.5L412.9 46.5L414.9 46.5L416.9 45.5L418.9 45.5L420.9 45.5L422.9 45.5L423.7 45.5L424.9 46.0L426.9 47.5L428.9 50.0L430.9 52.0L432.9 54.5L433.0 54.5L435.0 56.5L437.0 57.5L439.0 59.5L441.0 61.5L441.7 62.5L443.0 63.5L445.0 66.0L447.0 68.0L449.0 70.5L450.0 72.0L451.0 73.5L453.0 77.0L455.0 81.5L457.0 85.5L459.0 89.0L459.7 90.0L461.0 92.0L463.0 95.0L465.0 97.0L467.0 99.5L469.0 101.0L471.0 103.5L473.0 105.5L475.1 107.5L477.1 110.0L479.1 112.0L480.0 113.5L481.1 114.5L483.1 117.0L485.1 119.0L487.1 121.5L489.1 124.0L491.1 126.5L493.1 129.5L495.1 132.0L497.1 134.0L499.1 137.0L501.1 139.5L503.1 142.0L505.1 144.0L507.1 146.5L509.1 149.5L510.0 150.5L511.1 151.5L513.1 154.0L515.2 156.0L517.2 158.0L519.2 160.5L521.2 162.5L523.2 165.0L525.2 167.0L527.2 169.5L529.2 171.0L531.2 173.5L533.2 175.5L535.2 177.5L537.2 180.5L539.2 182.5L541.2 184.5L543.2 187.0L545.2 189.0L546.0 190.0L547.2 191.5L549.2 193.5L551.2 196.0L553.2 199.0L555.3 201.5L557.3 203.5L559.3 206.0L560.0 207.0L561.3 208.5L563.3 211.0L565.3 213.0L567.3 215.5L569.3 217.5L571.3 219.5L573.3 222.5L575.3 225.0L577.3 227.0L579.3 229.5L580.0 230.0L581.3 231.5L583.3 234.0L585.3 236.5L587.3 239.0L589.3 241.0L591.3 243.5L593.3 245.5L595.4 247.5L597.0 249.5L597.4 250.0L599.4 252.0L601.4 255.0L603.4 257.0L605.4 259.5L607.4 261.5L609.4 263.5L611.4 265.5L612.0 266.0L613.4 267.5L615.4 269.5L617.4 271.0L619.4 273.5L621.4 275.5L623.4 278.5L625.0 281.0L625.4 281.5L627.4 285.5L629.4 289.5L631.4 294.5L633.4 300.0L635.0 305.0L635.5 306.5L637.5 313.5L639.5 321.5L641.5 331.0L643.5 342.5L644.6 350.0L645.5 357.0L647.5 378.0L649.5 403.5L650.0 410.0L651.5 431.0L653.5 463.0L655.5 400.0L655.9 378.0L656.8 330.0L658.4 283.5L658.5 280.0L660.8 223.0L662.8 228.0L664.3 236.0L664.9 244.0L666.6 281.0L666.9 285.5L669.0 306.5L670.0 316.0L671.0 326.5L673.1 345.0L673.6 348.5L675.1 356.5L677.2 363.5L679.2 371.0L681.0 380.0L681.3 382.0L683.3 402.5L685.4 428.5L685.5 430.0L687.4 450.5L689.4 480.0L689.5 481.0L691.5 555.0L693.5 509.0L694.0 500.0L695.5 478.0L697.5 454.5L698.0 450.0L699.5 436.5L701.5 421.5L703.5 408.5L705.0 400.0L705.5 397.5L707.5 387.5L709.5 379.0L711.5 371.0L713.5 364.5L715.0 360.0L715.5 358.5L717.5 353.5L719.5 348.5L721.5 344.5L723.6 340.5L725.6 337.0L727.6 333.5L729.5 330.0L729.6 330.0L731.6 326.5L733.6 323.5L735.6 321.0L737.6 318.5L739.6 315.5L741.6 313.0L741.6 313.0L743.6 310.5L745.6 308.0L747.6 305.5L749.6 303.5L751.6 301.5L753.6 298.5L755.6 296.5L757.6 295.0L757.8 294.5L759.6 293.0L761.6 291.5L763.6 290.0L765.6 289.5L767.6 288.0L769.6 287.0L771.6 286.0L773.6 285.0L774.0 284.5L775.6 283.5L777.6 281.5L779.6 280.5L781.6 279.0L783.6 278.0L785.6 278.0L787.7 277.0L789.7 275.5L790.0 275.5L791.7 274.5L793.7 272.5L795.7 272.0L797.7 271.5L799.7 270.5L801.7 269.5L803.7 269.0L805.7 269.0L807.7 268.5L809.7 266.5L810.0 266.0L811.7 265.5L813.7 264.5L815.7 264.0L817.7 263.0L819.7 262.5L821.7 262.5L823.7 261.5L825.7 261.5L827.7 261.0L829.7 259.0L831.7 258.0L833.7 257.0L835.7 256.5L837.7 256.5L839.7 256.0L841.7 254.5L843.7 253.5L845.7 254.5L847.7 253.5L849.8 252.5L850.0 252.5L851.8 251.5L853.8 250.5L855.8 249.5L857.8 249.5L859.8 248.5L861.8 247.5L863.8 247.0L865.8 247.0L867.8 246.5L869.8 245.5L871.8 245.0L873.8 243.5L875.8 243.0L877.8 242.5L879.8 241.5L881.8 240.5L883.8 239.5L885.8 238.0L887.8 237.0L889.8 237.5L890.0 237.5L891.8 236.5L893.8 235.0L895.8 234.0L897.8 233.5L899.8 232.5L901.8 231.5L903.8 230.5L905.8 229.5L907.8 228.5L909.8 227.5L911.9 226.0L913.9 225.5L915.9 224.5L917.9 223.0L919.9 221.5L921.4 220.0L921.9 219.5L923.9 218.0L925.9 216.0L927.9 214.0L929.9 213.5L931.9 211.5L933.9 209.0L935.9 207.5L937.6 205.5L937.9 205.5L939.9 203.5L941.9 201.5L943.9 200.0L945.9 199.0L947.9 197.0L949.7 196.5L949.9 196.5L951.9 195.0L953.9 193.0L955.9 191.5L957.9 190.0L958.4 190.0L959.9 189.0L961.9 187.5L963.9 186.5L965.9 184.0L967.9 183.0L969.9 182.5L971.9 181.0L973.9 179.5L976.0 178.0L976.8 177.0L978.0 176.0L980.0 173.5L982.0 171.0L984.0 168.5L986.0 165.5L987.4 163.5L988.0 163.0L990.0 159.5L992.0 156.5L994.0 152.5L996.0 149.0L998.0 145.0L998.0 145.0L1000.0 141.0L1002.0 137.0L1004.0 132.5L1006.0 128.0" stroke="#800080"/>
<path d="M56.0 173.0L58.0 172.0L60.0 172.5L62.0 172.0L64.0 173.0L66.0 173.0L68.0 172.5L70.0 172.5L72.0 172.5L74.0 172.5L76.0 171.5L78.0 171.5L80.0 171.0L82.1 171.0L84.1 172.0L86.1 171.5L88.1 171.5L90.1 171.0L92.1 171.5L94.1 171.0L96.1 170.5L98.1 170.0L100.0 170.5L100.1 170.5L102.1 170.0L104.1 169.5L106.1 169.5L108.1 168.5L110.1 168.5L112.1 169.5L114.1 169.5L116.1 169.0L118.1 168.5L120.1 168.0L122.1 168.0L124.1 168.0L126.1 168.0L128.1 167.5L130.1 167.5L132.1 168.0L134.2 167.5L136.2 166.0L138.2 165.5L140.0 166.0L140.2 166.0L142.2 166.0L144.2 165.5L146.2 165.5L148.2 165.5L150.2 165.0L152.2 165.0L154.2 165.0L156.2 163.5L158.2 163.5L160.2 163.0L162.2 163.0L164.2 161.5L166.2 161.5L168.2 162.0L170.2 161.5L172.2 161.0L174.2 160.5L176.2 160.5L178.2 160.0L180.0 159.5L180.2 159.5L182.2 159.0L184.3 158.5L186.3 158.0L188.3 157.0L190.3 156.5L192.3 157.0L194.3 156.5L196.3 156.0L198.3 155.5L200.3 155.0L202.3 155.0L204.3 153.5L206.3 153.0L208.3 152.5L210.3 152.0L212.3 153.0L214.3 152.5L216.0 152.0L216.3 152.0L218.3 151.5L220.3 150.5L222.3 150.0L224.3 149.0L226.3 148.5L228.3 149.5L230.0 149.0L230.3 148.5L232.3 148.0L234.4 147.0L236.4 147.0L238.4 146.0L240.4 144.5L242.4 143.5L244.4 143.0L246.4 142.5L248.4 142.0L250.4 141.5L252.4 140.5L254.4 140.0L256.4 139.0L258.4 138.0L260.0 139.0L260.4 138.5L262.4 138.0L264.4 136.5L266.4 136.0L268.4 134.5L270.4 134.0L272.4 133.5L274.4 133.0L276.4 132.5L278.4 132.0L280.4 131.0L282.4 130.0L284.4 130.0L286.5 129.0L288.5 128.0L290.5 127.0L292.0 126.5L292.5 126.5L294.5 125.0L296.5 123.5L298.5 122.5L300.5 120.5L302.5 119.0L304.5 118.5L306.5 117.0L308.5 115.0L310.5 113.5L312.5 112.0L314.5 110.5L316.5 109.0L318.5 107.5L320.0 106.5L320.5 106.0L322.5 104.5L324.5 103.0L326.5 102.0L328.5 100.5L330.5 99.0L332.5 97.5L334.5 96.0L336.6 94.5L338.4 92.5L338.6 92.5L340.6 91.0L342.6 89.0L344.6 87.5L346.6 85.5L348.6 83.0L350.6 80.5L350.6 80.5L352.6 77.5L354.6 74.5L356.6 71.0L358.6 67.5L360.6 64.0L361.0 63.5L362.6 60.5L364.6 56.5L366.6 53.0L367.5 52.0L368.6 50.0L370.6 48.5L370.7 48.5L372.6 47.5L374.6 47.5L376.6 48.0L378.6 48.0L380.6 49.0L382.6 49.0L384.6 48.5L385.0 48.5L386.6 49.5L388.7 52.5L390.4 56.0L390.7 56.5L392.7 60.5L394.7 65.0L396.7 70.0L397.6 72.0L398.7 74.5L400.7 79.5L402.7 85.0L403.9 88.0L404.7 90.0L406.7 95.0L408.7 99.5L410.6 104.0L410.7 104.5L412.7 108.5L414.7 113.0L416.7 116.5L416.9 117.0L418.7 120.5L420.7 123.5L422.7 127.0L424.4 130.0L424.7 130.5L426.7 134.5L428.7 138.5L430.0 141.0L430.7 142.0L432.7 145.0L434.7 147.5L436.7 150.0L438.8 152.5L439.9 154.0L440.8 155.5L442.8 158.5L444.8 162.0L446.8 165.5L447.5 166.5L448.8 168.5L450.8 171.5L452.8 175.0L454.8 178.0L456.3 180.0L456.8 180.5L458.8 183.5L460.8 186.5L462.8 189.0L463.3 190.0L464.8 192.0L466.8 195.0L468.8 198.0L470.8 201.0L472.8 204.0L473.9 205.5L474.8 207.0L476.8 210.0L478.8 213.5L480.8 217.0L482.8 220.5L483.3 221.0L484.8 223.5L486.8 227.0L488.9 230.0L490.9 233.5L492.6 236.5L492.9 237.0L494.9 240.0L496.9 243.5L498.9 246.5L500.9 250.0L502.0 252.0L502.9 253.5L504.9 257.5L506.9 261.5L508.9 266.0L509.7 267.5L510.9 269.5L512.9 273.5L514.9 277.0L516.9 280.5L517.3 281.0L518.9 283.5L520.9 286.0L522.9 289.0L523.6 290.0L524.9 292.5L526.9 296.0L528.9 300.5L530.9 305.5L531.0 305.5L532.9 311.5L534.9 318.5L535.7 321.0L536.9 325.5L538.9 333.0L540.0 336.5L541.0 339.5L543.0 345.5L545.0 352.0L545.0 352.0L547.0 359.5L548.8 367.5L549.0 368.0L551.0 376.0L552.6 383.0L553.0 385.0L555.0 399.0L555.5 403.0L557.0 418.0L557.8 426.5L559.0 439.5L560.0 449.5L561.0 457.5L561.8 465.0L562.4 480.0L563.0 496.0L565.0 565.0L567.0 502.0L568.0 480.0L569.0 464.0L571.0 440.0L572.0 430.0L573.0 420.0L575.0 403.0L577.0 390.0L577.0 390.0L579.0 379.5L581.1 370.5L583.1 363.0L584.0 360.0L585.1 356.5L587.1 350.5L589.1 345.0L591.1 340.0L593.0 336.0L593.1 336.0L595.1 332.0L597.1 328.5L599.1 325.5L601.1 322.5L603.1 319.5L605.1 317.0L607.1 314.5L608.0 313.0L609.1 311.5L611.1 308.5L613.2 306.0L615.2 303.5L617.2 301.0L619.2 298.5L621.2 296.0L623.2 294.0L624.3 292.5L625.2 292.0L627.2 290.0L629.2 288.5L631.2 287.0L633.2 286.5L635.2 285.0L637.2 284.0L639.2 282.5L640.5 281.5L641.2 281.0L643.2 279.5L645.3 277.0L647.3 275.5L649.3 275.5L651.3 274.0L653.3 271.5L655.3 270.0L657.3 269.0L658.7 268.5L659.3 268.0L661.3 267.5L663.3 266.5L665.3 265.0L667.3 264.0L669.3 263.0L671.3 262.0L673.3 261.5L675.0 260.5L675.4 260.5L677.4 259.0L679.4 258.5L681.4 259.0L683.4 258.0L685.4 256.5L687.4 255.5L689.0 255.5L689.4 255.5L691.4 254.5L693.4 254.0L695.4 253.5L697.4 253.0L699.4 252.5L701.4 252.5L703.4 252.0L705.4 251.5L707.5 251.0L709.5 250.0L711.5 249.5L713.0 249.0L713.5 249.0L715.5 248.0L717.5 247.0L719.5 246.5L721.5 245.5L723.5 245.0L725.5 245.0L727.5 244.5L729.5 242.5L731.5 242.0L733.5 242.0L735.5 241.0L737.5 241.0L739.6 240.5L741.6 240.0L743.6 239.0L745.6 238.5L747.6 238.0L749.6 236.5L749.7 236.5L751.6 236.0L753.6 235.0L755.6 234.5L757.6 232.5L759.6 232.0L761.6 232.0L763.6 231.5L765.6 230.5L767.6 229.5L769.6 229.5L771.7 229.0L772.0 229.0L773.7 228.5L775.7 227.5L777.7 226.0L779.7 225.5L781.7 226.5L783.7 226.0L785.7 225.0L787.7 224.5L789.7 224.5L791.7 224.0L793.7 223.5L795.7 223.0L797.7 221.0L799.7 220.5L800.0 221.0L801.8 220.0L803.8 219.0L805.8 217.5L807.8 216.5L809.8 216.0L811.8 215.0L812.4 214.5L813.8 213.5L815.8 212.5L817.8 212.5L819.8 211.5L821.8 209.5L823.8 208.5L824.8 207.5L825.8 207.0L827.8 205.5L829.8 205.0L831.8 203.5L833.9 202.0L835.9 200.0L837.0 198.0L837.9 197.5L839.9 195.5L841.9 194.0L843.9 191.5L845.9 189.0L847.9 186.5L849.5 184.0L849.9 183.5L851.9 180.5L853.9 177.0L855.9 173.5L857.9 169.5L859.4 166.5L859.9 165.5L861.9 161.0L863.9 155.5L866.0 149.5L866.8 147.0L868.0 142.5L870.0 134.0L871.8 124.5L872.0 123.5L874.0 110.0L875.5 100.0L876.0 97.0L878.0 87.0L880.0 79.0L882.0 92.0L884.0 105.0L884.1 105.5L886.1 119.0L888.1 133.5L889.0 140.5L890.2 150.5L892.2 169.5L894.2 190.0L896.2 212.5L897.0 221.0L898.3 236.5L900.3 263.0L902.3 291.0L903.0 300.0L904.4 318.5L906.4 347.0L908.0 370.0L908.4 376.5L910.5 409.0L912.5 443.0L914.5 410.5L916.0 390.0L916.6 382.5L918.6 357.0L920.6 338.0L921.0 335.5L922.7 329.5L924.7 323.0L925.4 320.0L926.7 307.0L928.8 281.5L929.5 277.0L930.8 273.5L932.8 269.0L934.9 266.0L936.9 264.0L938.9 262.0L939.6 261.0L941.0 260.0L943.0 258.0L945.0 256.5L947.1 255.0L949.1 253.5L949.7 253.5L951.1 252.5L953.2 251.5L955.2 250.5L957.2 250.0L959.2 249.0L961.3 249.0L961.8 248.5L963.3 248.0L965.3 246.5L967.4 246.0L969.4 246.5L971.4 246.0L973.5 245.0L975.5 244.5L977.5 244.0L979.6 243.5L981.6 242.5L982.0 242.5L983.6 242.0L985.7 241.5L987.7 241.5L989.7 241.0L991.8 240.5L993.8 241.0L995.8 240.5L997.9 239.5L999.9 239.0L1001.9 238.5L1004.0 238.0L1006.0 238.0" stroke="#800000"/>
<path d="M56.0 164.5L58.0 164.5L60.0 164.5L62.0 164.5L64.0 164.5L66.0 164.5L68.0 163.5L70.0 163.5L72.0 163.5L74.0 163.5L76.0 162.5L78.0 162.5L80.0 162.5L82.0 162.5L84.1 163.0L86.1 163.0L88.1 162.5L90.1 162.0L92.1 161.5L94.1 161.5L96.1 161.5L98.1 161.5L100.0 160.5L100.1 160.5L102.1 160.5L104.1 159.5L106.1 159.5L108.1 159.0L110.1 158.5L112.1 159.5L114.1 159.5L116.1 159.0L118.1 158.5L120.1 157.5L122.1 157.5L124.1 158.5L126.1 158.0L128.1 157.0L130.1 157.0L132.1 156.5L134.1 156.5L136.1 156.5L138.2 156.5L140.0 156.5L140.2 156.5L142.2 156.0L144.2 155.5L146.2 155.0L148.2 155.5L150.2 155.5L152.2 155.0L154.2 155.0L156.2 154.5L158.2 154.5L160.2 153.0L162.2 153.0L164.2 154.0L166.2 153.5L168.2 152.0L170.2 152.0L172.2 151.5L174.2 151.5L176.2 152.0L178.2 151.5L180.0 150.5L180.2 150.5L182.2 150.0L184.2 150.5L186.2 150.0L188.2 149.0L190.2 148.5L192.3 149.5L194.3 149.0L196.3 147.5L198.3 147.5L200.3 148.5L202.3 148.0L204.3 147.0L206.3 147.0L208.3 146.5L210.3 146.5L212.3 146.0L214.3 145.5L216.0 146.0L216.3 145.5L218.3 145.5L220.3 144.0L222.3 143.5L224.3 144.0L226.3 143.5L228.3 142.5L230.0 142.5L230.3 142.0L232.3 142.5L234.3 142.0L236.3 141.0L238.3 140.5L240.3 139.0L242.3 138.5L244.3 137.5L246.4 137.0L248.4 137.0L250.4 136.0L252.4 135.5L254.4 134.5L256.4 134.0L258.4 133.5L260.0 133.0L260.4 132.5L262.4 132.0L264.4 132.0L266.4 131.5L268.4 130.5L270.4 130.0L272.4 129.0L274.4 128.0L276.4 128.0L278.4 127.5L280.4 127.0L282.4 126.5L284.4 126.5L286.4 125.5L288.4 123.5L290.4 122.5L292.0 123.0L292.4 123.0L294.4 122.0L296.4 121.5L298.4 120.5L300.5 118.5L302.5 117.5L304.5 117.0L306.5 116.0L308.5 115.0L310.5 114.0L312.5 112.5L314.5 111.5L316.5 110.0L318.5 109.0L320.0 109.0L320.5 109.0L322.5 108.0L324.5 107.0L326.5 106.0L328.5 104.5L330.5 104.0L332.5 103.0L334.5 102.0L336.5 102.0L338.4 101.0L338.5 100.5L340.5 98.5L342.5 97.0L344.5 95.0L346.5 93.5L348.5 93.0L350.5 91.5L350.6 91.5L352.5 90.0L354.6 88.5L356.6 86.5L358.6 85.0L360.6 84.5L361.0 84.0L362.6 83.0L364.6 81.0L366.6 79.5L368.6 77.5L370.6 76.0L371.8 75.0L372.6 74.0L374.6 72.5L376.6 71.0L378.6 69.5L380.6 68.0L382.4 66.5L382.6 66.0L384.6 64.0L386.6 62.0L388.6 60.5L390.6 58.5L390.8 58.5L392.6 55.5L394.6 53.0L396.6 51.5L397.2 51.5L398.6 50.5L400.0 50.5L400.6 50.5L402.6 50.5L404.6 50.0L406.6 50.0L408.7 50.0L410.7 50.0L412.7 49.0L414.7 49.0L416.7 50.0L418.7 50.0L420.7 50.5L422.7 50.5L423.7 50.5L424.7 50.5L426.7 53.5L428.7 57.5L430.0 60.0L430.7 61.0L432.7 64.0L434.7 67.0L436.7 69.5L438.7 72.5L440.6 75.0L440.7 75.0L442.7 78.5L444.7 81.5L446.7 84.5L448.7 87.5L450.4 90.0L450.7 90.5L452.7 93.5L454.7 96.0L456.7 98.0L458.7 100.5L460.7 102.5L462.8 104.5L464.8 107.0L466.8 109.5L468.8 112.0L470.0 113.5L470.8 114.0L472.8 116.0L474.8 118.5L476.8 120.5L478.8 123.0L480.8 125.5L482.8 128.0L484.8 130.5L486.8 133.0L488.8 134.5L490.8 137.0L492.8 140.0L494.8 142.0L496.8 144.0L498.8 146.0L500.0 148.5L500.8 149.5L502.8 151.5L504.8 154.0L506.8 156.0L508.8 158.0L510.8 160.5L512.8 163.0L514.8 165.5L516.9 167.5L518.9 170.0L520.0 171.0L520.9 172.0L522.9 174.0L524.9 176.5L526.9 179.0L528.9 181.0L530.9 183.0L532.9 185.5L534.9 188.0L536.7 189.5L536.9 190.0L538.9 192.0L540.9 195.0L542.9 197.5L544.9 199.0L546.9 201.5L548.9 204.0L550.9 206.5L552.9 209.0L554.9 212.0L555.0 212.0L556.9 214.5L558.9 218.0L560.9 221.0L562.9 224.5L564.9 228.0L566.9 232.0L568.9 236.0L570.0 238.0L571.0 240.0L573.0 244.5L575.0 249.5L577.0 254.5L579.0 259.5L580.0 262.0L581.0 264.0L583.0 268.5L585.0 272.5L586.0 275.0L587.0 277.5L589.0 282.0L591.0 290.0L591.0 290.0L593.0 321.0L594.0 340.0L595.0 355.5L597.0 385.0L599.4 333.0L599.5 330.0L601.0 290.0L601.8 268.0L604.0 200.0L604.1 196.5L606.5 137.0L608.5 165.5L609.0 170.0L610.6 181.0L612.6 192.0L614.4 200.0L614.6 201.0L616.7 209.0L618.7 216.5L620.7 223.0L622.8 229.5L624.8 235.0L624.8 235.0L626.9 240.0L628.9 245.0L630.9 249.5L633.0 253.5L635.0 257.5L636.4 260.0L637.0 261.0L639.1 264.0L641.1 267.0L643.1 269.5L645.2 272.5L647.2 275.5L648.0 276.5L649.2 278.5L651.3 282.0L653.3 285.5L655.3 289.0L657.4 293.0L659.4 297.0L659.7 297.5L661.5 301.5L663.5 306.0L665.5 311.5L667.6 316.5L669.6 321.5L671.0 325.0L671.6 326.5L673.7 331.0L675.7 335.0L677.7 339.5L679.8 344.0L680.6 346.0L681.8 349.0L683.8 354.0L685.9 359.0L687.9 364.5L689.9 370.5L692.0 378.0L692.5 380.0L694.0 387.0L696.1 399.0L698.1 412.5L699.4 422.0L700.1 427.0L702.2 441.5L704.2 459.0L705.8 477.0L706.2 483.5L708.3 527.5L708.8 539.0L710.3 568.0L712.0 539.0L712.3 533.5L714.3 496.5L715.7 477.0L716.3 470.5L718.3 454.5L720.4 442.0L720.7 440.0L722.4 431.0L724.4 421.5L726.4 413.0L728.4 405.5L730.0 400.0L730.4 398.5L732.4 392.5L734.4 386.5L736.4 381.0L738.5 375.5L740.5 370.5L742.5 366.0L744.5 361.0L745.0 360.0L746.5 356.5L748.5 352.0L750.5 347.5L752.5 343.0L754.5 339.0L756.6 335.5L758.6 332.0L759.8 330.0L760.6 329.0L762.6 326.5L764.6 323.5L766.6 321.0L768.6 319.0L770.6 316.5L772.6 314.5L774.0 313.0L774.7 312.5L776.7 310.0L778.7 308.0L780.7 305.5L782.7 303.5L784.7 301.5L786.7 300.0L788.7 298.0L790.0 297.0L790.7 296.5L792.8 295.5L794.8 294.0L796.8 291.5L798.8 290.5L800.8 290.5L802.8 289.0L804.8 287.5L806.8 286.0L808.8 284.5L810.0 283.5L810.9 283.0L812.9 281.5L814.9 280.5L816.9 280.5L818.9 279.5L820.0 279.5L820.9 279.0L822.9 278.0L824.9 276.0L826.9 275.0L829.0 275.0L831.0 274.0L833.0 273.0L835.0 272.0L837.0 270.5L839.0 269.5L840.5 269.5L841.0 269.0L843.0 267.5L845.0 266.0L847.1 264.0L849.1 262.5L851.1 261.0L853.1 259.0L855.1 257.0L857.1 256.0L859.1 254.5L860.7 254.0L861.1 253.5L863.1 253.0L865.2 253.5L867.2 253.0L869.2 252.5L871.2 252.0L873.2 251.0L875.2 250.5L877.2 249.5L879.2 249.0L881.0 248.5L881.2 248.5L883.3 247.5L885.3 246.0L887.3 244.5L889.3 243.0L891.3 241.5L893.3 241.0L895.3 239.5L897.3 237.0L899.3 235.5L901.0 233.5L901.4 233.5L903.4 232.0L905.4 231.5L907.4 230.0L909.4 228.0L911.4 226.5L913.4 225.5L915.4 224.0L917.4 222.5L919.5 221.0L921.4 220.5L921.5 220.5L923.5 219.0L925.5 218.0L927.5 217.0L929.5 215.5L931.5 214.5L933.5 214.0L935.5 212.5L937.6 210.0L937.6 210.0L939.6 208.0L941.6 206.0L943.6 203.0L945.6 200.0L947.6 195.5L949.6 190.0L949.7 190.0L951.6 179.5L953.6 162.0L955.0 150.0L955.7 144.5L957.7 125.0L959.7 107.5L960.0 105.0L961.7 94.0L963.7 83.5L965.9 106.5L968.0 126.5L968.1 127.0L970.2 144.0L972.4 160.5L972.5 161.0L974.6 177.5L974.7 178.5L976.0 195.0L976.8 206.5L978.3 232.0L978.9 242.0L980.8 269.0L981.1 273.0L983.3 299.0L985.0 250.0L985.8 232.5L987.0 207.0L988.2 185.0L989.4 232.0L990.4 247.0L992.7 266.5L993.0 269.0L994.9 281.5L997.1 294.0L998.0 299.0L999.3 305.5L1001.5 317.0L1001.8 318.5L1003.8 341.0L1006.0 380.0" stroke="#808000"/>
<path d="M56.0 170.5L58.0 170.0L60.0 169.5L62.0 169.5L64.0 170.0L66.0 170.0L68.0 169.5L70.0 169.5L72.0 169.5L74.0 169.0L76.0 169.5L78.1 169.5L80.1 168.5L82.1 168.5L84.1 168.0L86.1 168.0L88.1 167.5L90.1 167.5L92.1 168.0L94.1 168.0L96.1 166.5L98.1 166.5L100.0 165.5L100.1 165.5L102.1 165.5L104.1 166.0L106.1 166.0L108.1 165.0L110.1 165.0L112.1 166.0L114.1 165.5L116.1 164.5L118.1 164.5L120.2 164.0L122.2 164.0L124.2 163.0L126.2 163.0L128.2 162.5L130.2 162.0L132.2 163.0L134.2 162.5L136.2 162.0L138.2 162.0L140.0 162.0L140.2 162.0L142.2 161.5L144.2 161.5L146.2 161.0L148.2 159.5L150.2 159.0L152.2 159.0L154.2 158.5L156.2 158.0L158.2 157.5L160.2 157.5L162.3 157.0L164.3 156.5L166.3 156.0L168.3 157.0L170.3 156.5L172.3 155.0L174.3 154.5L176.3 153.5L178.3 153.5L180.0 153.5L180.3 153.5L182.3 153.0L184.3 152.5L186.3 152.0L188.3 151.0L190.3 150.5L192.3 151.0L194.3 150.5L196.3 150.0L198.3 149.5L200.3 149.0L202.3 148.0L204.4 147.0L206.4 146.5L208.4 146.0L210.4 145.5L212.4 145.0L214.4 144.5L216.0 145.0L216.4 144.5L218.4 144.0L220.4 142.0L222.4 141.5L224.4 142.0L226.4 141.0L228.4 140.0L230.0 139.0L230.4 139.0L232.4 138.0L234.4 137.5L236.4 137.5L238.4 137.0L240.4 136.0L242.4 135.5L244.5 134.0L246.5 133.5L248.5 133.5L250.5 132.5L252.5 131.0L254.5 130.5L256.5 129.5L258.5 129.0L260.0 129.0L260.5 128.5L262.5 128.0L264.5 128.0L266.5 127.5L268.5 126.0L270.5 125.5L272.5 125.0L274.5 124.5L276.5 124.0L278.5 123.0L280.5 122.5L282.5 121.5L284.5 120.0L286.6 119.0L288.6 118.0L290.6 117.0L292.0 117.0L292.6 117.0L294.6 116.0L296.6 115.0L298.6 113.5L300.6 111.5L302.6 110.5L304.6 109.0L306.6 107.5L308.6 105.5L310.6 104.0L312.6 103.5L314.6 102.0L316.6 100.5L318.6 99.0L320.0 97.0L320.6 96.0L322.6 94.5L324.6 92.5L326.6 90.5L328.7 88.5L330.7 86.5L332.7 85.0L334.7 83.0L336.7 80.5L338.7 78.5L340.0 77.0L340.7 76.5L342.7 74.5L344.7 73.5L346.7 72.0L348.7 69.5L350.6 68.0L350.7 67.5L352.7 66.0L354.7 63.5L356.7 61.0L358.7 59.0L360.7 56.5L361.0 56.5L362.7 53.5L364.7 51.0L365.4 51.0L366.7 50.5L368.7 50.5L370.8 50.0L372.8 50.0L374.8 49.5L376.8 50.5L378.8 50.5L380.8 50.5L382.4 50.5L382.8 50.5L384.8 51.0L386.8 53.5L388.8 56.5L390.2 58.0L390.8 59.0L392.8 61.5L394.8 64.5L396.8 68.0L398.8 71.0L400.5 74.0L400.8 74.5L402.8 78.0L404.8 81.5L406.8 85.0L408.8 88.5L409.6 90.0L410.8 92.0L412.9 95.5L414.9 99.0L416.9 102.5L418.9 105.5L419.2 106.0L420.9 108.5L422.9 111.5L424.9 114.5L426.9 117.5L428.2 119.0L428.9 119.5L430.9 122.0L432.9 124.5L434.9 127.0L436.9 129.0L438.9 131.5L439.1 132.0L440.9 134.5L442.9 137.5L444.9 140.0L446.9 142.5L447.1 143.0L448.9 145.0L450.9 146.5L452.9 148.5L455.0 150.0L457.0 152.0L459.0 154.0L461.0 155.0L461.4 155.5L463.0 157.0L465.0 160.0L467.0 162.0L469.0 164.5L471.0 167.0L472.3 168.5L473.0 169.5L475.0 171.5L477.0 174.0L479.0 176.0L481.0 177.5L483.0 179.5L485.0 182.0L485.0 182.0L487.0 184.0L489.0 186.0L491.0 188.0L493.0 190.0L495.1 192.0L495.1 192.0L497.1 194.5L499.1 196.5L501.1 198.5L503.1 200.5L505.1 201.5L507.1 204.0L509.1 205.5L510.3 207.0L511.1 208.0L513.1 210.0L515.1 212.5L517.1 215.5L519.1 217.5L521.1 220.0L523.1 222.5L523.8 223.0L525.1 225.0L527.1 227.0L529.1 229.0L531.1 231.0L533.1 234.0L535.1 236.5L537.2 238.0L537.3 238.5L539.2 240.5L541.2 242.5L543.2 245.0L545.2 247.5L547.2 249.5L549.2 252.0L550.8 254.0L551.2 254.5L553.2 257.5L555.2 260.0L557.2 263.0L559.2 265.5L561.2 268.5L561.9 269.5L563.2 271.0L565.2 274.0L567.2 276.5L569.2 279.0L571.2 281.5L572.8 283.5L573.2 284.0L575.2 286.0L577.2 287.0L579.3 289.0L581.3 291.0L581.8 291.5L583.3 293.5L585.3 296.5L587.3 299.0L589.3 302.0L591.3 305.5L592.4 307.5L593.3 309.0L595.3 313.5L597.3 318.5L599.2 323.0L599.3 323.5L601.3 328.5L603.3 333.5L605.3 338.0L605.4 338.5L607.3 342.5L609.3 346.5L611.3 351.0L612.7 354.0L613.3 355.5L615.3 361.5L617.3 367.0L618.1 369.5L619.3 373.0L621.4 378.0L623.4 384.5L623.5 385.0L625.4 393.0L627.4 403.5L627.7 405.0L629.4 416.0L631.0 428.5L631.4 431.0L633.4 446.5L634.1 451.5L635.4 458.0L636.7 467.0L637.4 477.0L637.7 482.0L639.4 515.0L641.4 561.0L643.4 509.5L644.0 500.0L645.4 485.0L646.0 480.0L647.4 467.5L649.4 451.0L651.0 440.0L651.4 437.5L653.4 426.0L655.4 416.0L657.4 407.0L658.0 405.0L659.4 399.5L661.4 393.0L663.5 387.0L665.5 381.5L666.0 380.0L667.5 376.5L669.5 371.5L671.5 366.5L673.5 362.5L675.5 358.0L677.5 354.5L679.5 351.0L680.0 350.0L681.5 347.5L683.5 344.5L685.5 341.5L687.5 339.0L689.5 336.5L691.5 334.0L693.5 331.5L695.0 330.0L695.5 329.5L697.5 327.5L699.5 326.0L701.5 324.5L703.5 323.5L705.5 323.0L707.6 322.0L709.6 319.0L711.6 318.0L713.0 316.5L713.6 316.0L715.6 314.5L717.6 313.0L719.6 311.0L721.6 308.5L723.6 306.0L725.6 305.0L727.6 303.0L729.5 301.5L729.6 301.5L731.6 300.0L733.6 298.5L735.6 297.0L737.6 295.0L739.6 293.5L741.6 293.0L743.6 292.0L745.6 291.0L745.7 291.0L747.6 289.5L749.7 287.0L751.7 286.0L753.7 285.5L755.7 284.5L757.7 283.0L759.7 281.5L761.7 281.5L761.8 281.5L763.7 280.0L765.7 279.5L767.7 278.5L769.7 276.5L771.7 275.5L773.7 274.5L775.7 273.5L777.7 273.0L779.7 272.5L781.7 270.5L782.0 270.5L783.7 270.0L785.7 270.0L787.7 269.5L789.7 268.0L791.8 267.5L793.8 268.0L795.8 267.5L797.8 266.0L799.8 265.5L801.8 266.0L803.8 265.5L805.8 264.0L807.8 263.0L809.8 262.5L810.0 262.0L811.8 261.0L813.8 260.5L815.8 258.5L817.8 256.0L819.8 254.5L820.2 254.5L821.8 253.5L823.8 252.5L825.8 252.5L827.8 252.0L829.8 249.5L831.8 249.0L833.8 249.5L835.9 249.0L837.9 247.0L839.9 246.5L840.5 246.5L841.9 246.0L843.9 245.5L845.9 245.5L847.9 245.0L849.9 243.5L851.9 243.0L853.9 243.5L855.9 243.0L857.9 241.0L859.9 240.5L860.7 240.5L861.9 240.0L863.9 239.5L865.9 239.5L867.9 238.5L869.9 237.0L871.9 236.5L873.9 236.0L875.9 235.0L878.0 235.0L880.0 234.0L881.0 233.5L882.0 233.5L884.0 232.5L886.0 231.0L888.0 230.5L890.0 230.0L892.0 229.5L894.0 229.0L896.0 228.5L898.0 227.0L900.0 227.0L901.0 226.5L902.0 226.0L904.0 225.5L906.0 224.5L908.0 223.0L910.0 222.0L912.0 220.0L914.0 219.0L916.0 218.5L918.0 217.0L920.1 215.0L921.4 214.0L922.1 213.5L924.1 212.0L926.1 210.5L928.1 208.5L930.1 207.0L932.1 205.5L934.1 203.5L936.1 202.0L937.6 200.5L938.1 200.0L940.1 197.0L942.1 194.5L944.1 191.5L946.1 188.5L948.1 185.5L950.1 182.5L950.5 182.0L952.1 179.5L954.1 176.5L956.1 173.0L958.1 169.5L960.1 165.5L961.0 163.5L962.1 161.0L964.2 155.5L966.2 149.5L968.2 143.0L969.0 140.0L970.2 136.0L972.2 128.0L974.2 119.5L976.2 111.0L976.8 108.5L978.2 101.5L980.2 91.0L982.0 84.5L982.2 84.5L984.2 81.5L986.4 88.0L987.4 92.5L988.6 100.5L990.7 122.0L992.6 140.0L992.9 142.5L995.1 157.0L997.3 171.5L998.0 177.0L999.5 189.0L1001.6 208.5L1001.8 210.0L1003.8 229.0L1006.0 250.0" stroke="#000080"/>
</g>
<path d="M56.5 8.5H1004.5V622.5H56.5ZM53.0 16.5H56.0M53.0 31.5H56.0M53.0 47.5H56.0M53.0 62.5H56.0M53.0 78.5H56.0M53.0 94.5H56.0M53.0 109.5H56.0M53.0 125.5H56.0M53.0 140.5H56.0M53.0 156.5H56.0M53.0 172.5H56.0M53.0 187.5H56.0M53.0 203.5H56.0M53.0 218.5H56.0M53.0 234.5H56.0M53.0 249.5H56.0M53.0 265.5H56.0M53.0 281.5H56.0M53.0 296.5H56.0M53.0 312.5H56.0M53.0 327.5H56.0M53.0 343.5H56.0M53.0 359.5H56.0M53.0 374.5H56.0M53.0 390.5H56.0M53.0 405.5H56.0M53.0 421.5H56.0M53.0 437.5H56.0M53.0 452.5H56.0M53.0 468.5H56.0M53.0 483.5H56.0M53.0 499.5H56.0M53.0 514.5H56.0M53.0 530.5H56.0M53.0 546.5H56.0M53.0 561.5H56.0M53.0 577.5H56.0M53.0 592.5H56.0M53.0 608.5H56.0M103.5 623.0V626.5M182.5 623.0V626.5M261.5 623.0V626.5M340.5 623.0V626.5M419.5 623.0V626.5M498.5 623.0V626.5M577.5 623.0V626.5M656.5 623.0V626.5M735.5 623.0V626.5M814.5 623.0V626.5M893.5 623.0V626.5M972.5 623.0V626.5M20.5 2.5V626.5" stroke="#000" stroke-width="1" fill="none" shape-rendering="crispEdges"/>
<text x="50" y="20.5" text-anchor="end">4</text><text x="50" y="35.5" text-anchor="end">2</text><text x="50" y="51.5" text-anchor="end">0</text><text x="50" y="66.5" text-anchor="end">-2</text><text x="50" y="82.5" text-anchor="end">-4</text><text x="50" y="98.5" text-anchor="end">-6</text><text x="50" y="113.5" text-anchor="end">-8</text><text x="50" y="129.5" text-anchor="end">-10</text><text x="50" y="144.5" text-anchor="end">-12</text><text x="50" y="160.5" text-anchor="end">-14</text><text x="50" y="176.5" text-anchor="end">-16</text><text x="50" y="191.5" text-anchor="end">-18</text><text x="50" y="207.5" text-anchor="end">-20</text><text x="50" y="222.5" text-anchor="end">-22</text><text x="50" y="238.5" text-anchor="end">-24</text><text x="50" y="253.5" text-anchor="end">-26</text><text x="50" y="269.5" text-anchor="end">-28</text><text x="50" y="285.5" text-anchor="end">-30</text><text x="50" y="300.5" text-anchor="end">-32</text><text x="50" y="316.5" text-anchor="end">-34</text><text x="50" y="331.5" text-anchor="end">-36</text><text x="50" y="347.5" text-anchor="end">-38</text><text x="50" y="363.5" text-anchor="end">-40</text><text x="50" y="378.5" text-anchor="end">-42</text><text x="50" y="394.5" text-anchor="end">-44</text><text x="50" y="409.5" text-anchor="end">-46</text><text x="50" y="425.5" text-anchor="end">-48</text><text x="50" y="441.5" text-anchor="end">-50</text><text x="50" y="456.5" text-anchor="end">-52</text><text x="50" y="472.5" text-anchor="end">-54</text><text x="50" y="487.5" text-anchor="end">-56</text><text x="50" y="503.5" text-anchor="end">-58</text><text x="50" y="518.5" text-anchor="end">-60</text><text x="50" y="534.5" text-anchor="end">-62</text><text x="50" y="550.5" text-anchor="end">-64</text><text x="50" y="565.5" text-anchor="end">-66</text><text x="50" y="581.5" text-anchor="end">-68</text><text x="50" y="596.5" text-anchor="end">-70</text><text x="50" y="612.5" text-anchor="end">-72</text>
<text x="103.5" y="641" text-anchor="middle" letter-spacing="-0.17">8990000</text><text x="182.5" y="641" text-anchor="middle" letter-spacing="-0.17">8992000</text><text x="261.5" y="641" text-anchor="middle" letter-spacing="-0.17">8994000</text><text x="340.5" y="641" text-anchor="middle" letter-spacing="-0.17">8996000</text><text x="419.5" y="641" text-anchor="middle" letter-spacing="-0.17">8998000</text><text x="498.5" y="641" text-anchor="middle" letter-spacing="-0.17">9000000</text><text x="577.5" y="641" text-anchor="middle" letter-spacing="-0.17">9002000</text><text x="656.5" y="641" text-anchor="middle" letter-spacing="-0.17">9004000</text><text x="735.5" y="641" text-anchor="middle" letter-spacing="-0.17">9006000</text><text x="814.5" y="641" text-anchor="middle" letter-spacing="-0.17">9008000</text><text x="893.5" y="641" text-anchor="middle" letter-spacing="-0.17">9010000</text><text x="972.5" y="641" text-anchor="middle" letter-spacing="-0.17">9012000</text>
</svg>
<div class="tb" style="top:8px"><svg width="19" height="19" viewBox="0 0 19 19"><rect x="3.200" y="3" width="9.500" height="9.500" rx="3.500" fill="#c9def7" stroke="#93b9ec" stroke-width="1.500"/><path d="M12.500 12.300L15.200 15" stroke="#b4722f" stroke-width="3.600" stroke-linecap="round"/></svg></div>
<div class="tb" style="top:39px"><svg width="19" height="19" viewBox="0 0 19 19"><rect x="1.500" y="1.500" width="16" height="16" fill="#fff"/><path d="M2.500 2.500h5.500l-1.800 1.800 2.300 2.300-2.200 2.200-2.300-2.300-1.500 1.500zM16.500 2.500v5.500l-1.800-1.800-2.300 2.300-2.200-2.200 2.300-2.300-1.500-1.500zM2.500 16.500v-5.500l1.800 1.800 2.300-2.300 2.200 2.200-2.300 2.300 1.500 1.500zM16.500 16.500h-5.500l1.800-1.800-2.300-2.300 2.200-2.200 2.300 2.300 1.500-1.500z" fill="#5aa850"/></svg></div>
<div class="tb" style="top:70px"><svg width="19" height="19" viewBox="0 0 19 19"><path d="M9.500 2L13 6.500H11.300V12H13L9.500 16.500 6 12H7.700V6.500H6Z" fill="#55a552" stroke="#2d7d32" stroke-width="1.100" stroke-linejoin="round"/></svg></div>
<div class="tb" style="top:118px"><svg width="19" height="19" viewBox="0 0 19 19"><path d="M3 3L9 8L3 13Z" fill="#2a62d8"/><path d="M2.800 2.500V16H16" stroke="#2a55b8" stroke-width="1.600" fill="none"/><path d="M3.500 15C5 5 11 3 15.500 9" stroke="#e62020" stroke-width="2.200" fill="none"/><path d="M4 16C6 10 9 10 10.500 14C11.500 9 14 9 16 16Z" fill="#2f9a3a"/><path d="M6 9L14 12" stroke="#2a62d8" stroke-width="1.800"/></svg></div>
<div class="tb" style="top:164px"><svg width="19" height="19" viewBox="0 0 19 19"><rect x="1.500" y="5" width="16" height="11" rx="1.500" fill="#5c5c5c"/><rect x="2" y="5.500" width="15" height="4" rx="1" fill="#8a8a8a"/><rect x="12.500" y="3.500" width="3.500" height="2.500" fill="#555"/><rect x="8" y="4" width="2.500" height="1.500" fill="#e8c840"/><circle cx="7.500" cy="10.500" r="4.300" fill="#7fa9e6" stroke="#4f7fc8" stroke-width="1.200"/><rect x="13.500" y="7" width="1.500" height="8" fill="#bdbdbd"/></svg></div>
<div class="tb" style="top:220px"><svg width="19" height="19" viewBox="0 0 19 19"><rect x="3" y="2" width="9" height="9.500" fill="#b9d0f2" stroke="#5a83cc"/><path d="M4 3.500h7" stroke="#3f6fc4" stroke-width="1.400"/><rect x="5.500" y="4.500" width="9" height="9.500" fill="#b9d0f2" stroke="#5a83cc"/><path d="M6.500 6h7" stroke="#3f6fc4" stroke-width="1.400"/><rect x="8" y="7" width="9" height="10" fill="#d6e4f8" stroke="#4673c2"/><rect x="9" y="8" width="7" height="2.500" fill="#4a7bd0"/><rect x="10" y="13" width="5" height="3" fill="#6fbf5a"/></svg></div>
<div class="tb" style="top:251px"><svg width="19" height="19" viewBox="0 0 19 19"><path d="M8.500 2H14.500L17 4.500V14H8.500Z" fill="#fff" stroke="#111" stroke-width="1.200"/><path d="M10.500 6h4.500M10.500 8h4.500M10.500 10h4.500" stroke="#111" stroke-width="1"/><path d="M3.500 8C5 6.500 8 7 9 8.500H13V15.500H4C2 14 2 10 3.500 8Z" fill="#f0e040" stroke="#111" stroke-width="1.200"/></svg></div>
<div id="panel"><div id="ptop"></div><div id="ttl">Tracks</div><div id="cls">x</div><div id="list">
<div class="row" style="top:0px"><div class="cb"><svg width="9" height="9" viewBox="0 0 9 9"><path d="M1.2 4.2L3.5 6.5L7.8 1.8" stroke="#000" stroke-width="1.9" fill="none"/></svg></div><div class="ix">0</div><div class="sw" style="background:#0000FF"></div><div class="nm">1 - 7000</div></div>
<div class="row" style="top:18px"><div class="cb"><svg width="9" height="9" viewBox="0 0 9 9"><path d="M1.2 4.2L3.5 6.5L7.8 1.8" stroke="#000" stroke-width="1.9" fill="none"/></svg></div><div class="ix">1</div><div class="sw" style="background:#008000"></div><div class="nm">2 - 7300</div></div>
<div class="row" style="top:36px"><div class="cb"><svg width="9" height="9" viewBox="0 0 9 9"><path d="M1.2 4.2L3.5 6.5L7.8 1.8" stroke="#000" stroke-width="1.9" fill="none"/></svg></div><div class="ix">2</div><div class="sw" style="background:#000000"></div><div class="nm">3 - 7000</div></div>
<div class="row" style="top:54px"><div class="cb"><svg width="9" height="9" viewBox="0 0 9 9"><path d="M1.2 4.2L3.5 6.5L7.8 1.8" stroke="#000" stroke-width="1.9" fill="none"/></svg></div><div class="ix">3</div><div class="sw" style="background:#008080"></div><div class="nm">4 - 7650</div></div>
<div class="row" style="top:72px"><div class="cb"><svg width="9" height="9" viewBox="0 0 9 9"><path d="M1.2 4.2L3.5 6.5L7.8 1.8" stroke="#000" stroke-width="1.9" fill="none"/></svg></div><div class="ix">4</div><div class="sw" style="background:#800080"></div><div class="nm">Track 5</div></div>
<div class="row" style="top:90px"><div class="cb"><svg width="9" height="9" viewBox="0 0 9 9"><path d="M1.2 4.2L3.5 6.5L7.8 1.8" stroke="#000" stroke-width="1.9" fill="none"/></svg></div><div class="ix">5</div><div class="sw" style="background:#800000"></div><div class="nm">6 - 7000</div></div>
<div class="row" style="top:108px"><div class="cb"><svg width="9" height="9" viewBox="0 0 9 9"><path d="M1.2 4.2L3.5 6.5L7.8 1.8" stroke="#000" stroke-width="1.9" fill="none"/></svg></div><div class="ix">6</div><div class="sw" style="background:#808000"></div><div class="nm">7 - 5125</div></div>
<div class="row" style="top:126px"><div class="cb"><svg width="9" height="9" viewBox="0 0 9 9"><path d="M1.2 4.2L3.5 6.5L7.8 1.8" stroke="#000" stroke-width="1.9" fill="none"/></svg></div><div class="ix">7</div><div class="sw" style="background:#000080"></div><div class="nm">Track 8</div></div>
<div class="row" style="top:144px"><div class="cb"><svg width="9" height="9" viewBox="0 0 9 9"><path d="M1.2 4.2L3.5 6.5L7.8 1.8" stroke="#000" stroke-width="1.9" fill="none"/></svg></div><div class="ix">8</div><div class="sw" style="background:#00FF00"></div><div class="nm">9 - 5125</div></div>
<div class="row" style="top:162px"><div class="cb"><svg width="9" height="9" viewBox="0 0 9 9"><path d="M1.2 4.2L3.5 6.5L7.8 1.8" stroke="#000" stroke-width="1.9" fill="none"/></svg></div><div class="ix">9</div><div class="sw" style="background:#FF00FF"></div><div class="nm">10 - 8300</div></div>
<div class="row" style="top:180px"><div class="cb"><svg width="9" height="9" viewBox="0 0 9 9"><path d="M1.2 4.2L3.5 6.5L7.8 1.8" stroke="#000" stroke-width="1.9" fill="none"/></svg></div><div class="ix">10</div><div class="sw" style="background:#00FFFF"></div><div class="nm">11 - 7650</div></div>
<div class="row" style="top:198px"><div class="cb"><svg width="9" height="9" viewBox="0 0 9 9"><path d="M1.2 4.2L3.5 6.5L7.8 1.8" stroke="#000" stroke-width="1.9" fill="none"/></svg></div><div class="ix">11</div><div class="sw" style="background:#00FFFF"></div><div class="nm">12 - 7300</div></div>
<div class="row" style="top:216px"><div class="cb"><svg width="9" height="9" viewBox="0 0 9 9"><path d="M1.2 4.2L3.5 6.5L7.8 1.8" stroke="#000" stroke-width="1.9" fill="none"/></svg></div><div class="ix">12</div><div class="sw" style="background:#FF0000"></div><div class="nm">13 - 8300</div></div>
<div class="row" style="top:234px"><div class="cb"><svg width="9" height="9" viewBox="0 0 9 9"><path d="M1.2 4.2L3.5 6.5L7.8 1.8" stroke="#000" stroke-width="1.9" fill="none"/></svg></div><div class="ix">13</div><div class="sw" style="background:#0000FF"></div><div class="nm">14 - 7000+100</div></div>
<div class="row" style="top:252px"><div class="cb"><svg width="9" height="9" viewBox="0 0 9 9"><path d="M1.2 4.2L3.5 6.5L7.8 1.8" stroke="#000" stroke-width="1.9" fill="none"/></svg></div><div class="ix">14</div><div class="sw" style="background:#008000"></div><div class="nm">15 - 7650</div></div>
<div class="row" style="top:270px"><div class="cb"><svg width="9" height="9" viewBox="0 0 9 9"><path d="M1.2 4.2L3.5 6.5L7.8 1.8" stroke="#000" stroke-width="1.9" fill="none"/></svg></div><div class="ix">15</div><div class="sw" style="background:#000000"></div><div class="nm">Track 16</div></div>
<div class="row" style="top:288px"><div class="cb"><svg width="9" height="9" viewBox="0 0 9 9"><path d="M1.2 4.2L3.5 6.5L7.8 1.8" stroke="#000" stroke-width="1.9" fill="none"/></svg></div><div class="ix">16</div><div class="sw" style="background:#008080"></div><div class="nm">17 - 7000</div></div>
<div class="row" style="top:306px"><div class="cb"><svg width="9" height="9" viewBox="0 0 9 9"><path d="M1.2 4.2L3.5 6.5L7.8 1.8" stroke="#000" stroke-width="1.9" fill="none"/></svg></div><div class="ix">17</div><div class="sw" style="background:#800080"></div><div class="nm">18 - 7950</div></div>
<div class="row" style="top:324px"><div class="cb"><svg width="9" height="9" viewBox="0 0 9 9"><path d="M1.2 4.2L3.5 6.5L7.8 1.8" stroke="#000" stroke-width="1.9" fill="none"/></svg></div><div class="ix">18</div><div class="sw" style="background:#800000"></div><div class="nm">19 - 7000</div></div>
<div class="row" style="top:342px"><div class="cb"><svg width="9" height="9" viewBox="0 0 9 9"><path d="M1.2 4.2L3.5 6.5L7.8 1.8" stroke="#000" stroke-width="1.9" fill="none"/></svg></div><div class="ix">19</div><div class="sw" style="background:#808000"></div><div class="nm">20 - 7950</div></div>
<div class="row" style="top:360px"><div class="cb"><svg width="9" height="9" viewBox="0 0 9 9"><path d="M1.2 4.2L3.5 6.5L7.8 1.8" stroke="#000" stroke-width="1.9" fill="none"/></svg></div><div class="ix">20</div><div class="sw" style="background:#000080"></div><div class="nm">21 - 7000-100</div></div>
<div id="sb"><svg width="16" height="17" style="position:absolute;left:0;top:0"><path d="M4.200 10.500L7.500 7.200L10.800 10.500" stroke="#404040" stroke-width="1.9" fill="none"/></svg><div id="th"></div><svg width="16" height="17" style="position:absolute;left:0;top:352px"><path d="M4.200 6L7.500 9.300L10.800 6" stroke="#404040" stroke-width="1.9" fill="none"/></svg></div>
</div></div>
</body></html>
